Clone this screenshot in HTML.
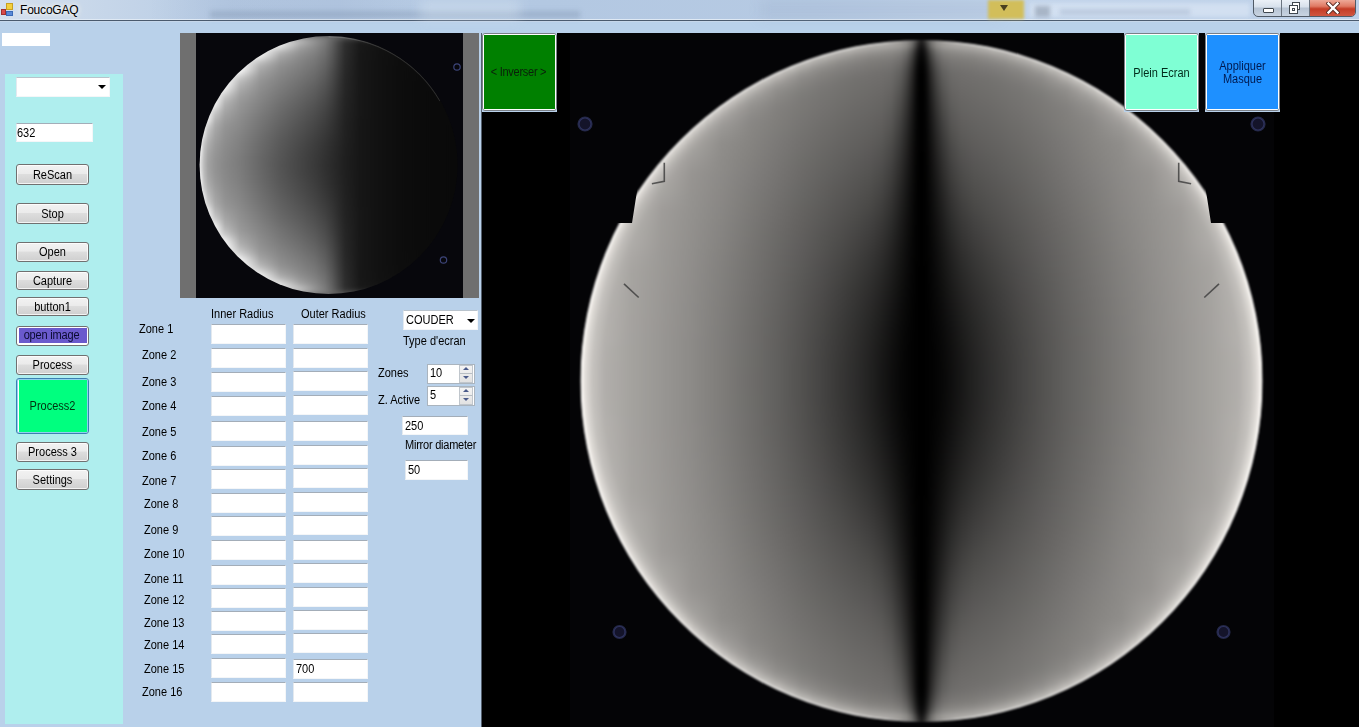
<!DOCTYPE html>
<html><head><meta charset="utf-8"><style>
*{margin:0;padding:0;box-sizing:border-box}
html,body{width:1359px;height:727px;overflow:hidden;background:#B9D1EA;font-family:"Liberation Sans",sans-serif;font-size:11px;color:#000}
.a{position:absolute}
.t{position:absolute;white-space:nowrap;line-height:13px;font-size:12px;transform:scaleX(0.917);transform-origin:0 0}
.c{transform-origin:50% 0}
.tb{position:absolute;background:#fff;border-top:1px solid #a3adb8;border-left:1px solid #e3e9ef;border-right:1px solid #f4f6f8;border-bottom:1px solid #f4f6f8;height:20px}
.btn{position:absolute;border:1px solid #707070;border-radius:3px;
 background:linear-gradient(#f2f2f2 0%,#ebebeb 45%,#dddddd 50%,#cfcfcf 100%);
 box-shadow:inset 0 0 0 1px rgba(255,255,255,.75)}
</style></head><body>
<div class="a" style="left:0px;top:0px;width:1359px;height:20px;background:linear-gradient(90deg,#d5e0ee 0%,#c9d8ea 6%,#b9cde5 16%,#b3c8e2 40%,#b6cae3 60%,#c2d4ea 75%,#bdd0e8 100%)"></div>
<div class="a" style="left:0px;top:19px;width:1359px;height:1px;background:#dfe9f4"></div>
<div class="a" style="left:0px;top:20px;width:1359px;height:1px;background:#4a5a6e"></div>
<div class="a" style="left:0px;top:21px;width:1359px;height:1px;background:#c6d7ea"></div>
<div class="a" style="left:150px;top:0px;width:270px;height:19px;background:linear-gradient(90deg,rgba(160,180,210,0) 0%,rgba(160,180,210,.35) 30%,rgba(160,180,210,.35) 70%,rgba(160,180,210,0) 100%)"></div>
<div class="a" style="left:210px;top:11px;width:370px;height:7px;background:rgba(110,130,160,.30);filter:blur(2.5px)"></div>
<div class="a" style="left:420px;top:0px;width:100px;height:19px;background:rgba(215,228,242,.45);filter:blur(6px)"></div>
<div class="a" style="left:760px;top:0px;width:240px;height:19px;background:rgba(150,170,200,.25);filter:blur(6px)"></div>
<div class="a" style="left:1030px;top:3px;width:220px;height:14px;background:rgba(225,235,248,.55);filter:blur(2px)"></div>
<div class="a" style="left:1060px;top:9px;width:130px;height:6px;background:rgba(120,140,170,.25);filter:blur(2px)"></div>
<div class="a" style="left:1035px;top:6px;width:15px;height:11px;background:rgba(90,100,120,.35);filter:blur(2px)"></div>
<div class="a" style="left:988px;top:0px;width:36px;height:19px;background:#d2be5a;filter:blur(1.5px)"></div>
<div class="a" style="left:1000px;top:5px;width:0;height:0;border-left:4px solid transparent;border-right:4px solid transparent;border-top:6px solid #4a4020;filter:blur(.6px)"></div>
<div class="a" style="left:1px;top:9px;width:5px;height:6px;background:#d84a4a;border:1px solid #a03030"></div>
<div class="a" style="left:6px;top:3px;width:7px;height:7px;background:#f3cf3c;border:1px solid #c8a020"></div>
<div class="a" style="left:6px;top:11px;width:7px;height:5px;background:#5a8ad8;border:1px solid #3a6ab8"></div>
<div class="t" style="left:20px;top:3px;font-size:12px;line-height:14px;color:#000;transform:none;letter-spacing:-0.2px;text-shadow:0 0 4px #fff,0 0 6px #f4f0e0">FoucoGAQ</div>
<div class="a" style="left:1253px;top:-2px;width:103px;height:19px;border:1px solid #505a66;border-radius:0 0 5px 5px;overflow:hidden;background:linear-gradient(#eef3f9,#d8e1ec 45%,#b7c4d4 55%,#c9d4e1)"><div class="a" style="left:56px;top:0;width:46px;height:18px;background:linear-gradient(#f0b0a0,#e07a64 40%,#c43c26 55%,#d25a44)"></div><div class="a" style="left:27px;top:0;width:1px;height:18px;background:#6a7480"></div><div class="a" style="left:55px;top:0;width:1px;height:18px;background:#6a7480"></div><div class="a" style="left:9px;top:9px;width:11px;height:5px;background:#fff;border:1px solid #404850;border-radius:1px"></div><div class="a" style="left:38px;top:3px;width:8px;height:8px;background:#fff;border:1px solid #404850"></div><div class="a" style="left:35px;top:6px;width:9px;height:9px;background:#fff;border:1px solid #404850"></div><div class="a" style="left:38px;top:9px;width:3px;height:3px;border:1px solid #404850"></div><svg class="a" style="left:72px;top:3px" width="14" height="12" viewBox="0 0 14 12"><path d="M2.5 1.5 L11.5 10.5 M11.5 1.5 L2.5 10.5" stroke="#5a2a22" stroke-width="4.2" stroke-linecap="square"/><path d="M2.5 1.5 L11.5 10.5 M11.5 1.5 L2.5 10.5" stroke="#fff" stroke-width="2.4" stroke-linecap="square"/></svg></div>
<div class="a" style="left:2px;top:33px;width:48px;height:13px;background:#fff"></div>
<div class="a" style="left:5px;top:74px;width:118px;height:650px;background:#AFEEEE"></div>
<div class="tb" style="left:16px;top:77px;width:94px;height:20px;border-top-color:#b9c3cc"></div>
<div class="a" style="left:98px;top:85px;width:0;height:0;border-left:4px solid transparent;border-right:4px solid transparent;border-top:4px solid #000"></div>
<div class="tb" style="left:16px;top:123px;width:77px;height:19px"></div>
<div class="t" style="left:17px;top:127px;color:#000;font-size:12px;">632</div>
<div class="btn" style="left:16px;top:164px;width:73px;height:21px"></div>
<div class="t c" style="left:16px;top:169px;width:73px;text-align:center">ReScan</div>
<div class="btn" style="left:16px;top:203px;width:73px;height:21px"></div>
<div class="t c" style="left:16px;top:208px;width:73px;text-align:center">Stop</div>
<div class="btn" style="left:16px;top:242px;width:73px;height:20px"></div>
<div class="t c" style="left:16px;top:246px;width:73px;text-align:center">Open</div>
<div class="btn" style="left:16px;top:271px;width:73px;height:19px"></div>
<div class="t c" style="left:16px;top:275px;width:73px;text-align:center">Capture</div>
<div class="btn" style="left:16px;top:297px;width:73px;height:19px"></div>
<div class="t c" style="left:16px;top:301px;width:73px;text-align:center">button1</div>
<div class="a" style="left:16px;top:326px;width:73px;height:20px;border:1px solid #707070;border-radius:3px;background:#fff"></div>
<div class="a" style="left:19px;top:328px;width:68px;height:15px;background:#6A5ACD"></div>
<div class="t c" style="left:15px;top:329px;width:73px;text-align:center;color:#0a0a30;letter-spacing:-0.2px">open image</div>
<div class="btn" style="left:16px;top:355px;width:73px;height:20px"></div>
<div class="t c" style="left:16px;top:359px;width:73px;text-align:center">Process</div>
<div class="a" style="left:16px;top:378px;width:73px;height:56px;border:1px solid #3c7fb1;border-radius:3px;background:#fff;box-shadow:inset 0 0 0 1px #8fd0f0"></div>
<div class="a" style="left:19px;top:380px;width:68px;height:52px;background:#00FF7F"></div>
<div class="t c" style="left:16px;top:400px;width:73px;text-align:center;color:#003010">Process2</div>
<div class="btn" style="left:16px;top:442px;width:73px;height:20px"></div>
<div class="t c" style="left:16px;top:446px;width:73px;text-align:center">Process 3</div>
<div class="btn" style="left:16px;top:469px;width:73px;height:21px"></div>
<div class="t c" style="left:16px;top:474px;width:73px;text-align:center">Settings</div>
<div class="t" style="left:211px;top:308px;color:#000;font-size:12px;">Inner Radius</div>
<div class="t" style="left:301px;top:308px;color:#000;font-size:12px;">Outer Radius</div>
<div class="t" style="left:139px;top:323px;color:#000;font-size:12px;">Zone 1</div>
<div class="tb" style="left:211px;top:324px;width:75px;height:20px"></div>
<div class="tb" style="left:293px;top:324px;width:75px;height:20px"></div>
<div class="t" style="left:142px;top:349px;color:#000;font-size:12px;">Zone 2</div>
<div class="tb" style="left:211px;top:348px;width:75px;height:20px"></div>
<div class="tb" style="left:293px;top:348px;width:75px;height:20px"></div>
<div class="t" style="left:142px;top:376px;color:#000;font-size:12px;">Zone 3</div>
<div class="tb" style="left:211px;top:372px;width:75px;height:20px"></div>
<div class="tb" style="left:293px;top:371px;width:75px;height:20px"></div>
<div class="t" style="left:142px;top:400px;color:#000;font-size:12px;">Zone 4</div>
<div class="tb" style="left:211px;top:396px;width:75px;height:20px"></div>
<div class="tb" style="left:293px;top:395px;width:75px;height:20px"></div>
<div class="t" style="left:142px;top:426px;color:#000;font-size:12px;">Zone 5</div>
<div class="tb" style="left:211px;top:421px;width:75px;height:20px"></div>
<div class="tb" style="left:293px;top:421px;width:75px;height:20px"></div>
<div class="t" style="left:142px;top:450px;color:#000;font-size:12px;">Zone 6</div>
<div class="tb" style="left:211px;top:446px;width:75px;height:20px"></div>
<div class="tb" style="left:293px;top:445px;width:75px;height:20px"></div>
<div class="t" style="left:142px;top:475px;color:#000;font-size:12px;">Zone 7</div>
<div class="tb" style="left:211px;top:469px;width:75px;height:20px"></div>
<div class="tb" style="left:293px;top:468px;width:75px;height:20px"></div>
<div class="t" style="left:144px;top:498px;color:#000;font-size:12px;">Zone 8</div>
<div class="tb" style="left:211px;top:493px;width:75px;height:20px"></div>
<div class="tb" style="left:293px;top:492px;width:75px;height:20px"></div>
<div class="t" style="left:144px;top:524px;color:#000;font-size:12px;">Zone 9</div>
<div class="tb" style="left:211px;top:516px;width:75px;height:20px"></div>
<div class="tb" style="left:293px;top:515px;width:75px;height:20px"></div>
<div class="t" style="left:144px;top:548px;color:#000;font-size:12px;">Zone 10</div>
<div class="tb" style="left:211px;top:540px;width:75px;height:20px"></div>
<div class="tb" style="left:293px;top:540px;width:75px;height:20px"></div>
<div class="t" style="left:144px;top:573px;color:#000;font-size:12px;">Zone 11</div>
<div class="tb" style="left:211px;top:565px;width:75px;height:20px"></div>
<div class="tb" style="left:293px;top:563px;width:75px;height:20px"></div>
<div class="t" style="left:144px;top:594px;color:#000;font-size:12px;">Zone 12</div>
<div class="tb" style="left:211px;top:588px;width:75px;height:20px"></div>
<div class="tb" style="left:293px;top:587px;width:75px;height:20px"></div>
<div class="t" style="left:144px;top:617px;color:#000;font-size:12px;">Zone 13</div>
<div class="tb" style="left:211px;top:611px;width:75px;height:20px"></div>
<div class="tb" style="left:293px;top:610px;width:75px;height:20px"></div>
<div class="t" style="left:144px;top:639px;color:#000;font-size:12px;">Zone 14</div>
<div class="tb" style="left:211px;top:634px;width:75px;height:20px"></div>
<div class="tb" style="left:293px;top:633px;width:75px;height:20px"></div>
<div class="t" style="left:144px;top:663px;color:#000;font-size:12px;">Zone 15</div>
<div class="tb" style="left:211px;top:658px;width:75px;height:20px"></div>
<div class="tb" style="left:293px;top:659px;width:75px;height:20px"></div>
<div class="t" style="left:296px;top:663px;color:#000;font-size:12px;">700</div>
<div class="t" style="left:142px;top:686px;color:#000;font-size:12px;">Zone 16</div>
<div class="tb" style="left:211px;top:682px;width:75px;height:20px"></div>
<div class="tb" style="left:293px;top:682px;width:75px;height:20px"></div>
<div class="tb" style="left:403px;top:310px;width:75px;height:20px;border-top-color:#b9c3cc"></div>
<div class="t" style="left:406px;top:314px;color:#000;font-size:12px;">COUDER</div>
<div class="a" style="left:467px;top:319px;width:0;height:0;border-left:4px solid transparent;border-right:4px solid transparent;border-top:4px solid #000"></div>
<div class="t" style="left:403px;top:335px;color:#000;font-size:12px;">Type d'ecran</div>
<div class="t" style="left:378px;top:367px;color:#000;font-size:12px;">Zones</div>
<div class="t" style="left:378px;top:394px;color:#000;font-size:12px;">Z. Active</div>
<div class="a" style="left:427px;top:364px;width:48px;height:20px;background:#fff;border:1px solid #aab4be"></div>
<div class="a" style="left:459px;top:365px;width:14px;height:18px;background:linear-gradient(#f4f4f4,#e2e2e2);border:1px solid #c0c6cc"></div>
<div class="a" style="left:460px;top:373px;width:12px;height:1px;background:#b8bec4"></div>
<div class="a" style="left:463px;top:367px;width:0;height:0;border-left:3px solid transparent;border-right:3px solid transparent;border-bottom:3px solid #4a5a8a"></div>
<div class="a" style="left:463px;top:376px;width:0;height:0;border-left:3px solid transparent;border-right:3px solid transparent;border-top:3px solid #4a5a8a"></div>
<div class="t" style="left:430px;top:367px;color:#000;font-size:12px;">10</div>
<div class="a" style="left:427px;top:386px;width:48px;height:20px;background:#fff;border:1px solid #aab4be"></div>
<div class="a" style="left:459px;top:387px;width:14px;height:18px;background:linear-gradient(#f4f4f4,#e2e2e2);border:1px solid #c0c6cc"></div>
<div class="a" style="left:460px;top:395px;width:12px;height:1px;background:#b8bec4"></div>
<div class="a" style="left:463px;top:389px;width:0;height:0;border-left:3px solid transparent;border-right:3px solid transparent;border-bottom:3px solid #4a5a8a"></div>
<div class="a" style="left:463px;top:398px;width:0;height:0;border-left:3px solid transparent;border-right:3px solid transparent;border-top:3px solid #4a5a8a"></div>
<div class="t" style="left:430px;top:389px;color:#000;font-size:12px;">5</div>
<div class="tb" style="left:402px;top:416px;width:66px;height:19px"></div>
<div class="t" style="left:405px;top:420px;color:#000;font-size:12px;">250</div>
<div class="t" style="left:405px;top:439px;color:#000;font-size:12px;letter-spacing:-0.25px">Mirror diameter</div>
<div class="tb" style="left:405px;top:460px;width:63px;height:20px"></div>
<div class="t" style="left:408px;top:464px;color:#000;font-size:12px;">50</div>
<svg class="a" style="left:180px;top:33px" width="299" height="265" viewBox="180 33 299 265"><defs><linearGradient id="s0" gradientUnits="userSpaceOnUse" x1="199" y1="0" x2="463" y2="0"><stop offset="0.000" stop-color="#767676"/><stop offset="0.008" stop-color="#767676"/><stop offset="0.019" stop-color="#767676"/><stop offset="0.034" stop-color="#767676"/><stop offset="0.061" stop-color="#767676"/><stop offset="0.098" stop-color="#767676"/><stop offset="0.155" stop-color="#767676"/><stop offset="0.231" stop-color="#767676"/><stop offset="0.307" stop-color="#767676"/><stop offset="0.383" stop-color="#767676"/><stop offset="0.439" stop-color="#767676"/><stop offset="0.477" stop-color="#767676"/><stop offset="0.504" stop-color="#717171"/><stop offset="0.527" stop-color="#717171"/><stop offset="0.553" stop-color="#717171"/><stop offset="0.610" stop-color="#717171"/><stop offset="0.686" stop-color="#717171"/><stop offset="0.761" stop-color="#717171"/><stop offset="0.837" stop-color="#717171"/><stop offset="0.913" stop-color="#717171"/><stop offset="1.000" stop-color="#717171"/></linearGradient><linearGradient id="s1" gradientUnits="userSpaceOnUse" x1="199" y1="0" x2="463" y2="0"><stop offset="0.000" stop-color="#e2e2e2"/><stop offset="0.008" stop-color="#e2e2e2"/><stop offset="0.019" stop-color="#e2e2e2"/><stop offset="0.034" stop-color="#e2e2e2"/><stop offset="0.061" stop-color="#e2e2e2"/><stop offset="0.098" stop-color="#e2e2e2"/><stop offset="0.155" stop-color="#e2e2e2"/><stop offset="0.231" stop-color="#e2e2e2"/><stop offset="0.307" stop-color="#e2e2e2"/><stop offset="0.383" stop-color="#c4c4c4"/><stop offset="0.439" stop-color="#989898"/><stop offset="0.477" stop-color="#7d7d7d"/><stop offset="0.504" stop-color="#626262"/><stop offset="0.527" stop-color="#494949"/><stop offset="0.553" stop-color="#2e2e2e"/><stop offset="0.610" stop-color="#181818"/><stop offset="0.686" stop-color="#171717"/><stop offset="0.761" stop-color="#171717"/><stop offset="0.837" stop-color="#171717"/><stop offset="0.913" stop-color="#171717"/><stop offset="1.000" stop-color="#171717"/></linearGradient><linearGradient id="s2" gradientUnits="userSpaceOnUse" x1="199" y1="0" x2="463" y2="0"><stop offset="0.000" stop-color="#f5f5f5"/><stop offset="0.008" stop-color="#f5f5f5"/><stop offset="0.019" stop-color="#f5f5f5"/><stop offset="0.034" stop-color="#f5f5f5"/><stop offset="0.061" stop-color="#f5f5f5"/><stop offset="0.098" stop-color="#f5f5f5"/><stop offset="0.155" stop-color="#f5f5f5"/><stop offset="0.231" stop-color="#f5f5f5"/><stop offset="0.307" stop-color="#f5f5f5"/><stop offset="0.383" stop-color="#a6a6a6"/><stop offset="0.439" stop-color="#8b8b8b"/><stop offset="0.477" stop-color="#767676"/><stop offset="0.504" stop-color="#5f5f5f"/><stop offset="0.527" stop-color="#464646"/><stop offset="0.553" stop-color="#2e2e2e"/><stop offset="0.610" stop-color="#181818"/><stop offset="0.686" stop-color="#121212"/><stop offset="0.761" stop-color="#121212"/><stop offset="0.837" stop-color="#121212"/><stop offset="0.913" stop-color="#121212"/><stop offset="1.000" stop-color="#121212"/></linearGradient><linearGradient id="s3" gradientUnits="userSpaceOnUse" x1="199" y1="0" x2="463" y2="0"><stop offset="0.000" stop-color="#f8f8f8"/><stop offset="0.008" stop-color="#f8f8f8"/><stop offset="0.019" stop-color="#f8f8f8"/><stop offset="0.034" stop-color="#f8f8f8"/><stop offset="0.061" stop-color="#f8f8f8"/><stop offset="0.098" stop-color="#f8f8f8"/><stop offset="0.155" stop-color="#f8f8f8"/><stop offset="0.231" stop-color="#f8f8f8"/><stop offset="0.307" stop-color="#bebebe"/><stop offset="0.383" stop-color="#969696"/><stop offset="0.439" stop-color="#848484"/><stop offset="0.477" stop-color="#717171"/><stop offset="0.504" stop-color="#5b5b5b"/><stop offset="0.527" stop-color="#444444"/><stop offset="0.553" stop-color="#2d2d2d"/><stop offset="0.610" stop-color="#181818"/><stop offset="0.686" stop-color="#111111"/><stop offset="0.761" stop-color="#0f0f0f"/><stop offset="0.837" stop-color="#0f0f0f"/><stop offset="0.913" stop-color="#0f0f0f"/><stop offset="1.000" stop-color="#0f0f0f"/></linearGradient><linearGradient id="s4" gradientUnits="userSpaceOnUse" x1="199" y1="0" x2="463" y2="0"><stop offset="0.000" stop-color="#fbfbfb"/><stop offset="0.008" stop-color="#fbfbfb"/><stop offset="0.019" stop-color="#fbfbfb"/><stop offset="0.034" stop-color="#fbfbfb"/><stop offset="0.061" stop-color="#fbfbfb"/><stop offset="0.098" stop-color="#fbfbfb"/><stop offset="0.155" stop-color="#fbfbfb"/><stop offset="0.231" stop-color="#fbfbfb"/><stop offset="0.307" stop-color="#a7a7a7"/><stop offset="0.383" stop-color="#8c8c8c"/><stop offset="0.439" stop-color="#7c7c7c"/><stop offset="0.477" stop-color="#6c6c6c"/><stop offset="0.504" stop-color="#585858"/><stop offset="0.527" stop-color="#424242"/><stop offset="0.553" stop-color="#2c2c2c"/><stop offset="0.610" stop-color="#171717"/><stop offset="0.686" stop-color="#111111"/><stop offset="0.761" stop-color="#0e0e0e"/><stop offset="0.837" stop-color="#0e0e0e"/><stop offset="0.913" stop-color="#0e0e0e"/><stop offset="1.000" stop-color="#0e0e0e"/></linearGradient><linearGradient id="s5" gradientUnits="userSpaceOnUse" x1="199" y1="0" x2="463" y2="0"><stop offset="0.000" stop-color="#fdfdfd"/><stop offset="0.008" stop-color="#fdfdfd"/><stop offset="0.019" stop-color="#fdfdfd"/><stop offset="0.034" stop-color="#fdfdfd"/><stop offset="0.061" stop-color="#fdfdfd"/><stop offset="0.098" stop-color="#fdfdfd"/><stop offset="0.155" stop-color="#fdfdfd"/><stop offset="0.231" stop-color="#cacaca"/><stop offset="0.307" stop-color="#9b9b9b"/><stop offset="0.383" stop-color="#858585"/><stop offset="0.439" stop-color="#777777"/><stop offset="0.477" stop-color="#686868"/><stop offset="0.504" stop-color="#555555"/><stop offset="0.527" stop-color="#404040"/><stop offset="0.553" stop-color="#2b2b2b"/><stop offset="0.610" stop-color="#171717"/><stop offset="0.686" stop-color="#111111"/><stop offset="0.761" stop-color="#0d0d0d"/><stop offset="0.837" stop-color="#0d0d0d"/><stop offset="0.913" stop-color="#0d0d0d"/><stop offset="1.000" stop-color="#0d0d0d"/></linearGradient><linearGradient id="s6" gradientUnits="userSpaceOnUse" x1="199" y1="0" x2="463" y2="0"><stop offset="0.000" stop-color="#fefefe"/><stop offset="0.008" stop-color="#fefefe"/><stop offset="0.019" stop-color="#fefefe"/><stop offset="0.034" stop-color="#fefefe"/><stop offset="0.061" stop-color="#fefefe"/><stop offset="0.098" stop-color="#fefefe"/><stop offset="0.155" stop-color="#fefefe"/><stop offset="0.231" stop-color="#b1b1b1"/><stop offset="0.307" stop-color="#909090"/><stop offset="0.383" stop-color="#808080"/><stop offset="0.439" stop-color="#737373"/><stop offset="0.477" stop-color="#646464"/><stop offset="0.504" stop-color="#525252"/><stop offset="0.527" stop-color="#3e3e3e"/><stop offset="0.553" stop-color="#2a2a2a"/><stop offset="0.610" stop-color="#171717"/><stop offset="0.686" stop-color="#111111"/><stop offset="0.761" stop-color="#0d0d0d"/><stop offset="0.837" stop-color="#0c0c0c"/><stop offset="0.913" stop-color="#0c0c0c"/><stop offset="1.000" stop-color="#0c0c0c"/></linearGradient><linearGradient id="s7" gradientUnits="userSpaceOnUse" x1="199" y1="0" x2="463" y2="0"><stop offset="0.000" stop-color="#ffffff"/><stop offset="0.008" stop-color="#ffffff"/><stop offset="0.019" stop-color="#ffffff"/><stop offset="0.034" stop-color="#ffffff"/><stop offset="0.061" stop-color="#ffffff"/><stop offset="0.098" stop-color="#ffffff"/><stop offset="0.155" stop-color="#ffffff"/><stop offset="0.231" stop-color="#a6a6a6"/><stop offset="0.307" stop-color="#8b8b8b"/><stop offset="0.383" stop-color="#7b7b7b"/><stop offset="0.439" stop-color="#6e6e6e"/><stop offset="0.477" stop-color="#606060"/><stop offset="0.504" stop-color="#4e4e4e"/><stop offset="0.527" stop-color="#3c3c3c"/><stop offset="0.553" stop-color="#292929"/><stop offset="0.610" stop-color="#171717"/><stop offset="0.686" stop-color="#111111"/><stop offset="0.761" stop-color="#0d0d0d"/><stop offset="0.837" stop-color="#0c0c0c"/><stop offset="0.913" stop-color="#0c0c0c"/><stop offset="1.000" stop-color="#0c0c0c"/></linearGradient><linearGradient id="s8" gradientUnits="userSpaceOnUse" x1="199" y1="0" x2="463" y2="0"><stop offset="0.000" stop-color="#ffffff"/><stop offset="0.008" stop-color="#ffffff"/><stop offset="0.019" stop-color="#ffffff"/><stop offset="0.034" stop-color="#ffffff"/><stop offset="0.061" stop-color="#ffffff"/><stop offset="0.098" stop-color="#ffffff"/><stop offset="0.155" stop-color="#d5d5d5"/><stop offset="0.231" stop-color="#9c9c9c"/><stop offset="0.307" stop-color="#868686"/><stop offset="0.383" stop-color="#777777"/><stop offset="0.439" stop-color="#6a6a6a"/><stop offset="0.477" stop-color="#5c5c5c"/><stop offset="0.504" stop-color="#4b4b4b"/><stop offset="0.527" stop-color="#3a3a3a"/><stop offset="0.553" stop-color="#282828"/><stop offset="0.610" stop-color="#171717"/><stop offset="0.686" stop-color="#111111"/><stop offset="0.761" stop-color="#0d0d0d"/><stop offset="0.837" stop-color="#0b0b0b"/><stop offset="0.913" stop-color="#0b0b0b"/><stop offset="1.000" stop-color="#0b0b0b"/></linearGradient><linearGradient id="s9" gradientUnits="userSpaceOnUse" x1="199" y1="0" x2="463" y2="0"><stop offset="0.000" stop-color="#fefefe"/><stop offset="0.008" stop-color="#fefefe"/><stop offset="0.019" stop-color="#fefefe"/><stop offset="0.034" stop-color="#fefefe"/><stop offset="0.061" stop-color="#fefefe"/><stop offset="0.098" stop-color="#fefefe"/><stop offset="0.155" stop-color="#bfbfbf"/><stop offset="0.231" stop-color="#959595"/><stop offset="0.307" stop-color="#828282"/><stop offset="0.383" stop-color="#727272"/><stop offset="0.439" stop-color="#666666"/><stop offset="0.477" stop-color="#585858"/><stop offset="0.504" stop-color="#494949"/><stop offset="0.527" stop-color="#383838"/><stop offset="0.553" stop-color="#272727"/><stop offset="0.610" stop-color="#171717"/><stop offset="0.686" stop-color="#111111"/><stop offset="0.761" stop-color="#0d0d0d"/><stop offset="0.837" stop-color="#0b0b0b"/><stop offset="0.913" stop-color="#0b0b0b"/><stop offset="1.000" stop-color="#0b0b0b"/></linearGradient><linearGradient id="s10" gradientUnits="userSpaceOnUse" x1="199" y1="0" x2="463" y2="0"><stop offset="0.000" stop-color="#fcfcfc"/><stop offset="0.008" stop-color="#fcfcfc"/><stop offset="0.019" stop-color="#fcfcfc"/><stop offset="0.034" stop-color="#fcfcfc"/><stop offset="0.061" stop-color="#fcfcfc"/><stop offset="0.098" stop-color="#fcfcfc"/><stop offset="0.155" stop-color="#b1b1b1"/><stop offset="0.231" stop-color="#909090"/><stop offset="0.307" stop-color="#7e7e7e"/><stop offset="0.383" stop-color="#6e6e6e"/><stop offset="0.439" stop-color="#616161"/><stop offset="0.477" stop-color="#545454"/><stop offset="0.504" stop-color="#464646"/><stop offset="0.527" stop-color="#363636"/><stop offset="0.553" stop-color="#272727"/><stop offset="0.610" stop-color="#171717"/><stop offset="0.686" stop-color="#111111"/><stop offset="0.761" stop-color="#0d0d0d"/><stop offset="0.837" stop-color="#0b0b0b"/><stop offset="0.913" stop-color="#0a0a0a"/><stop offset="1.000" stop-color="#0a0a0a"/></linearGradient><linearGradient id="s11" gradientUnits="userSpaceOnUse" x1="199" y1="0" x2="463" y2="0"><stop offset="0.000" stop-color="#fafafa"/><stop offset="0.008" stop-color="#fafafa"/><stop offset="0.019" stop-color="#fafafa"/><stop offset="0.034" stop-color="#fafafa"/><stop offset="0.061" stop-color="#fafafa"/><stop offset="0.098" stop-color="#e6e6e6"/><stop offset="0.155" stop-color="#a8a8a8"/><stop offset="0.231" stop-color="#8c8c8c"/><stop offset="0.307" stop-color="#7a7a7a"/><stop offset="0.383" stop-color="#6a6a6a"/><stop offset="0.439" stop-color="#5d5d5d"/><stop offset="0.477" stop-color="#515151"/><stop offset="0.504" stop-color="#434343"/><stop offset="0.527" stop-color="#353535"/><stop offset="0.553" stop-color="#262626"/><stop offset="0.610" stop-color="#171717"/><stop offset="0.686" stop-color="#111111"/><stop offset="0.761" stop-color="#0d0d0d"/><stop offset="0.837" stop-color="#0b0b0b"/><stop offset="0.913" stop-color="#0a0a0a"/><stop offset="1.000" stop-color="#0a0a0a"/></linearGradient><linearGradient id="s12" gradientUnits="userSpaceOnUse" x1="199" y1="0" x2="463" y2="0"><stop offset="0.000" stop-color="#f9f9f9"/><stop offset="0.008" stop-color="#f9f9f9"/><stop offset="0.019" stop-color="#f9f9f9"/><stop offset="0.034" stop-color="#f9f9f9"/><stop offset="0.061" stop-color="#f9f9f9"/><stop offset="0.098" stop-color="#cbcbcb"/><stop offset="0.155" stop-color="#9f9f9f"/><stop offset="0.231" stop-color="#888888"/><stop offset="0.307" stop-color="#767676"/><stop offset="0.383" stop-color="#666666"/><stop offset="0.439" stop-color="#5a5a5a"/><stop offset="0.477" stop-color="#4d4d4d"/><stop offset="0.504" stop-color="#404040"/><stop offset="0.527" stop-color="#333333"/><stop offset="0.553" stop-color="#252525"/><stop offset="0.610" stop-color="#171717"/><stop offset="0.686" stop-color="#111111"/><stop offset="0.761" stop-color="#0d0d0d"/><stop offset="0.837" stop-color="#0b0b0b"/><stop offset="0.913" stop-color="#0a0a0a"/><stop offset="1.000" stop-color="#0a0a0a"/></linearGradient><linearGradient id="s13" gradientUnits="userSpaceOnUse" x1="199" y1="0" x2="463" y2="0"><stop offset="0.000" stop-color="#f7f7f7"/><stop offset="0.008" stop-color="#f7f7f7"/><stop offset="0.019" stop-color="#f7f7f7"/><stop offset="0.034" stop-color="#f7f7f7"/><stop offset="0.061" stop-color="#f7f7f7"/><stop offset="0.098" stop-color="#b9b9b9"/><stop offset="0.155" stop-color="#999999"/><stop offset="0.231" stop-color="#858585"/><stop offset="0.307" stop-color="#727272"/><stop offset="0.383" stop-color="#626262"/><stop offset="0.439" stop-color="#565656"/><stop offset="0.477" stop-color="#4a4a4a"/><stop offset="0.504" stop-color="#3e3e3e"/><stop offset="0.527" stop-color="#313131"/><stop offset="0.553" stop-color="#242424"/><stop offset="0.610" stop-color="#171717"/><stop offset="0.686" stop-color="#111111"/><stop offset="0.761" stop-color="#0d0d0d"/><stop offset="0.837" stop-color="#0b0b0b"/><stop offset="0.913" stop-color="#0a0a0a"/><stop offset="1.000" stop-color="#0a0a0a"/></linearGradient><linearGradient id="s14" gradientUnits="userSpaceOnUse" x1="199" y1="0" x2="463" y2="0"><stop offset="0.000" stop-color="#f5f5f5"/><stop offset="0.008" stop-color="#f5f5f5"/><stop offset="0.019" stop-color="#f5f5f5"/><stop offset="0.034" stop-color="#f5f5f5"/><stop offset="0.061" stop-color="#efefef"/><stop offset="0.098" stop-color="#aeaeae"/><stop offset="0.155" stop-color="#959595"/><stop offset="0.231" stop-color="#818181"/><stop offset="0.307" stop-color="#6e6e6e"/><stop offset="0.383" stop-color="#5f5f5f"/><stop offset="0.439" stop-color="#525252"/><stop offset="0.477" stop-color="#474747"/><stop offset="0.504" stop-color="#3c3c3c"/><stop offset="0.527" stop-color="#303030"/><stop offset="0.553" stop-color="#242424"/><stop offset="0.610" stop-color="#171717"/><stop offset="0.686" stop-color="#111111"/><stop offset="0.761" stop-color="#0d0d0d"/><stop offset="0.837" stop-color="#0b0b0b"/><stop offset="0.913" stop-color="#0a0a0a"/><stop offset="1.000" stop-color="#0a0a0a"/></linearGradient><linearGradient id="s15" gradientUnits="userSpaceOnUse" x1="199" y1="0" x2="463" y2="0"><stop offset="0.000" stop-color="#f3f3f3"/><stop offset="0.008" stop-color="#f3f3f3"/><stop offset="0.019" stop-color="#f3f3f3"/><stop offset="0.034" stop-color="#f3f3f3"/><stop offset="0.061" stop-color="#cdcdcd"/><stop offset="0.098" stop-color="#a7a7a7"/><stop offset="0.155" stop-color="#929292"/><stop offset="0.231" stop-color="#7e7e7e"/><stop offset="0.307" stop-color="#6b6b6b"/><stop offset="0.383" stop-color="#5b5b5b"/><stop offset="0.439" stop-color="#4f4f4f"/><stop offset="0.477" stop-color="#444444"/><stop offset="0.504" stop-color="#393939"/><stop offset="0.527" stop-color="#2f2f2f"/><stop offset="0.553" stop-color="#232323"/><stop offset="0.610" stop-color="#171717"/><stop offset="0.686" stop-color="#111111"/><stop offset="0.761" stop-color="#0d0d0d"/><stop offset="0.837" stop-color="#0b0b0b"/><stop offset="0.913" stop-color="#0a0a0a"/><stop offset="1.000" stop-color="#0a0a0a"/></linearGradient><linearGradient id="s16" gradientUnits="userSpaceOnUse" x1="199" y1="0" x2="463" y2="0"><stop offset="0.000" stop-color="#f2f2f2"/><stop offset="0.008" stop-color="#f2f2f2"/><stop offset="0.019" stop-color="#f2f2f2"/><stop offset="0.034" stop-color="#f2f2f2"/><stop offset="0.061" stop-color="#c0c0c0"/><stop offset="0.098" stop-color="#a0a0a0"/><stop offset="0.155" stop-color="#8e8e8e"/><stop offset="0.231" stop-color="#7a7a7a"/><stop offset="0.307" stop-color="#686868"/><stop offset="0.383" stop-color="#585858"/><stop offset="0.439" stop-color="#4c4c4c"/><stop offset="0.477" stop-color="#414141"/><stop offset="0.504" stop-color="#373737"/><stop offset="0.527" stop-color="#2d2d2d"/><stop offset="0.553" stop-color="#232323"/><stop offset="0.610" stop-color="#171717"/><stop offset="0.686" stop-color="#111111"/><stop offset="0.761" stop-color="#0d0d0d"/><stop offset="0.837" stop-color="#0b0b0b"/><stop offset="0.913" stop-color="#0a0a0a"/><stop offset="1.000" stop-color="#0a0a0a"/></linearGradient><linearGradient id="s17" gradientUnits="userSpaceOnUse" x1="199" y1="0" x2="463" y2="0"><stop offset="0.000" stop-color="#f0f0f0"/><stop offset="0.008" stop-color="#f0f0f0"/><stop offset="0.019" stop-color="#f0f0f0"/><stop offset="0.034" stop-color="#f0f0f0"/><stop offset="0.061" stop-color="#b3b3b3"/><stop offset="0.098" stop-color="#9a9a9a"/><stop offset="0.155" stop-color="#8b8b8b"/><stop offset="0.231" stop-color="#777777"/><stop offset="0.307" stop-color="#656565"/><stop offset="0.383" stop-color="#555555"/><stop offset="0.439" stop-color="#494949"/><stop offset="0.477" stop-color="#3f3f3f"/><stop offset="0.504" stop-color="#353535"/><stop offset="0.527" stop-color="#2c2c2c"/><stop offset="0.553" stop-color="#222222"/><stop offset="0.610" stop-color="#161616"/><stop offset="0.686" stop-color="#111111"/><stop offset="0.761" stop-color="#0d0d0d"/><stop offset="0.837" stop-color="#0b0b0b"/><stop offset="0.913" stop-color="#0a0a0a"/><stop offset="1.000" stop-color="#090909"/></linearGradient><linearGradient id="s18" gradientUnits="userSpaceOnUse" x1="199" y1="0" x2="463" y2="0"><stop offset="0.000" stop-color="#eeeeee"/><stop offset="0.008" stop-color="#eeeeee"/><stop offset="0.019" stop-color="#eeeeee"/><stop offset="0.034" stop-color="#cecece"/><stop offset="0.061" stop-color="#aaaaaa"/><stop offset="0.098" stop-color="#959595"/><stop offset="0.155" stop-color="#898989"/><stop offset="0.231" stop-color="#757575"/><stop offset="0.307" stop-color="#626262"/><stop offset="0.383" stop-color="#525252"/><stop offset="0.439" stop-color="#464646"/><stop offset="0.477" stop-color="#3c3c3c"/><stop offset="0.504" stop-color="#333333"/><stop offset="0.527" stop-color="#2b2b2b"/><stop offset="0.553" stop-color="#212121"/><stop offset="0.610" stop-color="#161616"/><stop offset="0.686" stop-color="#111111"/><stop offset="0.761" stop-color="#0d0d0d"/><stop offset="0.837" stop-color="#0b0b0b"/><stop offset="0.913" stop-color="#0a0a0a"/><stop offset="1.000" stop-color="#090909"/></linearGradient><linearGradient id="s19" gradientUnits="userSpaceOnUse" x1="199" y1="0" x2="463" y2="0"><stop offset="0.000" stop-color="#ededed"/><stop offset="0.008" stop-color="#ededed"/><stop offset="0.019" stop-color="#ededed"/><stop offset="0.034" stop-color="#c4c4c4"/><stop offset="0.061" stop-color="#a5a5a5"/><stop offset="0.098" stop-color="#929292"/><stop offset="0.155" stop-color="#868686"/><stop offset="0.231" stop-color="#727272"/><stop offset="0.307" stop-color="#5f5f5f"/><stop offset="0.383" stop-color="#505050"/><stop offset="0.439" stop-color="#444444"/><stop offset="0.477" stop-color="#3a3a3a"/><stop offset="0.504" stop-color="#323232"/><stop offset="0.527" stop-color="#2a2a2a"/><stop offset="0.553" stop-color="#212121"/><stop offset="0.610" stop-color="#161616"/><stop offset="0.686" stop-color="#111111"/><stop offset="0.761" stop-color="#0d0d0d"/><stop offset="0.837" stop-color="#0b0b0b"/><stop offset="0.913" stop-color="#0a0a0a"/><stop offset="1.000" stop-color="#090909"/></linearGradient><linearGradient id="s20" gradientUnits="userSpaceOnUse" x1="199" y1="0" x2="463" y2="0"><stop offset="0.000" stop-color="#ededed"/><stop offset="0.008" stop-color="#ededed"/><stop offset="0.019" stop-color="#e3e3e3"/><stop offset="0.034" stop-color="#bbbbbb"/><stop offset="0.061" stop-color="#a1a1a1"/><stop offset="0.098" stop-color="#909090"/><stop offset="0.155" stop-color="#838383"/><stop offset="0.231" stop-color="#6f6f6f"/><stop offset="0.307" stop-color="#5d5d5d"/><stop offset="0.383" stop-color="#4d4d4d"/><stop offset="0.439" stop-color="#414141"/><stop offset="0.477" stop-color="#383838"/><stop offset="0.504" stop-color="#303030"/><stop offset="0.527" stop-color="#292929"/><stop offset="0.553" stop-color="#212121"/><stop offset="0.610" stop-color="#161616"/><stop offset="0.686" stop-color="#111111"/><stop offset="0.761" stop-color="#0d0d0d"/><stop offset="0.837" stop-color="#0b0b0b"/><stop offset="0.913" stop-color="#0a0a0a"/><stop offset="1.000" stop-color="#090909"/></linearGradient><linearGradient id="s21" gradientUnits="userSpaceOnUse" x1="199" y1="0" x2="463" y2="0"><stop offset="0.000" stop-color="#eeeeee"/><stop offset="0.008" stop-color="#eeeeee"/><stop offset="0.019" stop-color="#cccccc"/><stop offset="0.034" stop-color="#b3b3b3"/><stop offset="0.061" stop-color="#9d9d9d"/><stop offset="0.098" stop-color="#8e8e8e"/><stop offset="0.155" stop-color="#818181"/><stop offset="0.231" stop-color="#6d6d6d"/><stop offset="0.307" stop-color="#5a5a5a"/><stop offset="0.383" stop-color="#4b4b4b"/><stop offset="0.439" stop-color="#3f3f3f"/><stop offset="0.477" stop-color="#363636"/><stop offset="0.504" stop-color="#2e2e2e"/><stop offset="0.527" stop-color="#282828"/><stop offset="0.553" stop-color="#202020"/><stop offset="0.610" stop-color="#161616"/><stop offset="0.686" stop-color="#111111"/><stop offset="0.761" stop-color="#0d0d0d"/><stop offset="0.837" stop-color="#0b0b0b"/><stop offset="0.913" stop-color="#0a0a0a"/><stop offset="1.000" stop-color="#090909"/></linearGradient><linearGradient id="s22" gradientUnits="userSpaceOnUse" x1="199" y1="0" x2="463" y2="0"><stop offset="0.000" stop-color="#eeeeee"/><stop offset="0.008" stop-color="#eeeeee"/><stop offset="0.019" stop-color="#c5c5c5"/><stop offset="0.034" stop-color="#adadad"/><stop offset="0.061" stop-color="#999999"/><stop offset="0.098" stop-color="#8c8c8c"/><stop offset="0.155" stop-color="#7f7f7f"/><stop offset="0.231" stop-color="#6b6b6b"/><stop offset="0.307" stop-color="#595959"/><stop offset="0.383" stop-color="#494949"/><stop offset="0.439" stop-color="#3d3d3d"/><stop offset="0.477" stop-color="#343434"/><stop offset="0.504" stop-color="#2d2d2d"/><stop offset="0.527" stop-color="#272727"/><stop offset="0.553" stop-color="#202020"/><stop offset="0.610" stop-color="#161616"/><stop offset="0.686" stop-color="#111111"/><stop offset="0.761" stop-color="#0d0d0d"/><stop offset="0.837" stop-color="#0b0b0b"/><stop offset="0.913" stop-color="#0a0a0a"/><stop offset="1.000" stop-color="#090909"/></linearGradient><linearGradient id="s23" gradientUnits="userSpaceOnUse" x1="199" y1="0" x2="463" y2="0"><stop offset="0.000" stop-color="#eeeeee"/><stop offset="0.008" stop-color="#ececec"/><stop offset="0.019" stop-color="#c0c0c0"/><stop offset="0.034" stop-color="#a8a8a8"/><stop offset="0.061" stop-color="#979797"/><stop offset="0.098" stop-color="#8a8a8a"/><stop offset="0.155" stop-color="#7e7e7e"/><stop offset="0.231" stop-color="#6a6a6a"/><stop offset="0.307" stop-color="#575757"/><stop offset="0.383" stop-color="#474747"/><stop offset="0.439" stop-color="#3c3c3c"/><stop offset="0.477" stop-color="#333333"/><stop offset="0.504" stop-color="#2c2c2c"/><stop offset="0.527" stop-color="#262626"/><stop offset="0.553" stop-color="#1f1f1f"/><stop offset="0.610" stop-color="#161616"/><stop offset="0.686" stop-color="#111111"/><stop offset="0.761" stop-color="#0d0d0d"/><stop offset="0.837" stop-color="#0b0b0b"/><stop offset="0.913" stop-color="#0a0a0a"/><stop offset="1.000" stop-color="#090909"/></linearGradient><linearGradient id="s24" gradientUnits="userSpaceOnUse" x1="199" y1="0" x2="463" y2="0"><stop offset="0.000" stop-color="#eeeeee"/><stop offset="0.008" stop-color="#e1e1e1"/><stop offset="0.019" stop-color="#bdbdbd"/><stop offset="0.034" stop-color="#a4a4a4"/><stop offset="0.061" stop-color="#959595"/><stop offset="0.098" stop-color="#898989"/><stop offset="0.155" stop-color="#7c7c7c"/><stop offset="0.231" stop-color="#686868"/><stop offset="0.307" stop-color="#565656"/><stop offset="0.383" stop-color="#464646"/><stop offset="0.439" stop-color="#3a3a3a"/><stop offset="0.477" stop-color="#323232"/><stop offset="0.504" stop-color="#2b2b2b"/><stop offset="0.527" stop-color="#262626"/><stop offset="0.553" stop-color="#1f1f1f"/><stop offset="0.610" stop-color="#161616"/><stop offset="0.686" stop-color="#111111"/><stop offset="0.761" stop-color="#0d0d0d"/><stop offset="0.837" stop-color="#0b0b0b"/><stop offset="0.913" stop-color="#0a0a0a"/><stop offset="1.000" stop-color="#090909"/></linearGradient><linearGradient id="s25" gradientUnits="userSpaceOnUse" x1="199" y1="0" x2="463" y2="0"><stop offset="0.000" stop-color="#ededed"/><stop offset="0.008" stop-color="#dbdbdb"/><stop offset="0.019" stop-color="#bababa"/><stop offset="0.034" stop-color="#a3a3a3"/><stop offset="0.061" stop-color="#939393"/><stop offset="0.098" stop-color="#888888"/><stop offset="0.155" stop-color="#7b7b7b"/><stop offset="0.231" stop-color="#676767"/><stop offset="0.307" stop-color="#555555"/><stop offset="0.383" stop-color="#454545"/><stop offset="0.439" stop-color="#3a3a3a"/><stop offset="0.477" stop-color="#313131"/><stop offset="0.504" stop-color="#2b2b2b"/><stop offset="0.527" stop-color="#252525"/><stop offset="0.553" stop-color="#1f1f1f"/><stop offset="0.610" stop-color="#161616"/><stop offset="0.686" stop-color="#111111"/><stop offset="0.761" stop-color="#0d0d0d"/><stop offset="0.837" stop-color="#0b0b0b"/><stop offset="0.913" stop-color="#0a0a0a"/><stop offset="1.000" stop-color="#090909"/></linearGradient><linearGradient id="s26" gradientUnits="userSpaceOnUse" x1="199" y1="0" x2="463" y2="0"><stop offset="0.000" stop-color="#ededed"/><stop offset="0.008" stop-color="#d9d9d9"/><stop offset="0.019" stop-color="#bababa"/><stop offset="0.034" stop-color="#a2a2a2"/><stop offset="0.061" stop-color="#939393"/><stop offset="0.098" stop-color="#878787"/><stop offset="0.155" stop-color="#7b7b7b"/><stop offset="0.231" stop-color="#676767"/><stop offset="0.307" stop-color="#545454"/><stop offset="0.383" stop-color="#454545"/><stop offset="0.439" stop-color="#393939"/><stop offset="0.477" stop-color="#303030"/><stop offset="0.504" stop-color="#2a2a2a"/><stop offset="0.527" stop-color="#252525"/><stop offset="0.553" stop-color="#1f1f1f"/><stop offset="0.610" stop-color="#161616"/><stop offset="0.686" stop-color="#111111"/><stop offset="0.761" stop-color="#0d0d0d"/><stop offset="0.837" stop-color="#0b0b0b"/><stop offset="0.913" stop-color="#0a0a0a"/><stop offset="1.000" stop-color="#090909"/></linearGradient><linearGradient id="s27" gradientUnits="userSpaceOnUse" x1="199" y1="0" x2="463" y2="0"><stop offset="0.000" stop-color="#eeeeee"/><stop offset="0.008" stop-color="#dcdcdc"/><stop offset="0.019" stop-color="#bbbbbb"/><stop offset="0.034" stop-color="#a3a3a3"/><stop offset="0.061" stop-color="#939393"/><stop offset="0.098" stop-color="#888888"/><stop offset="0.155" stop-color="#7c7c7c"/><stop offset="0.231" stop-color="#686868"/><stop offset="0.307" stop-color="#555555"/><stop offset="0.383" stop-color="#454545"/><stop offset="0.439" stop-color="#3a3a3a"/><stop offset="0.477" stop-color="#313131"/><stop offset="0.504" stop-color="#2b2b2b"/><stop offset="0.527" stop-color="#252525"/><stop offset="0.553" stop-color="#1f1f1f"/><stop offset="0.610" stop-color="#161616"/><stop offset="0.686" stop-color="#111111"/><stop offset="0.761" stop-color="#0d0d0d"/><stop offset="0.837" stop-color="#0b0b0b"/><stop offset="0.913" stop-color="#0a0a0a"/><stop offset="1.000" stop-color="#090909"/></linearGradient><linearGradient id="s28" gradientUnits="userSpaceOnUse" x1="199" y1="0" x2="463" y2="0"><stop offset="0.000" stop-color="#eeeeee"/><stop offset="0.008" stop-color="#e3e3e3"/><stop offset="0.019" stop-color="#bdbdbd"/><stop offset="0.034" stop-color="#a5a5a5"/><stop offset="0.061" stop-color="#959595"/><stop offset="0.098" stop-color="#898989"/><stop offset="0.155" stop-color="#7d7d7d"/><stop offset="0.231" stop-color="#696969"/><stop offset="0.307" stop-color="#565656"/><stop offset="0.383" stop-color="#464646"/><stop offset="0.439" stop-color="#3b3b3b"/><stop offset="0.477" stop-color="#323232"/><stop offset="0.504" stop-color="#2b2b2b"/><stop offset="0.527" stop-color="#262626"/><stop offset="0.553" stop-color="#1f1f1f"/><stop offset="0.610" stop-color="#161616"/><stop offset="0.686" stop-color="#111111"/><stop offset="0.761" stop-color="#0d0d0d"/><stop offset="0.837" stop-color="#0b0b0b"/><stop offset="0.913" stop-color="#0a0a0a"/><stop offset="1.000" stop-color="#090909"/></linearGradient><linearGradient id="s29" gradientUnits="userSpaceOnUse" x1="199" y1="0" x2="463" y2="0"><stop offset="0.000" stop-color="#eeeeee"/><stop offset="0.008" stop-color="#eeeeee"/><stop offset="0.019" stop-color="#c1c1c1"/><stop offset="0.034" stop-color="#a9a9a9"/><stop offset="0.061" stop-color="#979797"/><stop offset="0.098" stop-color="#8a8a8a"/><stop offset="0.155" stop-color="#7e7e7e"/><stop offset="0.231" stop-color="#6a6a6a"/><stop offset="0.307" stop-color="#575757"/><stop offset="0.383" stop-color="#484848"/><stop offset="0.439" stop-color="#3c3c3c"/><stop offset="0.477" stop-color="#333333"/><stop offset="0.504" stop-color="#2c2c2c"/><stop offset="0.527" stop-color="#262626"/><stop offset="0.553" stop-color="#202020"/><stop offset="0.610" stop-color="#161616"/><stop offset="0.686" stop-color="#111111"/><stop offset="0.761" stop-color="#0d0d0d"/><stop offset="0.837" stop-color="#0b0b0b"/><stop offset="0.913" stop-color="#0a0a0a"/><stop offset="1.000" stop-color="#090909"/></linearGradient><linearGradient id="s30" gradientUnits="userSpaceOnUse" x1="199" y1="0" x2="463" y2="0"><stop offset="0.000" stop-color="#eeeeee"/><stop offset="0.008" stop-color="#eeeeee"/><stop offset="0.019" stop-color="#c7c7c7"/><stop offset="0.034" stop-color="#aeaeae"/><stop offset="0.061" stop-color="#9a9a9a"/><stop offset="0.098" stop-color="#8c8c8c"/><stop offset="0.155" stop-color="#808080"/><stop offset="0.231" stop-color="#6c6c6c"/><stop offset="0.307" stop-color="#595959"/><stop offset="0.383" stop-color="#4a4a4a"/><stop offset="0.439" stop-color="#3e3e3e"/><stop offset="0.477" stop-color="#343434"/><stop offset="0.504" stop-color="#2d2d2d"/><stop offset="0.527" stop-color="#272727"/><stop offset="0.553" stop-color="#202020"/><stop offset="0.610" stop-color="#161616"/><stop offset="0.686" stop-color="#111111"/><stop offset="0.761" stop-color="#0d0d0d"/><stop offset="0.837" stop-color="#0b0b0b"/><stop offset="0.913" stop-color="#0a0a0a"/><stop offset="1.000" stop-color="#090909"/></linearGradient><linearGradient id="s31" gradientUnits="userSpaceOnUse" x1="199" y1="0" x2="463" y2="0"><stop offset="0.000" stop-color="#eeeeee"/><stop offset="0.008" stop-color="#eeeeee"/><stop offset="0.019" stop-color="#d0d0d0"/><stop offset="0.034" stop-color="#b5b5b5"/><stop offset="0.061" stop-color="#9e9e9e"/><stop offset="0.098" stop-color="#8e8e8e"/><stop offset="0.155" stop-color="#828282"/><stop offset="0.231" stop-color="#6e6e6e"/><stop offset="0.307" stop-color="#5b5b5b"/><stop offset="0.383" stop-color="#4b4b4b"/><stop offset="0.439" stop-color="#404040"/><stop offset="0.477" stop-color="#363636"/><stop offset="0.504" stop-color="#2f2f2f"/><stop offset="0.527" stop-color="#282828"/><stop offset="0.553" stop-color="#202020"/><stop offset="0.610" stop-color="#161616"/><stop offset="0.686" stop-color="#111111"/><stop offset="0.761" stop-color="#0d0d0d"/><stop offset="0.837" stop-color="#0b0b0b"/><stop offset="0.913" stop-color="#0a0a0a"/><stop offset="1.000" stop-color="#090909"/></linearGradient><linearGradient id="s32" gradientUnits="userSpaceOnUse" x1="199" y1="0" x2="463" y2="0"><stop offset="0.000" stop-color="#ededed"/><stop offset="0.008" stop-color="#ededed"/><stop offset="0.019" stop-color="#e8e8e8"/><stop offset="0.034" stop-color="#bdbdbd"/><stop offset="0.061" stop-color="#a2a2a2"/><stop offset="0.098" stop-color="#909090"/><stop offset="0.155" stop-color="#848484"/><stop offset="0.231" stop-color="#707070"/><stop offset="0.307" stop-color="#5d5d5d"/><stop offset="0.383" stop-color="#4e4e4e"/><stop offset="0.439" stop-color="#424242"/><stop offset="0.477" stop-color="#383838"/><stop offset="0.504" stop-color="#303030"/><stop offset="0.527" stop-color="#292929"/><stop offset="0.553" stop-color="#212121"/><stop offset="0.610" stop-color="#161616"/><stop offset="0.686" stop-color="#111111"/><stop offset="0.761" stop-color="#0d0d0d"/><stop offset="0.837" stop-color="#0b0b0b"/><stop offset="0.913" stop-color="#0a0a0a"/><stop offset="1.000" stop-color="#090909"/></linearGradient><linearGradient id="s33" gradientUnits="userSpaceOnUse" x1="199" y1="0" x2="463" y2="0"><stop offset="0.000" stop-color="#ededed"/><stop offset="0.008" stop-color="#ededed"/><stop offset="0.019" stop-color="#ededed"/><stop offset="0.034" stop-color="#c6c6c6"/><stop offset="0.061" stop-color="#a6a6a6"/><stop offset="0.098" stop-color="#939393"/><stop offset="0.155" stop-color="#868686"/><stop offset="0.231" stop-color="#727272"/><stop offset="0.307" stop-color="#606060"/><stop offset="0.383" stop-color="#505050"/><stop offset="0.439" stop-color="#444444"/><stop offset="0.477" stop-color="#3a3a3a"/><stop offset="0.504" stop-color="#323232"/><stop offset="0.527" stop-color="#2a2a2a"/><stop offset="0.553" stop-color="#212121"/><stop offset="0.610" stop-color="#161616"/><stop offset="0.686" stop-color="#111111"/><stop offset="0.761" stop-color="#0d0d0d"/><stop offset="0.837" stop-color="#0b0b0b"/><stop offset="0.913" stop-color="#0a0a0a"/><stop offset="1.000" stop-color="#090909"/></linearGradient><linearGradient id="s34" gradientUnits="userSpaceOnUse" x1="199" y1="0" x2="463" y2="0"><stop offset="0.000" stop-color="#eeeeee"/><stop offset="0.008" stop-color="#eeeeee"/><stop offset="0.019" stop-color="#eeeeee"/><stop offset="0.034" stop-color="#d3d3d3"/><stop offset="0.061" stop-color="#ababab"/><stop offset="0.098" stop-color="#969696"/><stop offset="0.155" stop-color="#898989"/><stop offset="0.231" stop-color="#757575"/><stop offset="0.307" stop-color="#626262"/><stop offset="0.383" stop-color="#535353"/><stop offset="0.439" stop-color="#474747"/><stop offset="0.477" stop-color="#3d3d3d"/><stop offset="0.504" stop-color="#343434"/><stop offset="0.527" stop-color="#2b2b2b"/><stop offset="0.553" stop-color="#222222"/><stop offset="0.610" stop-color="#161616"/><stop offset="0.686" stop-color="#111111"/><stop offset="0.761" stop-color="#0d0d0d"/><stop offset="0.837" stop-color="#0b0b0b"/><stop offset="0.913" stop-color="#0a0a0a"/><stop offset="1.000" stop-color="#090909"/></linearGradient><linearGradient id="s35" gradientUnits="userSpaceOnUse" x1="199" y1="0" x2="463" y2="0"><stop offset="0.000" stop-color="#f0f0f0"/><stop offset="0.008" stop-color="#f0f0f0"/><stop offset="0.019" stop-color="#f0f0f0"/><stop offset="0.034" stop-color="#f0f0f0"/><stop offset="0.061" stop-color="#b6b6b6"/><stop offset="0.098" stop-color="#9c9c9c"/><stop offset="0.155" stop-color="#8c8c8c"/><stop offset="0.231" stop-color="#787878"/><stop offset="0.307" stop-color="#656565"/><stop offset="0.383" stop-color="#565656"/><stop offset="0.439" stop-color="#4a4a4a"/><stop offset="0.477" stop-color="#3f3f3f"/><stop offset="0.504" stop-color="#363636"/><stop offset="0.527" stop-color="#2c2c2c"/><stop offset="0.553" stop-color="#222222"/><stop offset="0.610" stop-color="#171717"/><stop offset="0.686" stop-color="#111111"/><stop offset="0.761" stop-color="#0d0d0d"/><stop offset="0.837" stop-color="#0b0b0b"/><stop offset="0.913" stop-color="#0a0a0a"/><stop offset="1.000" stop-color="#090909"/></linearGradient><linearGradient id="s36" gradientUnits="userSpaceOnUse" x1="199" y1="0" x2="463" y2="0"><stop offset="0.000" stop-color="#f2f2f2"/><stop offset="0.008" stop-color="#f2f2f2"/><stop offset="0.019" stop-color="#f2f2f2"/><stop offset="0.034" stop-color="#f2f2f2"/><stop offset="0.061" stop-color="#c2c2c2"/><stop offset="0.098" stop-color="#a2a2a2"/><stop offset="0.155" stop-color="#8f8f8f"/><stop offset="0.231" stop-color="#7b7b7b"/><stop offset="0.307" stop-color="#686868"/><stop offset="0.383" stop-color="#595959"/><stop offset="0.439" stop-color="#4d4d4d"/><stop offset="0.477" stop-color="#424242"/><stop offset="0.504" stop-color="#383838"/><stop offset="0.527" stop-color="#2d2d2d"/><stop offset="0.553" stop-color="#232323"/><stop offset="0.610" stop-color="#171717"/><stop offset="0.686" stop-color="#111111"/><stop offset="0.761" stop-color="#0d0d0d"/><stop offset="0.837" stop-color="#0b0b0b"/><stop offset="0.913" stop-color="#0a0a0a"/><stop offset="1.000" stop-color="#0a0a0a"/></linearGradient><linearGradient id="s37" gradientUnits="userSpaceOnUse" x1="199" y1="0" x2="463" y2="0"><stop offset="0.000" stop-color="#f4f4f4"/><stop offset="0.008" stop-color="#f4f4f4"/><stop offset="0.019" stop-color="#f4f4f4"/><stop offset="0.034" stop-color="#f4f4f4"/><stop offset="0.061" stop-color="#d0d0d0"/><stop offset="0.098" stop-color="#a8a8a8"/><stop offset="0.155" stop-color="#929292"/><stop offset="0.231" stop-color="#7e7e7e"/><stop offset="0.307" stop-color="#6b6b6b"/><stop offset="0.383" stop-color="#5c5c5c"/><stop offset="0.439" stop-color="#505050"/><stop offset="0.477" stop-color="#454545"/><stop offset="0.504" stop-color="#3a3a3a"/><stop offset="0.527" stop-color="#2f2f2f"/><stop offset="0.553" stop-color="#232323"/><stop offset="0.610" stop-color="#171717"/><stop offset="0.686" stop-color="#111111"/><stop offset="0.761" stop-color="#0d0d0d"/><stop offset="0.837" stop-color="#0b0b0b"/><stop offset="0.913" stop-color="#0a0a0a"/><stop offset="1.000" stop-color="#0a0a0a"/></linearGradient><linearGradient id="s38" gradientUnits="userSpaceOnUse" x1="199" y1="0" x2="463" y2="0"><stop offset="0.000" stop-color="#f6f6f6"/><stop offset="0.008" stop-color="#f6f6f6"/><stop offset="0.019" stop-color="#f6f6f6"/><stop offset="0.034" stop-color="#f6f6f6"/><stop offset="0.061" stop-color="#f6f6f6"/><stop offset="0.098" stop-color="#b0b0b0"/><stop offset="0.155" stop-color="#969696"/><stop offset="0.231" stop-color="#828282"/><stop offset="0.307" stop-color="#6f6f6f"/><stop offset="0.383" stop-color="#606060"/><stop offset="0.439" stop-color="#535353"/><stop offset="0.477" stop-color="#484848"/><stop offset="0.504" stop-color="#3c3c3c"/><stop offset="0.527" stop-color="#303030"/><stop offset="0.553" stop-color="#242424"/><stop offset="0.610" stop-color="#171717"/><stop offset="0.686" stop-color="#111111"/><stop offset="0.761" stop-color="#0d0d0d"/><stop offset="0.837" stop-color="#0b0b0b"/><stop offset="0.913" stop-color="#0a0a0a"/><stop offset="1.000" stop-color="#0a0a0a"/></linearGradient><linearGradient id="s39" gradientUnits="userSpaceOnUse" x1="199" y1="0" x2="463" y2="0"><stop offset="0.000" stop-color="#f7f7f7"/><stop offset="0.008" stop-color="#f7f7f7"/><stop offset="0.019" stop-color="#f7f7f7"/><stop offset="0.034" stop-color="#f7f7f7"/><stop offset="0.061" stop-color="#f7f7f7"/><stop offset="0.098" stop-color="#bdbdbd"/><stop offset="0.155" stop-color="#999999"/><stop offset="0.231" stop-color="#858585"/><stop offset="0.307" stop-color="#737373"/><stop offset="0.383" stop-color="#636363"/><stop offset="0.439" stop-color="#575757"/><stop offset="0.477" stop-color="#4b4b4b"/><stop offset="0.504" stop-color="#3e3e3e"/><stop offset="0.527" stop-color="#323232"/><stop offset="0.553" stop-color="#252525"/><stop offset="0.610" stop-color="#171717"/><stop offset="0.686" stop-color="#111111"/><stop offset="0.761" stop-color="#0d0d0d"/><stop offset="0.837" stop-color="#0b0b0b"/><stop offset="0.913" stop-color="#0a0a0a"/><stop offset="1.000" stop-color="#0a0a0a"/></linearGradient><linearGradient id="s40" gradientUnits="userSpaceOnUse" x1="199" y1="0" x2="463" y2="0"><stop offset="0.000" stop-color="#f9f9f9"/><stop offset="0.008" stop-color="#f9f9f9"/><stop offset="0.019" stop-color="#f9f9f9"/><stop offset="0.034" stop-color="#f9f9f9"/><stop offset="0.061" stop-color="#f9f9f9"/><stop offset="0.098" stop-color="#cecece"/><stop offset="0.155" stop-color="#a1a1a1"/><stop offset="0.231" stop-color="#898989"/><stop offset="0.307" stop-color="#767676"/><stop offset="0.383" stop-color="#676767"/><stop offset="0.439" stop-color="#5a5a5a"/><stop offset="0.477" stop-color="#4e4e4e"/><stop offset="0.504" stop-color="#414141"/><stop offset="0.527" stop-color="#333333"/><stop offset="0.553" stop-color="#252525"/><stop offset="0.610" stop-color="#171717"/><stop offset="0.686" stop-color="#111111"/><stop offset="0.761" stop-color="#0d0d0d"/><stop offset="0.837" stop-color="#0b0b0b"/><stop offset="0.913" stop-color="#0a0a0a"/><stop offset="1.000" stop-color="#0a0a0a"/></linearGradient><linearGradient id="s41" gradientUnits="userSpaceOnUse" x1="199" y1="0" x2="463" y2="0"><stop offset="0.000" stop-color="#fbfbfb"/><stop offset="0.008" stop-color="#fbfbfb"/><stop offset="0.019" stop-color="#fbfbfb"/><stop offset="0.034" stop-color="#fbfbfb"/><stop offset="0.061" stop-color="#fbfbfb"/><stop offset="0.098" stop-color="#f2f2f2"/><stop offset="0.155" stop-color="#a9a9a9"/><stop offset="0.231" stop-color="#8d8d8d"/><stop offset="0.307" stop-color="#7a7a7a"/><stop offset="0.383" stop-color="#6b6b6b"/><stop offset="0.439" stop-color="#5e5e5e"/><stop offset="0.477" stop-color="#515151"/><stop offset="0.504" stop-color="#444444"/><stop offset="0.527" stop-color="#353535"/><stop offset="0.553" stop-color="#262626"/><stop offset="0.610" stop-color="#171717"/><stop offset="0.686" stop-color="#111111"/><stop offset="0.761" stop-color="#0d0d0d"/><stop offset="0.837" stop-color="#0b0b0b"/><stop offset="0.913" stop-color="#0a0a0a"/><stop offset="1.000" stop-color="#0a0a0a"/></linearGradient><linearGradient id="s42" gradientUnits="userSpaceOnUse" x1="199" y1="0" x2="463" y2="0"><stop offset="0.000" stop-color="#fcfcfc"/><stop offset="0.008" stop-color="#fcfcfc"/><stop offset="0.019" stop-color="#fcfcfc"/><stop offset="0.034" stop-color="#fcfcfc"/><stop offset="0.061" stop-color="#fcfcfc"/><stop offset="0.098" stop-color="#fcfcfc"/><stop offset="0.155" stop-color="#b2b2b2"/><stop offset="0.231" stop-color="#919191"/><stop offset="0.307" stop-color="#7e7e7e"/><stop offset="0.383" stop-color="#6f6f6f"/><stop offset="0.439" stop-color="#626262"/><stop offset="0.477" stop-color="#555555"/><stop offset="0.504" stop-color="#464646"/><stop offset="0.527" stop-color="#373737"/><stop offset="0.553" stop-color="#272727"/><stop offset="0.610" stop-color="#171717"/><stop offset="0.686" stop-color="#111111"/><stop offset="0.761" stop-color="#0d0d0d"/><stop offset="0.837" stop-color="#0b0b0b"/><stop offset="0.913" stop-color="#0a0a0a"/><stop offset="1.000" stop-color="#0a0a0a"/></linearGradient><linearGradient id="s43" gradientUnits="userSpaceOnUse" x1="199" y1="0" x2="463" y2="0"><stop offset="0.000" stop-color="#fefefe"/><stop offset="0.008" stop-color="#fefefe"/><stop offset="0.019" stop-color="#fefefe"/><stop offset="0.034" stop-color="#fefefe"/><stop offset="0.061" stop-color="#fefefe"/><stop offset="0.098" stop-color="#fefefe"/><stop offset="0.155" stop-color="#c3c3c3"/><stop offset="0.231" stop-color="#969696"/><stop offset="0.307" stop-color="#838383"/><stop offset="0.383" stop-color="#737373"/><stop offset="0.439" stop-color="#666666"/><stop offset="0.477" stop-color="#595959"/><stop offset="0.504" stop-color="#494949"/><stop offset="0.527" stop-color="#393939"/><stop offset="0.553" stop-color="#272727"/><stop offset="0.610" stop-color="#171717"/><stop offset="0.686" stop-color="#111111"/><stop offset="0.761" stop-color="#0d0d0d"/><stop offset="0.837" stop-color="#0b0b0b"/><stop offset="0.913" stop-color="#0b0b0b"/><stop offset="1.000" stop-color="#0b0b0b"/></linearGradient><linearGradient id="s44" gradientUnits="userSpaceOnUse" x1="199" y1="0" x2="463" y2="0"><stop offset="0.000" stop-color="#ffffff"/><stop offset="0.008" stop-color="#ffffff"/><stop offset="0.019" stop-color="#ffffff"/><stop offset="0.034" stop-color="#ffffff"/><stop offset="0.061" stop-color="#ffffff"/><stop offset="0.098" stop-color="#ffffff"/><stop offset="0.155" stop-color="#d9d9d9"/><stop offset="0.231" stop-color="#9e9e9e"/><stop offset="0.307" stop-color="#878787"/><stop offset="0.383" stop-color="#787878"/><stop offset="0.439" stop-color="#6b6b6b"/><stop offset="0.477" stop-color="#5c5c5c"/><stop offset="0.504" stop-color="#4c4c4c"/><stop offset="0.527" stop-color="#3a3a3a"/><stop offset="0.553" stop-color="#282828"/><stop offset="0.610" stop-color="#171717"/><stop offset="0.686" stop-color="#111111"/><stop offset="0.761" stop-color="#0d0d0d"/><stop offset="0.837" stop-color="#0b0b0b"/><stop offset="0.913" stop-color="#0b0b0b"/><stop offset="1.000" stop-color="#0b0b0b"/></linearGradient><linearGradient id="s45" gradientUnits="userSpaceOnUse" x1="199" y1="0" x2="463" y2="0"><stop offset="0.000" stop-color="#ffffff"/><stop offset="0.008" stop-color="#ffffff"/><stop offset="0.019" stop-color="#ffffff"/><stop offset="0.034" stop-color="#ffffff"/><stop offset="0.061" stop-color="#ffffff"/><stop offset="0.098" stop-color="#ffffff"/><stop offset="0.155" stop-color="#ffffff"/><stop offset="0.231" stop-color="#a9a9a9"/><stop offset="0.307" stop-color="#8c8c8c"/><stop offset="0.383" stop-color="#7c7c7c"/><stop offset="0.439" stop-color="#6f6f6f"/><stop offset="0.477" stop-color="#606060"/><stop offset="0.504" stop-color="#4f4f4f"/><stop offset="0.527" stop-color="#3c3c3c"/><stop offset="0.553" stop-color="#292929"/><stop offset="0.610" stop-color="#171717"/><stop offset="0.686" stop-color="#111111"/><stop offset="0.761" stop-color="#0d0d0d"/><stop offset="0.837" stop-color="#0c0c0c"/><stop offset="0.913" stop-color="#0c0c0c"/><stop offset="1.000" stop-color="#0c0c0c"/></linearGradient><linearGradient id="s46" gradientUnits="userSpaceOnUse" x1="199" y1="0" x2="463" y2="0"><stop offset="0.000" stop-color="#fefefe"/><stop offset="0.008" stop-color="#fefefe"/><stop offset="0.019" stop-color="#fefefe"/><stop offset="0.034" stop-color="#fefefe"/><stop offset="0.061" stop-color="#fefefe"/><stop offset="0.098" stop-color="#fefefe"/><stop offset="0.155" stop-color="#fefefe"/><stop offset="0.231" stop-color="#b6b6b6"/><stop offset="0.307" stop-color="#919191"/><stop offset="0.383" stop-color="#818181"/><stop offset="0.439" stop-color="#747474"/><stop offset="0.477" stop-color="#646464"/><stop offset="0.504" stop-color="#525252"/><stop offset="0.527" stop-color="#3e3e3e"/><stop offset="0.553" stop-color="#2a2a2a"/><stop offset="0.610" stop-color="#171717"/><stop offset="0.686" stop-color="#111111"/><stop offset="0.761" stop-color="#0d0d0d"/><stop offset="0.837" stop-color="#0c0c0c"/><stop offset="0.913" stop-color="#0c0c0c"/><stop offset="1.000" stop-color="#0c0c0c"/></linearGradient><linearGradient id="s47" gradientUnits="userSpaceOnUse" x1="199" y1="0" x2="463" y2="0"><stop offset="0.000" stop-color="#fdfdfd"/><stop offset="0.008" stop-color="#fdfdfd"/><stop offset="0.019" stop-color="#fdfdfd"/><stop offset="0.034" stop-color="#fdfdfd"/><stop offset="0.061" stop-color="#fdfdfd"/><stop offset="0.098" stop-color="#fdfdfd"/><stop offset="0.155" stop-color="#fdfdfd"/><stop offset="0.231" stop-color="#cfcfcf"/><stop offset="0.307" stop-color="#9d9d9d"/><stop offset="0.383" stop-color="#868686"/><stop offset="0.439" stop-color="#787878"/><stop offset="0.477" stop-color="#696969"/><stop offset="0.504" stop-color="#555555"/><stop offset="0.527" stop-color="#404040"/><stop offset="0.553" stop-color="#2b2b2b"/><stop offset="0.610" stop-color="#171717"/><stop offset="0.686" stop-color="#111111"/><stop offset="0.761" stop-color="#0d0d0d"/><stop offset="0.837" stop-color="#0d0d0d"/><stop offset="0.913" stop-color="#0d0d0d"/><stop offset="1.000" stop-color="#0d0d0d"/></linearGradient><linearGradient id="s48" gradientUnits="userSpaceOnUse" x1="199" y1="0" x2="463" y2="0"><stop offset="0.000" stop-color="#fbfbfb"/><stop offset="0.008" stop-color="#fbfbfb"/><stop offset="0.019" stop-color="#fbfbfb"/><stop offset="0.034" stop-color="#fbfbfb"/><stop offset="0.061" stop-color="#fbfbfb"/><stop offset="0.098" stop-color="#fbfbfb"/><stop offset="0.155" stop-color="#fbfbfb"/><stop offset="0.231" stop-color="#fbfbfb"/><stop offset="0.307" stop-color="#a9a9a9"/><stop offset="0.383" stop-color="#8e8e8e"/><stop offset="0.439" stop-color="#7d7d7d"/><stop offset="0.477" stop-color="#6d6d6d"/><stop offset="0.504" stop-color="#595959"/><stop offset="0.527" stop-color="#424242"/><stop offset="0.553" stop-color="#2c2c2c"/><stop offset="0.610" stop-color="#171717"/><stop offset="0.686" stop-color="#111111"/><stop offset="0.761" stop-color="#0e0e0e"/><stop offset="0.837" stop-color="#0e0e0e"/><stop offset="0.913" stop-color="#0e0e0e"/><stop offset="1.000" stop-color="#0e0e0e"/></linearGradient><linearGradient id="s49" gradientUnits="userSpaceOnUse" x1="199" y1="0" x2="463" y2="0"><stop offset="0.000" stop-color="#f7f7f7"/><stop offset="0.008" stop-color="#f7f7f7"/><stop offset="0.019" stop-color="#f7f7f7"/><stop offset="0.034" stop-color="#f7f7f7"/><stop offset="0.061" stop-color="#f7f7f7"/><stop offset="0.098" stop-color="#f7f7f7"/><stop offset="0.155" stop-color="#f7f7f7"/><stop offset="0.231" stop-color="#f7f7f7"/><stop offset="0.307" stop-color="#c4c4c4"/><stop offset="0.383" stop-color="#999999"/><stop offset="0.439" stop-color="#858585"/><stop offset="0.477" stop-color="#727272"/><stop offset="0.504" stop-color="#5c5c5c"/><stop offset="0.527" stop-color="#454545"/><stop offset="0.553" stop-color="#2d2d2d"/><stop offset="0.610" stop-color="#181818"/><stop offset="0.686" stop-color="#111111"/><stop offset="0.761" stop-color="#101010"/><stop offset="0.837" stop-color="#101010"/><stop offset="0.913" stop-color="#101010"/><stop offset="1.000" stop-color="#101010"/></linearGradient><linearGradient id="s50" gradientUnits="userSpaceOnUse" x1="199" y1="0" x2="463" y2="0"><stop offset="0.000" stop-color="#f4f4f4"/><stop offset="0.008" stop-color="#f4f4f4"/><stop offset="0.019" stop-color="#f4f4f4"/><stop offset="0.034" stop-color="#f4f4f4"/><stop offset="0.061" stop-color="#f4f4f4"/><stop offset="0.098" stop-color="#f4f4f4"/><stop offset="0.155" stop-color="#f4f4f4"/><stop offset="0.231" stop-color="#f4f4f4"/><stop offset="0.307" stop-color="#f4f4f4"/><stop offset="0.383" stop-color="#aaaaaa"/><stop offset="0.439" stop-color="#8d8d8d"/><stop offset="0.477" stop-color="#777777"/><stop offset="0.504" stop-color="#606060"/><stop offset="0.527" stop-color="#474747"/><stop offset="0.553" stop-color="#2e2e2e"/><stop offset="0.610" stop-color="#181818"/><stop offset="0.686" stop-color="#131313"/><stop offset="0.761" stop-color="#131313"/><stop offset="0.837" stop-color="#131313"/><stop offset="0.913" stop-color="#131313"/><stop offset="1.000" stop-color="#131313"/></linearGradient><linearGradient id="s51" gradientUnits="userSpaceOnUse" x1="199" y1="0" x2="463" y2="0"><stop offset="0.000" stop-color="#d8d8d8"/><stop offset="0.008" stop-color="#d8d8d8"/><stop offset="0.019" stop-color="#d8d8d8"/><stop offset="0.034" stop-color="#d8d8d8"/><stop offset="0.061" stop-color="#d8d8d8"/><stop offset="0.098" stop-color="#d8d8d8"/><stop offset="0.155" stop-color="#d8d8d8"/><stop offset="0.231" stop-color="#d8d8d8"/><stop offset="0.307" stop-color="#d8d8d8"/><stop offset="0.383" stop-color="#d3d3d3"/><stop offset="0.439" stop-color="#9b9b9b"/><stop offset="0.477" stop-color="#7e7e7e"/><stop offset="0.504" stop-color="#636363"/><stop offset="0.527" stop-color="#494949"/><stop offset="0.553" stop-color="#2f2f2f"/><stop offset="0.610" stop-color="#191919"/><stop offset="0.686" stop-color="#191919"/><stop offset="0.761" stop-color="#191919"/><stop offset="0.837" stop-color="#191919"/><stop offset="0.913" stop-color="#191919"/><stop offset="1.000" stop-color="#191919"/></linearGradient><linearGradient id="s52" gradientUnits="userSpaceOnUse" x1="199" y1="0" x2="463" y2="0"><stop offset="0.000" stop-color="#767676"/><stop offset="0.008" stop-color="#767676"/><stop offset="0.019" stop-color="#767676"/><stop offset="0.034" stop-color="#767676"/><stop offset="0.061" stop-color="#767676"/><stop offset="0.098" stop-color="#767676"/><stop offset="0.155" stop-color="#767676"/><stop offset="0.231" stop-color="#767676"/><stop offset="0.307" stop-color="#767676"/><stop offset="0.383" stop-color="#767676"/><stop offset="0.439" stop-color="#767676"/><stop offset="0.477" stop-color="#767676"/><stop offset="0.504" stop-color="#717171"/><stop offset="0.527" stop-color="#717171"/><stop offset="0.553" stop-color="#717171"/><stop offset="0.610" stop-color="#717171"/><stop offset="0.686" stop-color="#717171"/><stop offset="0.761" stop-color="#717171"/><stop offset="0.837" stop-color="#717171"/><stop offset="0.913" stop-color="#717171"/><stop offset="1.000" stop-color="#717171"/></linearGradient><clipPath id="sclip"><path d="M180 33 H479 V298 H180 V105 H212.5 L219.7 93 V33 Z"/></clipPath><clipPath id="scirc"><circle cx="328.6" cy="165.0" r="129.0"/></clipPath><filter id="svb" color-interpolation-filters="sRGB" x="-2%" y="-5%" width="104%" height="110%"><feGaussianBlur stdDeviation="0.3 3.0"/></filter><filter id="sblur" color-interpolation-filters="sRGB"><feGaussianBlur stdDeviation="0.5"/></filter></defs><rect x="180" y="33" width="299" height="265" fill="#07070c"/><g clip-path="url(#sclip)"><g filter="url(#sblur)"><g clip-path="url(#scirc)"><g filter="url(#svb)"><rect x="199" y="33" width="264" height="5" fill="url(#s0)"/><rect x="199" y="38" width="264" height="5" fill="url(#s1)"/><rect x="199" y="43" width="264" height="5" fill="url(#s2)"/><rect x="199" y="48" width="264" height="5" fill="url(#s3)"/><rect x="199" y="53" width="264" height="5" fill="url(#s4)"/><rect x="199" y="58" width="264" height="5" fill="url(#s5)"/><rect x="199" y="63" width="264" height="5" fill="url(#s6)"/><rect x="199" y="68" width="264" height="5" fill="url(#s7)"/><rect x="199" y="73" width="264" height="5" fill="url(#s8)"/><rect x="199" y="78" width="264" height="5" fill="url(#s9)"/><rect x="199" y="83" width="264" height="5" fill="url(#s10)"/><rect x="199" y="88" width="264" height="5" fill="url(#s11)"/><rect x="199" y="93" width="264" height="5" fill="url(#s12)"/><rect x="199" y="98" width="264" height="5" fill="url(#s13)"/><rect x="199" y="103" width="264" height="5" fill="url(#s14)"/><rect x="199" y="108" width="264" height="5" fill="url(#s15)"/><rect x="199" y="113" width="264" height="5" fill="url(#s16)"/><rect x="199" y="118" width="264" height="5" fill="url(#s17)"/><rect x="199" y="123" width="264" height="5" fill="url(#s18)"/><rect x="199" y="128" width="264" height="5" fill="url(#s19)"/><rect x="199" y="133" width="264" height="5" fill="url(#s20)"/><rect x="199" y="138" width="264" height="5" fill="url(#s21)"/><rect x="199" y="143" width="264" height="5" fill="url(#s22)"/><rect x="199" y="148" width="264" height="5" fill="url(#s23)"/><rect x="199" y="153" width="264" height="5" fill="url(#s24)"/><rect x="199" y="158" width="264" height="5" fill="url(#s25)"/><rect x="199" y="163" width="264" height="5" fill="url(#s26)"/><rect x="199" y="168" width="264" height="5" fill="url(#s27)"/><rect x="199" y="173" width="264" height="5" fill="url(#s28)"/><rect x="199" y="178" width="264" height="5" fill="url(#s29)"/><rect x="199" y="183" width="264" height="5" fill="url(#s30)"/><rect x="199" y="188" width="264" height="5" fill="url(#s31)"/><rect x="199" y="193" width="264" height="5" fill="url(#s32)"/><rect x="199" y="198" width="264" height="5" fill="url(#s33)"/><rect x="199" y="203" width="264" height="5" fill="url(#s34)"/><rect x="199" y="208" width="264" height="5" fill="url(#s35)"/><rect x="199" y="213" width="264" height="5" fill="url(#s36)"/><rect x="199" y="218" width="264" height="5" fill="url(#s37)"/><rect x="199" y="223" width="264" height="5" fill="url(#s38)"/><rect x="199" y="228" width="264" height="5" fill="url(#s39)"/><rect x="199" y="233" width="264" height="5" fill="url(#s40)"/><rect x="199" y="238" width="264" height="5" fill="url(#s41)"/><rect x="199" y="243" width="264" height="5" fill="url(#s42)"/><rect x="199" y="248" width="264" height="5" fill="url(#s43)"/><rect x="199" y="253" width="264" height="5" fill="url(#s44)"/><rect x="199" y="258" width="264" height="5" fill="url(#s45)"/><rect x="199" y="263" width="264" height="5" fill="url(#s46)"/><rect x="199" y="268" width="264" height="5" fill="url(#s47)"/><rect x="199" y="273" width="264" height="5" fill="url(#s48)"/><rect x="199" y="278" width="264" height="5" fill="url(#s49)"/><rect x="199" y="283" width="264" height="5" fill="url(#s50)"/><rect x="199" y="288" width="264" height="5" fill="url(#s51)"/><rect x="199" y="293" width="264" height="5" fill="url(#s52)"/></g><path d="M328.6 36.8 A128.2 128.2 0 0 1 440 101" fill="none" stroke="#fff" stroke-opacity="0.14" stroke-width="1.2"/></g></g></g><g fill="none" stroke="#3c4478" stroke-width="1.2"><circle cx="457" cy="67" r="3.2"/><circle cx="443.5" cy="260" r="3.2"/></g><rect x="180" y="33" width="16" height="265" fill="#6f6f6f"/><rect x="463" y="33" width="16" height="265" fill="#6f6f6f"/></svg>
<svg class="a" style="left:481px;top:33px" width="878" height="694" viewBox="481 33 878 694"><defs><linearGradient id="r0" gradientUnits="userSpaceOnUse" x1="580.5" y1="0" x2="921.5" y2="0" spreadMethod="reflect"><stop offset="0.000" stop-color="#292827"/><stop offset="1.000" stop-color="#282727"/></linearGradient><linearGradient id="r1" gradientUnits="userSpaceOnUse" x1="580.5" y1="0" x2="921.5" y2="0" spreadMethod="reflect"><stop offset="0.000" stop-color="#c8c5c1"/><stop offset="0.895" stop-color="#c8c5c1"/><stop offset="0.901" stop-color="#c6c3bf"/><stop offset="0.909" stop-color="#c3c0bc"/><stop offset="0.927" stop-color="#bebbb7"/><stop offset="0.956" stop-color="#a8a6a2"/><stop offset="0.971" stop-color="#8a8885"/><stop offset="0.982" stop-color="#605f5d"/><stop offset="0.991" stop-color="#363534"/><stop offset="1.000" stop-color="#201f1f"/></linearGradient><linearGradient id="r2" gradientUnits="userSpaceOnUse" x1="580.5" y1="0" x2="921.5" y2="0" spreadMethod="reflect"><stop offset="0.000" stop-color="#cbc8c4"/><stop offset="0.788" stop-color="#cac7c3"/><stop offset="0.793" stop-color="#c6c4c0"/><stop offset="0.802" stop-color="#c1beba"/><stop offset="0.820" stop-color="#b6b4b0"/><stop offset="0.849" stop-color="#aaa7a4"/><stop offset="0.883" stop-color="#a09e9b"/><stop offset="0.912" stop-color="#999794"/><stop offset="0.938" stop-color="#908e8b"/><stop offset="0.956" stop-color="#7f7d7a"/><stop offset="0.971" stop-color="#5f5e5c"/><stop offset="0.982" stop-color="#3a3938"/><stop offset="0.991" stop-color="#1c1b1b"/><stop offset="1.000" stop-color="#0e0e0e"/></linearGradient><linearGradient id="r3" gradientUnits="userSpaceOnUse" x1="580.5" y1="0" x2="921.5" y2="0" spreadMethod="reflect"><stop offset="0.000" stop-color="#cfcbc7"/><stop offset="0.719" stop-color="#cdcac6"/><stop offset="0.725" stop-color="#c8c5c1"/><stop offset="0.734" stop-color="#c1beba"/><stop offset="0.752" stop-color="#b3b0ad"/><stop offset="0.781" stop-color="#a4a29e"/><stop offset="0.806" stop-color="#999693"/><stop offset="0.848" stop-color="#8f8d8a"/><stop offset="0.883" stop-color="#8a8885"/><stop offset="0.912" stop-color="#868481"/><stop offset="0.938" stop-color="#7d7b79"/><stop offset="0.956" stop-color="#6a6967"/><stop offset="0.971" stop-color="#4b4a49"/><stop offset="0.982" stop-color="#2a2928"/><stop offset="0.991" stop-color="#111111"/><stop offset="1.000" stop-color="#070707"/></linearGradient><linearGradient id="r4" gradientUnits="userSpaceOnUse" x1="580.5" y1="0" x2="921.5" y2="0" spreadMethod="reflect"><stop offset="0.000" stop-color="#d2cfca"/><stop offset="0.665" stop-color="#d0cdc9"/><stop offset="0.671" stop-color="#cac7c3"/><stop offset="0.680" stop-color="#c1beba"/><stop offset="0.698" stop-color="#b2b0ac"/><stop offset="0.727" stop-color="#a09e9a"/><stop offset="0.760" stop-color="#93918e"/><stop offset="0.806" stop-color="#888683"/><stop offset="0.848" stop-color="#807e7b"/><stop offset="0.883" stop-color="#7d7b78"/><stop offset="0.912" stop-color="#7a7876"/><stop offset="0.938" stop-color="#716f6d"/><stop offset="0.956" stop-color="#5d5b5a"/><stop offset="0.971" stop-color="#3f3e3c"/><stop offset="0.982" stop-color="#20201f"/><stop offset="0.991" stop-color="#0b0b0b"/><stop offset="1.000" stop-color="#040403"/></linearGradient><linearGradient id="r5" gradientUnits="userSpaceOnUse" x1="580.5" y1="0" x2="921.5" y2="0" spreadMethod="reflect"><stop offset="0.000" stop-color="#d5d1cd"/><stop offset="0.620" stop-color="#d3d0cc"/><stop offset="0.626" stop-color="#ccc9c5"/><stop offset="0.635" stop-color="#c2bfbb"/><stop offset="0.652" stop-color="#b2b0ac"/><stop offset="0.682" stop-color="#9d9b98"/><stop offset="0.707" stop-color="#94928f"/><stop offset="0.760" stop-color="#858380"/><stop offset="0.806" stop-color="#7e7c7a"/><stop offset="0.848" stop-color="#7a7875"/><stop offset="0.883" stop-color="#777573"/><stop offset="0.912" stop-color="#747270"/><stop offset="0.938" stop-color="#696765"/><stop offset="0.956" stop-color="#535250"/><stop offset="0.971" stop-color="#363534"/><stop offset="0.982" stop-color="#191919"/><stop offset="0.991" stop-color="#070707"/><stop offset="1.000" stop-color="#010101"/></linearGradient><linearGradient id="r6" gradientUnits="userSpaceOnUse" x1="580.5" y1="0" x2="921.5" y2="0" spreadMethod="reflect"><stop offset="0.000" stop-color="#d7d4d0"/><stop offset="0.580" stop-color="#d5d2ce"/><stop offset="0.586" stop-color="#cecbc7"/><stop offset="0.595" stop-color="#c3c0bc"/><stop offset="0.612" stop-color="#b2b0ac"/><stop offset="0.642" stop-color="#9d9b97"/><stop offset="0.648" stop-color="#9a9895"/><stop offset="0.707" stop-color="#868481"/><stop offset="0.760" stop-color="#7e7c7a"/><stop offset="0.806" stop-color="#787674"/><stop offset="0.848" stop-color="#747270"/><stop offset="0.883" stop-color="#716f6d"/><stop offset="0.912" stop-color="#6d6c6a"/><stop offset="0.938" stop-color="#61605e"/><stop offset="0.956" stop-color="#4b4a49"/><stop offset="0.971" stop-color="#2f2e2d"/><stop offset="0.982" stop-color="#151414"/><stop offset="0.991" stop-color="#050505"/><stop offset="1.000" stop-color="#000000"/></linearGradient><linearGradient id="r7" gradientUnits="userSpaceOnUse" x1="580.5" y1="0" x2="921.5" y2="0" spreadMethod="reflect"><stop offset="0.000" stop-color="#d9d6d2"/><stop offset="0.544" stop-color="#d7d4d0"/><stop offset="0.550" stop-color="#cfccc8"/><stop offset="0.559" stop-color="#c3c0bc"/><stop offset="0.576" stop-color="#b3b0ac"/><stop offset="0.606" stop-color="#9e9b98"/><stop offset="0.648" stop-color="#8c8a88"/><stop offset="0.707" stop-color="#817f7c"/><stop offset="0.760" stop-color="#787774"/><stop offset="0.806" stop-color="#73716f"/><stop offset="0.848" stop-color="#716f6d"/><stop offset="0.883" stop-color="#6f6d6b"/><stop offset="0.912" stop-color="#6b6967"/><stop offset="0.938" stop-color="#5d5c5a"/><stop offset="0.956" stop-color="#474544"/><stop offset="0.971" stop-color="#2b2a29"/><stop offset="0.982" stop-color="#131212"/><stop offset="0.991" stop-color="#040404"/><stop offset="1.000" stop-color="#000000"/></linearGradient><linearGradient id="r8" gradientUnits="userSpaceOnUse" x1="580.5" y1="0" x2="921.5" y2="0" spreadMethod="reflect"><stop offset="0.000" stop-color="#dbd8d4"/><stop offset="0.512" stop-color="#d9d6d2"/><stop offset="0.517" stop-color="#d1cdc9"/><stop offset="0.526" stop-color="#c4c1bd"/><stop offset="0.544" stop-color="#b2b0ac"/><stop offset="0.573" stop-color="#9e9c99"/><stop offset="0.648" stop-color="#868481"/><stop offset="0.707" stop-color="#7b7977"/><stop offset="0.760" stop-color="#757371"/><stop offset="0.806" stop-color="#71706d"/><stop offset="0.848" stop-color="#6f6d6b"/><stop offset="0.883" stop-color="#6d6b69"/><stop offset="0.912" stop-color="#686765"/><stop offset="0.938" stop-color="#595856"/><stop offset="0.956" stop-color="#424140"/><stop offset="0.971" stop-color="#282726"/><stop offset="0.982" stop-color="#111110"/><stop offset="0.991" stop-color="#040404"/><stop offset="1.000" stop-color="#000000"/></linearGradient><linearGradient id="r9" gradientUnits="userSpaceOnUse" x1="580.5" y1="0" x2="921.5" y2="0" spreadMethod="reflect"><stop offset="0.000" stop-color="#dddad6"/><stop offset="0.482" stop-color="#dbd8d3"/><stop offset="0.487" stop-color="#d2cfca"/><stop offset="0.496" stop-color="#c4c1be"/><stop offset="0.514" stop-color="#b2b0ac"/><stop offset="0.543" stop-color="#9f9c99"/><stop offset="0.575" stop-color="#908e8b"/><stop offset="0.648" stop-color="#807f7c"/><stop offset="0.707" stop-color="#787674"/><stop offset="0.760" stop-color="#73726f"/><stop offset="0.806" stop-color="#706e6c"/><stop offset="0.848" stop-color="#6d6c69"/><stop offset="0.883" stop-color="#6b6967"/><stop offset="0.912" stop-color="#666462"/><stop offset="0.938" stop-color="#555452"/><stop offset="0.956" stop-color="#3e3d3c"/><stop offset="0.971" stop-color="#252423"/><stop offset="0.982" stop-color="#100f0f"/><stop offset="0.991" stop-color="#040403"/><stop offset="1.000" stop-color="#000000"/></linearGradient><linearGradient id="r10" gradientUnits="userSpaceOnUse" x1="580.5" y1="0" x2="921.5" y2="0" spreadMethod="reflect"><stop offset="0.000" stop-color="#dfdcd7"/><stop offset="0.454" stop-color="#ddd9d5"/><stop offset="0.460" stop-color="#d3d0cc"/><stop offset="0.469" stop-color="#c5c2bf"/><stop offset="0.486" stop-color="#b2b0ac"/><stop offset="0.515" stop-color="#9f9d9a"/><stop offset="0.575" stop-color="#8b8986"/><stop offset="0.648" stop-color="#7c7b78"/><stop offset="0.707" stop-color="#767572"/><stop offset="0.760" stop-color="#72706e"/><stop offset="0.806" stop-color="#6e6d6a"/><stop offset="0.848" stop-color="#6c6a68"/><stop offset="0.883" stop-color="#696765"/><stop offset="0.912" stop-color="#63615f"/><stop offset="0.938" stop-color="#51504e"/><stop offset="0.956" stop-color="#3a3a38"/><stop offset="0.971" stop-color="#222221"/><stop offset="0.982" stop-color="#0e0e0e"/><stop offset="0.991" stop-color="#030303"/><stop offset="1.000" stop-color="#000000"/></linearGradient><linearGradient id="r11" gradientUnits="userSpaceOnUse" x1="580.5" y1="0" x2="921.5" y2="0" spreadMethod="reflect"><stop offset="0.000" stop-color="#e1ded9"/><stop offset="0.428" stop-color="#dedbd7"/><stop offset="0.434" stop-color="#d4d1cd"/><stop offset="0.443" stop-color="#c6c3c0"/><stop offset="0.460" stop-color="#b3b0ac"/><stop offset="0.490" stop-color="#9f9d9a"/><stop offset="0.501" stop-color="#999794"/><stop offset="0.575" stop-color="#868481"/><stop offset="0.648" stop-color="#7b7977"/><stop offset="0.707" stop-color="#757371"/><stop offset="0.760" stop-color="#706f6c"/><stop offset="0.806" stop-color="#6d6b69"/><stop offset="0.848" stop-color="#6a6866"/><stop offset="0.883" stop-color="#676563"/><stop offset="0.912" stop-color="#605f5d"/><stop offset="0.938" stop-color="#4e4c4b"/><stop offset="0.956" stop-color="#373635"/><stop offset="0.971" stop-color="#201f1f"/><stop offset="0.982" stop-color="#0d0d0d"/><stop offset="0.991" stop-color="#030303"/><stop offset="1.000" stop-color="#000000"/></linearGradient><linearGradient id="r12" gradientUnits="userSpaceOnUse" x1="580.5" y1="0" x2="921.5" y2="0" spreadMethod="reflect"><stop offset="0.000" stop-color="#e3dfdb"/><stop offset="0.404" stop-color="#e0ddd8"/><stop offset="0.410" stop-color="#d6d2ce"/><stop offset="0.418" stop-color="#c7c4c0"/><stop offset="0.436" stop-color="#b3b0ac"/><stop offset="0.465" stop-color="#a09d9a"/><stop offset="0.501" stop-color="#92908d"/><stop offset="0.575" stop-color="#82807e"/><stop offset="0.648" stop-color="#7a7875"/><stop offset="0.707" stop-color="#747270"/><stop offset="0.760" stop-color="#6f6d6b"/><stop offset="0.806" stop-color="#6b6967"/><stop offset="0.848" stop-color="#686765"/><stop offset="0.883" stop-color="#656461"/><stop offset="0.912" stop-color="#5d5c5a"/><stop offset="0.938" stop-color="#4a4947"/><stop offset="0.956" stop-color="#343332"/><stop offset="0.971" stop-color="#1e1d1c"/><stop offset="0.982" stop-color="#0c0c0c"/><stop offset="0.991" stop-color="#030303"/><stop offset="1.000" stop-color="#000000"/></linearGradient><linearGradient id="r13" gradientUnits="userSpaceOnUse" x1="580.5" y1="0" x2="921.5" y2="0" spreadMethod="reflect"><stop offset="0.000" stop-color="#e4e1dc"/><stop offset="0.381" stop-color="#e2deda"/><stop offset="0.387" stop-color="#d7d4cf"/><stop offset="0.396" stop-color="#c8c5c1"/><stop offset="0.413" stop-color="#b3b0ad"/><stop offset="0.442" stop-color="#a09e9b"/><stop offset="0.501" stop-color="#8e8c89"/><stop offset="0.575" stop-color="#817f7c"/><stop offset="0.648" stop-color="#787774"/><stop offset="0.707" stop-color="#72706e"/><stop offset="0.760" stop-color="#6d6c69"/><stop offset="0.806" stop-color="#696866"/><stop offset="0.848" stop-color="#676563"/><stop offset="0.883" stop-color="#636160"/><stop offset="0.912" stop-color="#5a5957"/><stop offset="0.938" stop-color="#474644"/><stop offset="0.956" stop-color="#31302f"/><stop offset="0.971" stop-color="#1c1b1b"/><stop offset="0.982" stop-color="#0b0b0b"/><stop offset="0.991" stop-color="#030303"/><stop offset="1.000" stop-color="#000000"/></linearGradient><linearGradient id="r14" gradientUnits="userSpaceOnUse" x1="580.5" y1="0" x2="921.5" y2="0" spreadMethod="reflect"><stop offset="0.000" stop-color="#e6e3de"/><stop offset="0.359" stop-color="#e3e0db"/><stop offset="0.365" stop-color="#d8d5d0"/><stop offset="0.374" stop-color="#c9c6c2"/><stop offset="0.392" stop-color="#b3b0ad"/><stop offset="0.421" stop-color="#a19e9b"/><stop offset="0.501" stop-color="#898785"/><stop offset="0.575" stop-color="#807e7b"/><stop offset="0.648" stop-color="#777573"/><stop offset="0.707" stop-color="#716f6d"/><stop offset="0.760" stop-color="#6c6a68"/><stop offset="0.806" stop-color="#686664"/><stop offset="0.848" stop-color="#656361"/><stop offset="0.883" stop-color="#615f5d"/><stop offset="0.912" stop-color="#585655"/><stop offset="0.938" stop-color="#434241"/><stop offset="0.956" stop-color="#2e2d2c"/><stop offset="0.971" stop-color="#1a1919"/><stop offset="0.982" stop-color="#0b0b0a"/><stop offset="0.991" stop-color="#020202"/><stop offset="1.000" stop-color="#000000"/></linearGradient><linearGradient id="r15" gradientUnits="userSpaceOnUse" x1="580.5" y1="0" x2="921.5" y2="0" spreadMethod="reflect"><stop offset="0.000" stop-color="#e8e4df"/><stop offset="0.339" stop-color="#e5e1dd"/><stop offset="0.345" stop-color="#d9d6d1"/><stop offset="0.354" stop-color="#cac7c3"/><stop offset="0.371" stop-color="#b3b1ad"/><stop offset="0.401" stop-color="#a19f9c"/><stop offset="0.413" stop-color="#9b9996"/><stop offset="0.501" stop-color="#888683"/><stop offset="0.575" stop-color="#7f7d7a"/><stop offset="0.648" stop-color="#767472"/><stop offset="0.707" stop-color="#6f6e6b"/><stop offset="0.760" stop-color="#6a6966"/><stop offset="0.806" stop-color="#666563"/><stop offset="0.848" stop-color="#636260"/><stop offset="0.883" stop-color="#5f5d5b"/><stop offset="0.912" stop-color="#555452"/><stop offset="0.938" stop-color="#403f3e"/><stop offset="0.956" stop-color="#2b2b2a"/><stop offset="0.971" stop-color="#181817"/><stop offset="0.982" stop-color="#0a0a0a"/><stop offset="0.991" stop-color="#020202"/><stop offset="1.000" stop-color="#000000"/></linearGradient><linearGradient id="r16" gradientUnits="userSpaceOnUse" x1="580.5" y1="0" x2="921.5" y2="0" spreadMethod="reflect"><stop offset="0.000" stop-color="#e9e6e1"/><stop offset="0.320" stop-color="#e6e3de"/><stop offset="0.326" stop-color="#dad7d2"/><stop offset="0.334" stop-color="#cbc8c4"/><stop offset="0.352" stop-color="#b4b1ae"/><stop offset="0.381" stop-color="#a29f9c"/><stop offset="0.413" stop-color="#979592"/><stop offset="0.501" stop-color="#878582"/><stop offset="0.575" stop-color="#7d7c79"/><stop offset="0.648" stop-color="#747370"/><stop offset="0.707" stop-color="#6e6c6a"/><stop offset="0.760" stop-color="#696765"/><stop offset="0.806" stop-color="#656361"/><stop offset="0.848" stop-color="#61605e"/><stop offset="0.883" stop-color="#5d5b59"/><stop offset="0.912" stop-color="#52514f"/><stop offset="0.938" stop-color="#3d3c3b"/><stop offset="0.956" stop-color="#292828"/><stop offset="0.971" stop-color="#171616"/><stop offset="0.982" stop-color="#090909"/><stop offset="0.991" stop-color="#020202"/><stop offset="1.000" stop-color="#000000"/></linearGradient><linearGradient id="r17" gradientUnits="userSpaceOnUse" x1="580.5" y1="0" x2="921.5" y2="0" spreadMethod="reflect"><stop offset="0.000" stop-color="#ebe7e2"/><stop offset="0.301" stop-color="#e7e4df"/><stop offset="0.307" stop-color="#dbd8d3"/><stop offset="0.316" stop-color="#ccc9c5"/><stop offset="0.334" stop-color="#b5b2ae"/><stop offset="0.363" stop-color="#a2a09c"/><stop offset="0.413" stop-color="#93918e"/><stop offset="0.501" stop-color="#868481"/><stop offset="0.575" stop-color="#7c7a78"/><stop offset="0.648" stop-color="#73716f"/><stop offset="0.707" stop-color="#6d6b69"/><stop offset="0.760" stop-color="#676664"/><stop offset="0.806" stop-color="#636260"/><stop offset="0.848" stop-color="#605e5c"/><stop offset="0.883" stop-color="#5a5957"/><stop offset="0.912" stop-color="#4f4e4c"/><stop offset="0.938" stop-color="#3a3938"/><stop offset="0.956" stop-color="#272625"/><stop offset="0.971" stop-color="#151514"/><stop offset="0.982" stop-color="#090908"/><stop offset="0.991" stop-color="#020202"/><stop offset="1.000" stop-color="#000000"/></linearGradient><linearGradient id="r18" gradientUnits="userSpaceOnUse" x1="580.5" y1="0" x2="921.5" y2="0" spreadMethod="reflect"><stop offset="0.000" stop-color="#ece8e4"/><stop offset="0.284" stop-color="#e9e5e1"/><stop offset="0.290" stop-color="#dcd9d4"/><stop offset="0.299" stop-color="#cdcac6"/><stop offset="0.316" stop-color="#b6b3af"/><stop offset="0.346" stop-color="#a3a09d"/><stop offset="0.413" stop-color="#8f8d8a"/><stop offset="0.501" stop-color="#858380"/><stop offset="0.575" stop-color="#7b7977"/><stop offset="0.648" stop-color="#72706e"/><stop offset="0.707" stop-color="#6b6a67"/><stop offset="0.760" stop-color="#666462"/><stop offset="0.806" stop-color="#62605e"/><stop offset="0.848" stop-color="#5e5c5a"/><stop offset="0.883" stop-color="#585755"/><stop offset="0.912" stop-color="#4c4b49"/><stop offset="0.938" stop-color="#373736"/><stop offset="0.956" stop-color="#252423"/><stop offset="0.971" stop-color="#141413"/><stop offset="0.982" stop-color="#080808"/><stop offset="0.991" stop-color="#020202"/><stop offset="1.000" stop-color="#000000"/></linearGradient><linearGradient id="r19" gradientUnits="userSpaceOnUse" x1="580.5" y1="0" x2="921.5" y2="0" spreadMethod="reflect"><stop offset="0.000" stop-color="#edeae5"/><stop offset="0.267" stop-color="#eae6e2"/><stop offset="0.273" stop-color="#dddad5"/><stop offset="0.282" stop-color="#cecbc7"/><stop offset="0.300" stop-color="#b7b4b0"/><stop offset="0.329" stop-color="#a3a19d"/><stop offset="0.413" stop-color="#8f8d8a"/><stop offset="0.501" stop-color="#84827f"/><stop offset="0.575" stop-color="#7a7876"/><stop offset="0.648" stop-color="#716f6d"/><stop offset="0.707" stop-color="#6a6866"/><stop offset="0.760" stop-color="#646361"/><stop offset="0.806" stop-color="#605f5d"/><stop offset="0.848" stop-color="#5c5a59"/><stop offset="0.883" stop-color="#555452"/><stop offset="0.912" stop-color="#494847"/><stop offset="0.938" stop-color="#353433"/><stop offset="0.956" stop-color="#232221"/><stop offset="0.971" stop-color="#131212"/><stop offset="0.982" stop-color="#080707"/><stop offset="0.991" stop-color="#020202"/><stop offset="1.000" stop-color="#000000"/></linearGradient><linearGradient id="r20" gradientUnits="userSpaceOnUse" x1="580.5" y1="0" x2="921.5" y2="0" spreadMethod="reflect"><stop offset="0.000" stop-color="#efebe6"/><stop offset="0.252" stop-color="#ebe8e3"/><stop offset="0.257" stop-color="#dedbd6"/><stop offset="0.266" stop-color="#cfccc7"/><stop offset="0.284" stop-color="#b7b5b1"/><stop offset="0.313" stop-color="#a4a19e"/><stop offset="0.326" stop-color="#a09e9b"/><stop offset="0.413" stop-color="#8e8c89"/><stop offset="0.501" stop-color="#83817e"/><stop offset="0.575" stop-color="#797775"/><stop offset="0.648" stop-color="#6f6e6b"/><stop offset="0.707" stop-color="#686765"/><stop offset="0.760" stop-color="#63615f"/><stop offset="0.806" stop-color="#5e5d5b"/><stop offset="0.848" stop-color="#5a5857"/><stop offset="0.883" stop-color="#535250"/><stop offset="0.912" stop-color="#474644"/><stop offset="0.938" stop-color="#323231"/><stop offset="0.956" stop-color="#212020"/><stop offset="0.971" stop-color="#121111"/><stop offset="0.982" stop-color="#070707"/><stop offset="0.991" stop-color="#020202"/><stop offset="1.000" stop-color="#000000"/></linearGradient><linearGradient id="r21" gradientUnits="userSpaceOnUse" x1="580.5" y1="0" x2="921.5" y2="0" spreadMethod="reflect"><stop offset="0.000" stop-color="#f0ece7"/><stop offset="0.236" stop-color="#ece9e4"/><stop offset="0.242" stop-color="#dfdcd7"/><stop offset="0.251" stop-color="#cfccc8"/><stop offset="0.269" stop-color="#b8b6b2"/><stop offset="0.298" stop-color="#a5a29f"/><stop offset="0.326" stop-color="#9d9a97"/><stop offset="0.413" stop-color="#8d8b88"/><stop offset="0.501" stop-color="#82807d"/><stop offset="0.575" stop-color="#787674"/><stop offset="0.648" stop-color="#6e6d6a"/><stop offset="0.707" stop-color="#676663"/><stop offset="0.760" stop-color="#61605e"/><stop offset="0.806" stop-color="#5c5b59"/><stop offset="0.848" stop-color="#585655"/><stop offset="0.883" stop-color="#514f4e"/><stop offset="0.912" stop-color="#444342"/><stop offset="0.938" stop-color="#302f2e"/><stop offset="0.956" stop-color="#1f1e1e"/><stop offset="0.971" stop-color="#111010"/><stop offset="0.982" stop-color="#070706"/><stop offset="0.991" stop-color="#010101"/><stop offset="1.000" stop-color="#000000"/></linearGradient><linearGradient id="r22" gradientUnits="userSpaceOnUse" x1="580.5" y1="0" x2="921.5" y2="0" spreadMethod="reflect"><stop offset="0.000" stop-color="#f1ede9"/><stop offset="0.222" stop-color="#eeeae5"/><stop offset="0.228" stop-color="#e0dcd8"/><stop offset="0.237" stop-color="#d0cdc9"/><stop offset="0.254" stop-color="#b9b6b3"/><stop offset="0.284" stop-color="#a6a3a0"/><stop offset="0.326" stop-color="#999794"/><stop offset="0.413" stop-color="#8d8b88"/><stop offset="0.501" stop-color="#817f7d"/><stop offset="0.575" stop-color="#777573"/><stop offset="0.648" stop-color="#6d6b69"/><stop offset="0.707" stop-color="#666462"/><stop offset="0.760" stop-color="#605f5d"/><stop offset="0.806" stop-color="#5b5958"/><stop offset="0.848" stop-color="#565553"/><stop offset="0.883" stop-color="#4e4d4c"/><stop offset="0.912" stop-color="#41403f"/><stop offset="0.938" stop-color="#2e2d2c"/><stop offset="0.956" stop-color="#1d1d1c"/><stop offset="0.971" stop-color="#100f0f"/><stop offset="0.982" stop-color="#060606"/><stop offset="0.991" stop-color="#010101"/><stop offset="1.000" stop-color="#000000"/></linearGradient><linearGradient id="r23" gradientUnits="userSpaceOnUse" x1="580.5" y1="0" x2="921.5" y2="0" spreadMethod="reflect"><stop offset="0.000" stop-color="#f2eeea"/><stop offset="0.208" stop-color="#efebe6"/><stop offset="0.214" stop-color="#e1ddd9"/><stop offset="0.223" stop-color="#d1ceca"/><stop offset="0.241" stop-color="#bab7b3"/><stop offset="0.270" stop-color="#a7a4a1"/><stop offset="0.326" stop-color="#979491"/><stop offset="0.413" stop-color="#8c8a87"/><stop offset="0.501" stop-color="#807e7c"/><stop offset="0.575" stop-color="#767472"/><stop offset="0.648" stop-color="#6c6a68"/><stop offset="0.707" stop-color="#646361"/><stop offset="0.760" stop-color="#5e5d5b"/><stop offset="0.806" stop-color="#595856"/><stop offset="0.848" stop-color="#545351"/><stop offset="0.883" stop-color="#4c4b49"/><stop offset="0.912" stop-color="#3f3e3d"/><stop offset="0.938" stop-color="#2c2b2a"/><stop offset="0.956" stop-color="#1c1b1b"/><stop offset="0.971" stop-color="#0f0f0e"/><stop offset="0.982" stop-color="#060606"/><stop offset="0.991" stop-color="#010101"/><stop offset="1.000" stop-color="#000000"/></linearGradient><linearGradient id="r24" gradientUnits="userSpaceOnUse" x1="580.5" y1="0" x2="921.5" y2="0" spreadMethod="reflect"><stop offset="0.000" stop-color="#f3f0eb"/><stop offset="0.195" stop-color="#f0ece7"/><stop offset="0.201" stop-color="#e1deda"/><stop offset="0.210" stop-color="#d2ceca"/><stop offset="0.227" stop-color="#bbb8b4"/><stop offset="0.257" stop-color="#a8a5a2"/><stop offset="0.326" stop-color="#969491"/><stop offset="0.413" stop-color="#8b8987"/><stop offset="0.501" stop-color="#7f7d7b"/><stop offset="0.575" stop-color="#757371"/><stop offset="0.648" stop-color="#6b6967"/><stop offset="0.707" stop-color="#636260"/><stop offset="0.760" stop-color="#5d5b5a"/><stop offset="0.806" stop-color="#575654"/><stop offset="0.848" stop-color="#52514f"/><stop offset="0.883" stop-color="#4a4947"/><stop offset="0.912" stop-color="#3d3c3a"/><stop offset="0.938" stop-color="#2a2928"/><stop offset="0.956" stop-color="#1a1a19"/><stop offset="0.971" stop-color="#0e0e0d"/><stop offset="0.982" stop-color="#060605"/><stop offset="0.991" stop-color="#010101"/><stop offset="1.000" stop-color="#000000"/></linearGradient><linearGradient id="r25" gradientUnits="userSpaceOnUse" x1="580.5" y1="0" x2="921.5" y2="0" spreadMethod="reflect"><stop offset="0.000" stop-color="#f4f1ec"/><stop offset="0.183" stop-color="#f1ede8"/><stop offset="0.188" stop-color="#e2dfda"/><stop offset="0.197" stop-color="#d2cfcb"/><stop offset="0.215" stop-color="#bbb9b5"/><stop offset="0.244" stop-color="#a8a6a2"/><stop offset="0.326" stop-color="#969390"/><stop offset="0.413" stop-color="#8b8986"/><stop offset="0.501" stop-color="#7e7c7a"/><stop offset="0.575" stop-color="#747270"/><stop offset="0.648" stop-color="#696866"/><stop offset="0.707" stop-color="#62605e"/><stop offset="0.760" stop-color="#5b5a58"/><stop offset="0.806" stop-color="#565453"/><stop offset="0.848" stop-color="#504f4d"/><stop offset="0.883" stop-color="#474645"/><stop offset="0.912" stop-color="#3a3938"/><stop offset="0.938" stop-color="#272726"/><stop offset="0.956" stop-color="#191818"/><stop offset="0.971" stop-color="#0d0d0d"/><stop offset="0.982" stop-color="#050505"/><stop offset="0.991" stop-color="#010101"/><stop offset="1.000" stop-color="#000000"/></linearGradient><linearGradient id="r26" gradientUnits="userSpaceOnUse" x1="580.5" y1="0" x2="921.5" y2="0" spreadMethod="reflect"><stop offset="0.000" stop-color="#f5f1ed"/><stop offset="0.171" stop-color="#f2eee9"/><stop offset="0.176" stop-color="#e3e0db"/><stop offset="0.185" stop-color="#d3d0cc"/><stop offset="0.203" stop-color="#bcb9b6"/><stop offset="0.232" stop-color="#a9a7a3"/><stop offset="0.326" stop-color="#959390"/><stop offset="0.413" stop-color="#8a8885"/><stop offset="0.501" stop-color="#7d7b79"/><stop offset="0.575" stop-color="#73716f"/><stop offset="0.648" stop-color="#686765"/><stop offset="0.707" stop-color="#615f5d"/><stop offset="0.760" stop-color="#5a5856"/><stop offset="0.806" stop-color="#545351"/><stop offset="0.848" stop-color="#4e4d4b"/><stop offset="0.883" stop-color="#454443"/><stop offset="0.912" stop-color="#383736"/><stop offset="0.938" stop-color="#252524"/><stop offset="0.956" stop-color="#171717"/><stop offset="0.971" stop-color="#0c0c0c"/><stop offset="0.982" stop-color="#050505"/><stop offset="0.991" stop-color="#010101"/><stop offset="1.000" stop-color="#000000"/></linearGradient><linearGradient id="r27" gradientUnits="userSpaceOnUse" x1="580.5" y1="0" x2="921.5" y2="0" spreadMethod="reflect"><stop offset="0.000" stop-color="#f6f2ed"/><stop offset="0.159" stop-color="#f2efea"/><stop offset="0.165" stop-color="#e4e0dc"/><stop offset="0.174" stop-color="#d4d0cc"/><stop offset="0.191" stop-color="#bdbab6"/><stop offset="0.221" stop-color="#aaa7a4"/><stop offset="0.238" stop-color="#a4a29f"/><stop offset="0.326" stop-color="#94928f"/><stop offset="0.413" stop-color="#8a8785"/><stop offset="0.501" stop-color="#7c7b78"/><stop offset="0.575" stop-color="#72706e"/><stop offset="0.648" stop-color="#676664"/><stop offset="0.707" stop-color="#5f5e5c"/><stop offset="0.760" stop-color="#585755"/><stop offset="0.806" stop-color="#52514f"/><stop offset="0.848" stop-color="#4c4b49"/><stop offset="0.883" stop-color="#434240"/><stop offset="0.912" stop-color="#353433"/><stop offset="0.938" stop-color="#242322"/><stop offset="0.956" stop-color="#161615"/><stop offset="0.971" stop-color="#0c0b0b"/><stop offset="0.982" stop-color="#050504"/><stop offset="0.991" stop-color="#010101"/><stop offset="1.000" stop-color="#000000"/></linearGradient><linearGradient id="r28" gradientUnits="userSpaceOnUse" x1="580.5" y1="0" x2="921.5" y2="0" spreadMethod="reflect"><stop offset="0.000" stop-color="#f7f3ee"/><stop offset="0.148" stop-color="#f3efeb"/><stop offset="0.154" stop-color="#e4e1dc"/><stop offset="0.163" stop-color="#d4d1cd"/><stop offset="0.180" stop-color="#bdbbb7"/><stop offset="0.210" stop-color="#aba8a5"/><stop offset="0.238" stop-color="#a29f9c"/><stop offset="0.326" stop-color="#94928f"/><stop offset="0.413" stop-color="#898784"/><stop offset="0.501" stop-color="#7c7a77"/><stop offset="0.575" stop-color="#716f6d"/><stop offset="0.648" stop-color="#666562"/><stop offset="0.707" stop-color="#5e5d5b"/><stop offset="0.760" stop-color="#575554"/><stop offset="0.806" stop-color="#504f4e"/><stop offset="0.848" stop-color="#4a4947"/><stop offset="0.883" stop-color="#403f3e"/><stop offset="0.912" stop-color="#333231"/><stop offset="0.938" stop-color="#222121"/><stop offset="0.956" stop-color="#151514"/><stop offset="0.971" stop-color="#0b0b0b"/><stop offset="0.982" stop-color="#040404"/><stop offset="0.991" stop-color="#010101"/><stop offset="1.000" stop-color="#000000"/></linearGradient><linearGradient id="r29" gradientUnits="userSpaceOnUse" x1="580.5" y1="0" x2="921.5" y2="0" spreadMethod="reflect"><stop offset="0.000" stop-color="#f8f4ef"/><stop offset="0.138" stop-color="#f4f0eb"/><stop offset="0.144" stop-color="#e5e1dd"/><stop offset="0.152" stop-color="#d5d1cd"/><stop offset="0.170" stop-color="#bebbb7"/><stop offset="0.199" stop-color="#aba9a5"/><stop offset="0.238" stop-color="#9f9c99"/><stop offset="0.326" stop-color="#93918e"/><stop offset="0.413" stop-color="#888684"/><stop offset="0.501" stop-color="#7b7976"/><stop offset="0.575" stop-color="#706e6c"/><stop offset="0.648" stop-color="#656361"/><stop offset="0.707" stop-color="#5d5b59"/><stop offset="0.760" stop-color="#555452"/><stop offset="0.806" stop-color="#4f4e4c"/><stop offset="0.848" stop-color="#484745"/><stop offset="0.883" stop-color="#3e3d3c"/><stop offset="0.912" stop-color="#31302f"/><stop offset="0.938" stop-color="#20201f"/><stop offset="0.956" stop-color="#141413"/><stop offset="0.971" stop-color="#0a0a0a"/><stop offset="0.982" stop-color="#040404"/><stop offset="0.991" stop-color="#010101"/><stop offset="1.000" stop-color="#000000"/></linearGradient><linearGradient id="r30" gradientUnits="userSpaceOnUse" x1="580.5" y1="0" x2="921.5" y2="0" spreadMethod="reflect"><stop offset="0.000" stop-color="#f8f5f0"/><stop offset="0.128" stop-color="#f4f1ec"/><stop offset="0.134" stop-color="#e5e2dd"/><stop offset="0.142" stop-color="#d5d2ce"/><stop offset="0.160" stop-color="#bfbcb8"/><stop offset="0.189" stop-color="#acaaa6"/><stop offset="0.238" stop-color="#9e9c99"/><stop offset="0.326" stop-color="#93918e"/><stop offset="0.413" stop-color="#888683"/><stop offset="0.501" stop-color="#7a7876"/><stop offset="0.575" stop-color="#6f6d6b"/><stop offset="0.648" stop-color="#646260"/><stop offset="0.707" stop-color="#5b5a58"/><stop offset="0.760" stop-color="#545251"/><stop offset="0.806" stop-color="#4d4c4a"/><stop offset="0.848" stop-color="#454443"/><stop offset="0.883" stop-color="#3c3b39"/><stop offset="0.912" stop-color="#2e2e2d"/><stop offset="0.938" stop-color="#1e1e1d"/><stop offset="0.956" stop-color="#131212"/><stop offset="0.971" stop-color="#0a0a09"/><stop offset="0.982" stop-color="#040404"/><stop offset="0.991" stop-color="#010101"/><stop offset="1.000" stop-color="#000000"/></linearGradient><linearGradient id="r31" gradientUnits="userSpaceOnUse" x1="580.5" y1="0" x2="921.5" y2="0" spreadMethod="reflect"><stop offset="0.000" stop-color="#f9f5f0"/><stop offset="0.118" stop-color="#f5f1ed"/><stop offset="0.124" stop-color="#e6e2de"/><stop offset="0.133" stop-color="#d5d2ce"/><stop offset="0.151" stop-color="#bfbcb8"/><stop offset="0.180" stop-color="#adaaa7"/><stop offset="0.238" stop-color="#9e9b98"/><stop offset="0.326" stop-color="#92908d"/><stop offset="0.413" stop-color="#878582"/><stop offset="0.501" stop-color="#797775"/><stop offset="0.575" stop-color="#6e6c6a"/><stop offset="0.648" stop-color="#63615f"/><stop offset="0.707" stop-color="#5a5957"/><stop offset="0.760" stop-color="#52514f"/><stop offset="0.806" stop-color="#4b4a48"/><stop offset="0.848" stop-color="#434241"/><stop offset="0.883" stop-color="#393837"/><stop offset="0.912" stop-color="#2c2c2b"/><stop offset="0.938" stop-color="#1d1c1c"/><stop offset="0.956" stop-color="#121111"/><stop offset="0.971" stop-color="#090909"/><stop offset="0.982" stop-color="#040404"/><stop offset="0.991" stop-color="#010101"/><stop offset="1.000" stop-color="#000000"/></linearGradient><linearGradient id="r32" gradientUnits="userSpaceOnUse" x1="580.5" y1="0" x2="921.5" y2="0" spreadMethod="reflect"><stop offset="0.000" stop-color="#faf6f1"/><stop offset="0.109" stop-color="#f6f2ed"/><stop offset="0.115" stop-color="#e6e3de"/><stop offset="0.124" stop-color="#d6d3ce"/><stop offset="0.141" stop-color="#c0bdb9"/><stop offset="0.171" stop-color="#adaba7"/><stop offset="0.238" stop-color="#9d9b98"/><stop offset="0.326" stop-color="#92908d"/><stop offset="0.413" stop-color="#868482"/><stop offset="0.501" stop-color="#787774"/><stop offset="0.575" stop-color="#6d6b69"/><stop offset="0.648" stop-color="#62605e"/><stop offset="0.707" stop-color="#595756"/><stop offset="0.760" stop-color="#514f4e"/><stop offset="0.806" stop-color="#494847"/><stop offset="0.848" stop-color="#41403f"/><stop offset="0.883" stop-color="#373635"/><stop offset="0.912" stop-color="#2a2a29"/><stop offset="0.938" stop-color="#1b1b1a"/><stop offset="0.956" stop-color="#111010"/><stop offset="0.971" stop-color="#090908"/><stop offset="0.982" stop-color="#030303"/><stop offset="0.991" stop-color="#010101"/><stop offset="1.000" stop-color="#000000"/></linearGradient><linearGradient id="r33" gradientUnits="userSpaceOnUse" x1="580.5" y1="0" x2="921.5" y2="0" spreadMethod="reflect"><stop offset="0.000" stop-color="#faf7f2"/><stop offset="0.101" stop-color="#f6f3ee"/><stop offset="0.106" stop-color="#e7e3df"/><stop offset="0.115" stop-color="#d6d3cf"/><stop offset="0.133" stop-color="#c0bdb9"/><stop offset="0.162" stop-color="#aeaca8"/><stop offset="0.238" stop-color="#9d9b97"/><stop offset="0.326" stop-color="#928f8c"/><stop offset="0.413" stop-color="#868481"/><stop offset="0.501" stop-color="#787673"/><stop offset="0.575" stop-color="#6c6a68"/><stop offset="0.648" stop-color="#615f5d"/><stop offset="0.707" stop-color="#575654"/><stop offset="0.760" stop-color="#4f4e4c"/><stop offset="0.806" stop-color="#474645"/><stop offset="0.848" stop-color="#3f3e3d"/><stop offset="0.883" stop-color="#353433"/><stop offset="0.912" stop-color="#282827"/><stop offset="0.938" stop-color="#1a1a19"/><stop offset="0.956" stop-color="#10100f"/><stop offset="0.971" stop-color="#080808"/><stop offset="0.982" stop-color="#030303"/><stop offset="0.991" stop-color="#010101"/><stop offset="1.000" stop-color="#000000"/></linearGradient><linearGradient id="r34" gradientUnits="userSpaceOnUse" x1="580.5" y1="0" x2="921.5" y2="0" spreadMethod="reflect"><stop offset="0.000" stop-color="#fbf7f2"/><stop offset="0.092" stop-color="#f7f3ee"/><stop offset="0.098" stop-color="#e7e4df"/><stop offset="0.107" stop-color="#d7d3cf"/><stop offset="0.125" stop-color="#c0bdba"/><stop offset="0.154" stop-color="#afaca9"/><stop offset="0.238" stop-color="#9d9a97"/><stop offset="0.326" stop-color="#918f8c"/><stop offset="0.413" stop-color="#858381"/><stop offset="0.501" stop-color="#777573"/><stop offset="0.575" stop-color="#6b6a67"/><stop offset="0.648" stop-color="#605e5d"/><stop offset="0.707" stop-color="#565553"/><stop offset="0.760" stop-color="#4e4d4b"/><stop offset="0.806" stop-color="#464443"/><stop offset="0.848" stop-color="#3d3c3b"/><stop offset="0.883" stop-color="#333231"/><stop offset="0.912" stop-color="#262625"/><stop offset="0.938" stop-color="#191818"/><stop offset="0.956" stop-color="#0f0f0e"/><stop offset="0.971" stop-color="#080807"/><stop offset="0.982" stop-color="#030303"/><stop offset="0.991" stop-color="#010101"/><stop offset="1.000" stop-color="#000000"/></linearGradient><linearGradient id="r35" gradientUnits="userSpaceOnUse" x1="580.5" y1="0" x2="921.5" y2="0" spreadMethod="reflect"><stop offset="0.000" stop-color="#fbf8f3"/><stop offset="0.085" stop-color="#f7f4ef"/><stop offset="0.091" stop-color="#e8e4df"/><stop offset="0.099" stop-color="#d7d4cf"/><stop offset="0.117" stop-color="#c1beba"/><stop offset="0.146" stop-color="#afada9"/><stop offset="0.238" stop-color="#9c9a97"/><stop offset="0.326" stop-color="#918f8c"/><stop offset="0.413" stop-color="#858380"/><stop offset="0.501" stop-color="#767472"/><stop offset="0.575" stop-color="#6a6967"/><stop offset="0.648" stop-color="#5f5d5c"/><stop offset="0.707" stop-color="#555452"/><stop offset="0.760" stop-color="#4c4b4a"/><stop offset="0.806" stop-color="#444341"/><stop offset="0.848" stop-color="#3b3a39"/><stop offset="0.883" stop-color="#31302f"/><stop offset="0.912" stop-color="#252423"/><stop offset="0.938" stop-color="#171716"/><stop offset="0.956" stop-color="#0e0e0e"/><stop offset="0.971" stop-color="#070707"/><stop offset="0.982" stop-color="#030303"/><stop offset="0.991" stop-color="#010101"/><stop offset="1.000" stop-color="#000000"/></linearGradient><linearGradient id="r36" gradientUnits="userSpaceOnUse" x1="580.5" y1="0" x2="921.5" y2="0" spreadMethod="reflect"><stop offset="0.000" stop-color="#fcf8f3"/><stop offset="0.077" stop-color="#f8f4ef"/><stop offset="0.083" stop-color="#e8e4e0"/><stop offset="0.092" stop-color="#d7d4d0"/><stop offset="0.110" stop-color="#c1beba"/><stop offset="0.139" stop-color="#b0adaa"/><stop offset="0.150" stop-color="#aca9a6"/><stop offset="0.238" stop-color="#9c9996"/><stop offset="0.326" stop-color="#908e8b"/><stop offset="0.413" stop-color="#84827f"/><stop offset="0.501" stop-color="#767471"/><stop offset="0.575" stop-color="#6a6866"/><stop offset="0.648" stop-color="#5e5c5b"/><stop offset="0.707" stop-color="#545351"/><stop offset="0.760" stop-color="#4b4a48"/><stop offset="0.806" stop-color="#424140"/><stop offset="0.848" stop-color="#393837"/><stop offset="0.883" stop-color="#2f2e2d"/><stop offset="0.912" stop-color="#232222"/><stop offset="0.938" stop-color="#161615"/><stop offset="0.956" stop-color="#0d0d0d"/><stop offset="0.971" stop-color="#070707"/><stop offset="0.982" stop-color="#030303"/><stop offset="0.991" stop-color="#010101"/><stop offset="1.000" stop-color="#000000"/></linearGradient><linearGradient id="r37" gradientUnits="userSpaceOnUse" x1="580.5" y1="0" x2="921.5" y2="0" spreadMethod="reflect"><stop offset="0.000" stop-color="#fdf9f4"/><stop offset="0.070" stop-color="#f8f5f0"/><stop offset="0.076" stop-color="#e8e5e0"/><stop offset="0.085" stop-color="#d8d4d0"/><stop offset="0.103" stop-color="#c1bfbb"/><stop offset="0.132" stop-color="#b0adaa"/><stop offset="0.150" stop-color="#aaa7a4"/><stop offset="0.238" stop-color="#9b9996"/><stop offset="0.326" stop-color="#908e8b"/><stop offset="0.413" stop-color="#83817f"/><stop offset="0.501" stop-color="#757371"/><stop offset="0.575" stop-color="#696765"/><stop offset="0.648" stop-color="#5d5b5a"/><stop offset="0.707" stop-color="#535150"/><stop offset="0.760" stop-color="#494847"/><stop offset="0.806" stop-color="#403f3e"/><stop offset="0.848" stop-color="#373635"/><stop offset="0.883" stop-color="#2d2c2b"/><stop offset="0.912" stop-color="#212120"/><stop offset="0.938" stop-color="#151514"/><stop offset="0.956" stop-color="#0d0c0c"/><stop offset="0.971" stop-color="#060606"/><stop offset="0.982" stop-color="#030302"/><stop offset="0.991" stop-color="#010101"/><stop offset="1.000" stop-color="#000000"/></linearGradient><linearGradient id="r38" gradientUnits="userSpaceOnUse" x1="580.5" y1="0" x2="921.5" y2="0" spreadMethod="reflect"><stop offset="0.000" stop-color="#fdf9f4"/><stop offset="0.064" stop-color="#f9f5f0"/><stop offset="0.070" stop-color="#e9e5e1"/><stop offset="0.078" stop-color="#d8d5d0"/><stop offset="0.096" stop-color="#c2bfbb"/><stop offset="0.125" stop-color="#b0aeaa"/><stop offset="0.150" stop-color="#a8a6a2"/><stop offset="0.238" stop-color="#9b9996"/><stop offset="0.326" stop-color="#908d8b"/><stop offset="0.413" stop-color="#83817e"/><stop offset="0.501" stop-color="#747370"/><stop offset="0.575" stop-color="#686765"/><stop offset="0.648" stop-color="#5c5b59"/><stop offset="0.707" stop-color="#52504f"/><stop offset="0.760" stop-color="#484745"/><stop offset="0.806" stop-color="#3f3e3c"/><stop offset="0.848" stop-color="#353534"/><stop offset="0.883" stop-color="#2b2b2a"/><stop offset="0.912" stop-color="#201f1f"/><stop offset="0.938" stop-color="#141413"/><stop offset="0.956" stop-color="#0c0c0c"/><stop offset="0.971" stop-color="#060606"/><stop offset="0.982" stop-color="#020202"/><stop offset="0.991" stop-color="#010101"/><stop offset="1.000" stop-color="#000000"/></linearGradient><linearGradient id="r39" gradientUnits="userSpaceOnUse" x1="580.5" y1="0" x2="921.5" y2="0" spreadMethod="reflect"><stop offset="0.000" stop-color="#fefaf5"/><stop offset="0.057" stop-color="#f9f6f1"/><stop offset="0.063" stop-color="#e9e5e1"/><stop offset="0.072" stop-color="#d8d5d1"/><stop offset="0.090" stop-color="#c2bfbb"/><stop offset="0.119" stop-color="#b1aeab"/><stop offset="0.150" stop-color="#a7a4a1"/><stop offset="0.238" stop-color="#9b9995"/><stop offset="0.326" stop-color="#8f8d8a"/><stop offset="0.413" stop-color="#82807e"/><stop offset="0.501" stop-color="#747270"/><stop offset="0.575" stop-color="#686664"/><stop offset="0.648" stop-color="#5b5a58"/><stop offset="0.707" stop-color="#504f4e"/><stop offset="0.760" stop-color="#464544"/><stop offset="0.806" stop-color="#3d3c3b"/><stop offset="0.848" stop-color="#343332"/><stop offset="0.883" stop-color="#292928"/><stop offset="0.912" stop-color="#1e1e1d"/><stop offset="0.938" stop-color="#131312"/><stop offset="0.956" stop-color="#0b0b0b"/><stop offset="0.971" stop-color="#060606"/><stop offset="0.982" stop-color="#020202"/><stop offset="0.991" stop-color="#000000"/><stop offset="1.000" stop-color="#000000"/></linearGradient><linearGradient id="r40" gradientUnits="userSpaceOnUse" x1="580.5" y1="0" x2="921.5" y2="0" spreadMethod="reflect"><stop offset="0.000" stop-color="#fefaf5"/><stop offset="0.052" stop-color="#faf6f1"/><stop offset="0.057" stop-color="#e9e6e1"/><stop offset="0.066" stop-color="#d8d5d1"/><stop offset="0.084" stop-color="#c2bfbc"/><stop offset="0.113" stop-color="#b1afab"/><stop offset="0.150" stop-color="#a6a4a0"/><stop offset="0.238" stop-color="#9b9895"/><stop offset="0.326" stop-color="#8f8d8a"/><stop offset="0.413" stop-color="#82807d"/><stop offset="0.501" stop-color="#73716f"/><stop offset="0.575" stop-color="#676563"/><stop offset="0.648" stop-color="#5a5957"/><stop offset="0.707" stop-color="#4f4e4d"/><stop offset="0.760" stop-color="#454443"/><stop offset="0.806" stop-color="#3b3b39"/><stop offset="0.848" stop-color="#323130"/><stop offset="0.883" stop-color="#282726"/><stop offset="0.912" stop-color="#1d1d1c"/><stop offset="0.938" stop-color="#121211"/><stop offset="0.956" stop-color="#0b0a0a"/><stop offset="0.971" stop-color="#050505"/><stop offset="0.982" stop-color="#020202"/><stop offset="0.991" stop-color="#000000"/><stop offset="1.000" stop-color="#000000"/></linearGradient><linearGradient id="r41" gradientUnits="userSpaceOnUse" x1="580.5" y1="0" x2="921.5" y2="0" spreadMethod="reflect"><stop offset="0.000" stop-color="#fefbf5"/><stop offset="0.046" stop-color="#faf6f1"/><stop offset="0.052" stop-color="#eae6e1"/><stop offset="0.061" stop-color="#d9d5d1"/><stop offset="0.078" stop-color="#c3c0bc"/><stop offset="0.108" stop-color="#b2afab"/><stop offset="0.150" stop-color="#a6a4a0"/><stop offset="0.238" stop-color="#9a9895"/><stop offset="0.326" stop-color="#8f8c8a"/><stop offset="0.413" stop-color="#81807d"/><stop offset="0.501" stop-color="#73716f"/><stop offset="0.575" stop-color="#666563"/><stop offset="0.648" stop-color="#595856"/><stop offset="0.707" stop-color="#4f4d4c"/><stop offset="0.760" stop-color="#444341"/><stop offset="0.806" stop-color="#3a3938"/><stop offset="0.848" stop-color="#30302f"/><stop offset="0.883" stop-color="#262625"/><stop offset="0.912" stop-color="#1c1b1b"/><stop offset="0.938" stop-color="#111110"/><stop offset="0.956" stop-color="#0a0a0a"/><stop offset="0.971" stop-color="#050505"/><stop offset="0.982" stop-color="#020202"/><stop offset="0.991" stop-color="#000000"/><stop offset="1.000" stop-color="#000000"/></linearGradient><linearGradient id="r42" gradientUnits="userSpaceOnUse" x1="580.5" y1="0" x2="921.5" y2="0" spreadMethod="reflect"><stop offset="0.000" stop-color="#fffbf6"/><stop offset="0.041" stop-color="#fbf7f2"/><stop offset="0.047" stop-color="#eae6e2"/><stop offset="0.056" stop-color="#d9d6d1"/><stop offset="0.073" stop-color="#c3c0bc"/><stop offset="0.102" stop-color="#b2afac"/><stop offset="0.150" stop-color="#a6a3a0"/><stop offset="0.238" stop-color="#9a9895"/><stop offset="0.326" stop-color="#8e8c89"/><stop offset="0.413" stop-color="#817f7d"/><stop offset="0.501" stop-color="#72706e"/><stop offset="0.575" stop-color="#666462"/><stop offset="0.648" stop-color="#585755"/><stop offset="0.707" stop-color="#4e4c4b"/><stop offset="0.760" stop-color="#424140"/><stop offset="0.806" stop-color="#383836"/><stop offset="0.848" stop-color="#2f2e2d"/><stop offset="0.883" stop-color="#252423"/><stop offset="0.912" stop-color="#1a1a19"/><stop offset="0.938" stop-color="#10100f"/><stop offset="0.956" stop-color="#090909"/><stop offset="0.971" stop-color="#050505"/><stop offset="0.982" stop-color="#020202"/><stop offset="0.991" stop-color="#000000"/><stop offset="1.000" stop-color="#000000"/></linearGradient><linearGradient id="r43" gradientUnits="userSpaceOnUse" x1="580.5" y1="0" x2="921.5" y2="0" spreadMethod="reflect"><stop offset="0.000" stop-color="#fffbf6"/><stop offset="0.036" stop-color="#fbf7f2"/><stop offset="0.042" stop-color="#eae7e2"/><stop offset="0.051" stop-color="#d9d6d2"/><stop offset="0.068" stop-color="#c3c0bc"/><stop offset="0.098" stop-color="#b2afac"/><stop offset="0.150" stop-color="#a6a3a0"/><stop offset="0.238" stop-color="#9a9794"/><stop offset="0.326" stop-color="#8e8c89"/><stop offset="0.413" stop-color="#817f7c"/><stop offset="0.501" stop-color="#72706e"/><stop offset="0.575" stop-color="#656462"/><stop offset="0.648" stop-color="#585655"/><stop offset="0.707" stop-color="#4c4b4a"/><stop offset="0.760" stop-color="#41403f"/><stop offset="0.806" stop-color="#373635"/><stop offset="0.848" stop-color="#2e2d2c"/><stop offset="0.883" stop-color="#232322"/><stop offset="0.912" stop-color="#191918"/><stop offset="0.938" stop-color="#0f0f0e"/><stop offset="0.956" stop-color="#090909"/><stop offset="0.971" stop-color="#040404"/><stop offset="0.982" stop-color="#020202"/><stop offset="0.991" stop-color="#000000"/><stop offset="1.000" stop-color="#000000"/></linearGradient><linearGradient id="r44" gradientUnits="userSpaceOnUse" x1="580.5" y1="0" x2="921.5" y2="0" spreadMethod="reflect"><stop offset="0.000" stop-color="#fffbf6"/><stop offset="0.032" stop-color="#fbf7f2"/><stop offset="0.037" stop-color="#eae7e2"/><stop offset="0.046" stop-color="#d9d6d2"/><stop offset="0.064" stop-color="#c3c0bd"/><stop offset="0.093" stop-color="#b2b0ac"/><stop offset="0.150" stop-color="#a5a3a0"/><stop offset="0.238" stop-color="#9a9794"/><stop offset="0.326" stop-color="#8e8c89"/><stop offset="0.413" stop-color="#807e7c"/><stop offset="0.501" stop-color="#716f6d"/><stop offset="0.575" stop-color="#656361"/><stop offset="0.648" stop-color="#575654"/><stop offset="0.707" stop-color="#4c4a49"/><stop offset="0.760" stop-color="#403f3e"/><stop offset="0.806" stop-color="#363534"/><stop offset="0.848" stop-color="#2c2b2b"/><stop offset="0.883" stop-color="#222121"/><stop offset="0.912" stop-color="#181717"/><stop offset="0.938" stop-color="#0e0e0e"/><stop offset="0.956" stop-color="#080808"/><stop offset="0.971" stop-color="#040404"/><stop offset="0.982" stop-color="#020202"/><stop offset="0.991" stop-color="#000000"/><stop offset="1.000" stop-color="#000000"/></linearGradient><linearGradient id="r45" gradientUnits="userSpaceOnUse" x1="580.5" y1="0" x2="921.5" y2="0" spreadMethod="reflect"><stop offset="0.000" stop-color="#fffbf6"/><stop offset="0.027" stop-color="#fcf8f3"/><stop offset="0.033" stop-color="#ebe7e2"/><stop offset="0.042" stop-color="#dad6d2"/><stop offset="0.060" stop-color="#c4c1bd"/><stop offset="0.089" stop-color="#b3b0ac"/><stop offset="0.150" stop-color="#a5a39f"/><stop offset="0.238" stop-color="#999794"/><stop offset="0.326" stop-color="#8d8b89"/><stop offset="0.413" stop-color="#807e7b"/><stop offset="0.501" stop-color="#716f6d"/><stop offset="0.575" stop-color="#646361"/><stop offset="0.648" stop-color="#565553"/><stop offset="0.707" stop-color="#4b4948"/><stop offset="0.760" stop-color="#3f3e3d"/><stop offset="0.806" stop-color="#353433"/><stop offset="0.848" stop-color="#2b2a29"/><stop offset="0.883" stop-color="#21201f"/><stop offset="0.912" stop-color="#171616"/><stop offset="0.938" stop-color="#0d0d0d"/><stop offset="0.956" stop-color="#080807"/><stop offset="0.971" stop-color="#040404"/><stop offset="0.982" stop-color="#010101"/><stop offset="0.991" stop-color="#000000"/><stop offset="1.000" stop-color="#000000"/></linearGradient><linearGradient id="r46" gradientUnits="userSpaceOnUse" x1="580.5" y1="0" x2="921.5" y2="0" spreadMethod="reflect"><stop offset="0.000" stop-color="#fffbf6"/><stop offset="0.024" stop-color="#fcf8f3"/><stop offset="0.029" stop-color="#ebe7e3"/><stop offset="0.038" stop-color="#dad7d2"/><stop offset="0.056" stop-color="#c4c1bd"/><stop offset="0.085" stop-color="#b3b0ad"/><stop offset="0.150" stop-color="#a5a39f"/><stop offset="0.238" stop-color="#999794"/><stop offset="0.326" stop-color="#8d8b88"/><stop offset="0.413" stop-color="#807e7b"/><stop offset="0.501" stop-color="#706f6c"/><stop offset="0.575" stop-color="#646260"/><stop offset="0.648" stop-color="#565453"/><stop offset="0.707" stop-color="#4a4947"/><stop offset="0.760" stop-color="#3e3d3c"/><stop offset="0.806" stop-color="#333332"/><stop offset="0.848" stop-color="#2a2928"/><stop offset="0.883" stop-color="#1f1f1e"/><stop offset="0.912" stop-color="#151515"/><stop offset="0.938" stop-color="#0d0c0c"/><stop offset="0.956" stop-color="#070707"/><stop offset="0.971" stop-color="#040403"/><stop offset="0.982" stop-color="#010101"/><stop offset="0.991" stop-color="#000000"/><stop offset="1.000" stop-color="#000000"/></linearGradient><linearGradient id="r47" gradientUnits="userSpaceOnUse" x1="580.5" y1="0" x2="921.5" y2="0" spreadMethod="reflect"><stop offset="0.000" stop-color="#fffbf6"/><stop offset="0.020" stop-color="#fcf8f3"/><stop offset="0.026" stop-color="#ebe7e3"/><stop offset="0.035" stop-color="#dad7d2"/><stop offset="0.052" stop-color="#c4c1bd"/><stop offset="0.082" stop-color="#b3b0ad"/><stop offset="0.150" stop-color="#a5a29f"/><stop offset="0.238" stop-color="#999794"/><stop offset="0.326" stop-color="#8d8b88"/><stop offset="0.413" stop-color="#7f7d7b"/><stop offset="0.501" stop-color="#706e6c"/><stop offset="0.575" stop-color="#636260"/><stop offset="0.648" stop-color="#555452"/><stop offset="0.707" stop-color="#494846"/><stop offset="0.760" stop-color="#3d3c3b"/><stop offset="0.806" stop-color="#323231"/><stop offset="0.848" stop-color="#282827"/><stop offset="0.883" stop-color="#1e1e1d"/><stop offset="0.912" stop-color="#141414"/><stop offset="0.938" stop-color="#0c0c0b"/><stop offset="0.956" stop-color="#070707"/><stop offset="0.971" stop-color="#030303"/><stop offset="0.982" stop-color="#010101"/><stop offset="0.991" stop-color="#000000"/><stop offset="1.000" stop-color="#000000"/></linearGradient><linearGradient id="r48" gradientUnits="userSpaceOnUse" x1="580.5" y1="0" x2="921.5" y2="0" spreadMethod="reflect"><stop offset="0.000" stop-color="#fffbf6"/><stop offset="0.017" stop-color="#fcf9f3"/><stop offset="0.023" stop-color="#ebe8e3"/><stop offset="0.032" stop-color="#dad7d2"/><stop offset="0.049" stop-color="#c4c1bd"/><stop offset="0.079" stop-color="#b3b1ad"/><stop offset="0.150" stop-color="#a5a29f"/><stop offset="0.238" stop-color="#999693"/><stop offset="0.326" stop-color="#8d8b88"/><stop offset="0.413" stop-color="#7f7d7b"/><stop offset="0.501" stop-color="#706e6c"/><stop offset="0.575" stop-color="#63615f"/><stop offset="0.648" stop-color="#555352"/><stop offset="0.707" stop-color="#484746"/><stop offset="0.760" stop-color="#3c3b3a"/><stop offset="0.806" stop-color="#323130"/><stop offset="0.848" stop-color="#272726"/><stop offset="0.883" stop-color="#1d1d1c"/><stop offset="0.912" stop-color="#131313"/><stop offset="0.938" stop-color="#0b0b0b"/><stop offset="0.956" stop-color="#060606"/><stop offset="0.971" stop-color="#030303"/><stop offset="0.982" stop-color="#010101"/><stop offset="0.991" stop-color="#000000"/><stop offset="1.000" stop-color="#000000"/></linearGradient><linearGradient id="r49" gradientUnits="userSpaceOnUse" x1="580.5" y1="0" x2="921.5" y2="0" spreadMethod="reflect"><stop offset="0.000" stop-color="#fffbf6"/><stop offset="0.014" stop-color="#fdf9f4"/><stop offset="0.020" stop-color="#ebe8e3"/><stop offset="0.029" stop-color="#dad7d3"/><stop offset="0.046" stop-color="#c4c1bd"/><stop offset="0.076" stop-color="#b4b1ad"/><stop offset="0.150" stop-color="#a5a29f"/><stop offset="0.238" stop-color="#999693"/><stop offset="0.326" stop-color="#8d8b88"/><stop offset="0.413" stop-color="#7f7d7a"/><stop offset="0.501" stop-color="#6f6e6b"/><stop offset="0.575" stop-color="#62615f"/><stop offset="0.648" stop-color="#545351"/><stop offset="0.707" stop-color="#484745"/><stop offset="0.760" stop-color="#3b3b39"/><stop offset="0.806" stop-color="#31302f"/><stop offset="0.848" stop-color="#262625"/><stop offset="0.883" stop-color="#1c1b1b"/><stop offset="0.912" stop-color="#121212"/><stop offset="0.938" stop-color="#0a0a0a"/><stop offset="0.956" stop-color="#060606"/><stop offset="0.971" stop-color="#030303"/><stop offset="0.982" stop-color="#010101"/><stop offset="0.991" stop-color="#000000"/><stop offset="1.000" stop-color="#000000"/></linearGradient><linearGradient id="r50" gradientUnits="userSpaceOnUse" x1="580.5" y1="0" x2="921.5" y2="0" spreadMethod="reflect"><stop offset="0.000" stop-color="#fffbf6"/><stop offset="0.012" stop-color="#fdf9f4"/><stop offset="0.018" stop-color="#ebe8e3"/><stop offset="0.026" stop-color="#dad7d3"/><stop offset="0.044" stop-color="#c4c2be"/><stop offset="0.073" stop-color="#b4b1ad"/><stop offset="0.150" stop-color="#a4a29f"/><stop offset="0.238" stop-color="#989693"/><stop offset="0.326" stop-color="#8d8a88"/><stop offset="0.413" stop-color="#7e7d7a"/><stop offset="0.501" stop-color="#6f6d6b"/><stop offset="0.575" stop-color="#62615f"/><stop offset="0.648" stop-color="#545251"/><stop offset="0.707" stop-color="#474645"/><stop offset="0.760" stop-color="#3b3a39"/><stop offset="0.806" stop-color="#302f2e"/><stop offset="0.848" stop-color="#252524"/><stop offset="0.883" stop-color="#1b1b1a"/><stop offset="0.912" stop-color="#121111"/><stop offset="0.938" stop-color="#0a0a09"/><stop offset="0.956" stop-color="#050505"/><stop offset="0.971" stop-color="#030303"/><stop offset="0.982" stop-color="#010101"/><stop offset="0.991" stop-color="#000000"/><stop offset="1.000" stop-color="#000000"/></linearGradient><linearGradient id="r51" gradientUnits="userSpaceOnUse" x1="580.5" y1="0" x2="921.5" y2="0" spreadMethod="reflect"><stop offset="0.000" stop-color="#fffbf6"/><stop offset="0.009" stop-color="#fdf9f4"/><stop offset="0.015" stop-color="#ece8e3"/><stop offset="0.024" stop-color="#dad7d3"/><stop offset="0.042" stop-color="#c5c2be"/><stop offset="0.071" stop-color="#b4b1ae"/><stop offset="0.150" stop-color="#a4a29f"/><stop offset="0.238" stop-color="#989693"/><stop offset="0.326" stop-color="#8c8a87"/><stop offset="0.413" stop-color="#7e7c7a"/><stop offset="0.501" stop-color="#6f6d6b"/><stop offset="0.575" stop-color="#62605e"/><stop offset="0.648" stop-color="#535250"/><stop offset="0.707" stop-color="#464544"/><stop offset="0.760" stop-color="#3a3938"/><stop offset="0.806" stop-color="#2f2f2e"/><stop offset="0.848" stop-color="#252423"/><stop offset="0.883" stop-color="#1a1a19"/><stop offset="0.912" stop-color="#111110"/><stop offset="0.938" stop-color="#090909"/><stop offset="0.956" stop-color="#050505"/><stop offset="0.971" stop-color="#020202"/><stop offset="0.982" stop-color="#010101"/><stop offset="0.991" stop-color="#000000"/><stop offset="1.000" stop-color="#000000"/></linearGradient><linearGradient id="r52" gradientUnits="userSpaceOnUse" x1="580.5" y1="0" x2="921.5" y2="0" spreadMethod="reflect"><stop offset="0.000" stop-color="#fffbf6"/><stop offset="0.008" stop-color="#fdf9f4"/><stop offset="0.013" stop-color="#ece8e3"/><stop offset="0.022" stop-color="#dbd7d3"/><stop offset="0.040" stop-color="#c5c2be"/><stop offset="0.069" stop-color="#b4b1ae"/><stop offset="0.076" stop-color="#b1afab"/><stop offset="0.150" stop-color="#a4a29e"/><stop offset="0.238" stop-color="#989693"/><stop offset="0.326" stop-color="#8c8a87"/><stop offset="0.413" stop-color="#7e7c7a"/><stop offset="0.501" stop-color="#6f6d6b"/><stop offset="0.575" stop-color="#62605e"/><stop offset="0.648" stop-color="#535250"/><stop offset="0.707" stop-color="#464544"/><stop offset="0.760" stop-color="#3a3938"/><stop offset="0.806" stop-color="#2f2e2d"/><stop offset="0.848" stop-color="#242323"/><stop offset="0.883" stop-color="#191918"/><stop offset="0.912" stop-color="#101010"/><stop offset="0.938" stop-color="#090908"/><stop offset="0.956" stop-color="#050505"/><stop offset="0.971" stop-color="#020202"/><stop offset="0.982" stop-color="#010101"/><stop offset="0.991" stop-color="#000000"/><stop offset="1.000" stop-color="#000000"/></linearGradient><linearGradient id="r53" gradientUnits="userSpaceOnUse" x1="580.5" y1="0" x2="921.5" y2="0" spreadMethod="reflect"><stop offset="0.000" stop-color="#fffbf6"/><stop offset="0.006" stop-color="#fdf9f4"/><stop offset="0.012" stop-color="#ece8e4"/><stop offset="0.021" stop-color="#dbd7d3"/><stop offset="0.038" stop-color="#c5c2be"/><stop offset="0.068" stop-color="#b4b1ae"/><stop offset="0.076" stop-color="#b1aeab"/><stop offset="0.150" stop-color="#a4a29e"/><stop offset="0.238" stop-color="#989693"/><stop offset="0.326" stop-color="#8c8a87"/><stop offset="0.413" stop-color="#7e7c7a"/><stop offset="0.501" stop-color="#6e6d6b"/><stop offset="0.575" stop-color="#61605e"/><stop offset="0.648" stop-color="#535250"/><stop offset="0.707" stop-color="#464543"/><stop offset="0.760" stop-color="#393837"/><stop offset="0.806" stop-color="#2e2d2d"/><stop offset="0.848" stop-color="#232322"/><stop offset="0.883" stop-color="#191818"/><stop offset="0.912" stop-color="#100f0f"/><stop offset="0.938" stop-color="#080808"/><stop offset="0.956" stop-color="#040404"/><stop offset="0.971" stop-color="#020202"/><stop offset="0.982" stop-color="#010101"/><stop offset="0.991" stop-color="#000000"/><stop offset="1.000" stop-color="#000000"/></linearGradient><linearGradient id="r54" gradientUnits="userSpaceOnUse" x1="580.5" y1="0" x2="921.5" y2="0" spreadMethod="reflect"><stop offset="0.000" stop-color="#fffbf6"/><stop offset="0.005" stop-color="#fdf9f4"/><stop offset="0.011" stop-color="#ece8e4"/><stop offset="0.019" stop-color="#dbd7d3"/><stop offset="0.037" stop-color="#c5c2be"/><stop offset="0.066" stop-color="#b4b1ae"/><stop offset="0.076" stop-color="#b1aeaa"/><stop offset="0.150" stop-color="#a4a29e"/><stop offset="0.238" stop-color="#989693"/><stop offset="0.326" stop-color="#8c8a87"/><stop offset="0.413" stop-color="#7e7c79"/><stop offset="0.501" stop-color="#6e6d6a"/><stop offset="0.575" stop-color="#61605e"/><stop offset="0.648" stop-color="#535150"/><stop offset="0.707" stop-color="#454443"/><stop offset="0.760" stop-color="#393837"/><stop offset="0.806" stop-color="#2e2d2c"/><stop offset="0.848" stop-color="#232222"/><stop offset="0.883" stop-color="#181817"/><stop offset="0.912" stop-color="#0f0f0f"/><stop offset="0.938" stop-color="#080808"/><stop offset="0.956" stop-color="#040404"/><stop offset="0.971" stop-color="#020202"/><stop offset="0.982" stop-color="#010101"/><stop offset="0.991" stop-color="#000000"/><stop offset="1.000" stop-color="#000000"/></linearGradient><linearGradient id="r55" gradientUnits="userSpaceOnUse" x1="580.5" y1="0" x2="921.5" y2="0" spreadMethod="reflect"><stop offset="0.000" stop-color="#fffbf6"/><stop offset="0.004" stop-color="#fdf9f4"/><stop offset="0.010" stop-color="#ece8e4"/><stop offset="0.019" stop-color="#dbd7d3"/><stop offset="0.036" stop-color="#c5c2be"/><stop offset="0.065" stop-color="#b4b1ae"/><stop offset="0.076" stop-color="#b0aeaa"/><stop offset="0.150" stop-color="#a4a29e"/><stop offset="0.238" stop-color="#989693"/><stop offset="0.326" stop-color="#8c8a87"/><stop offset="0.413" stop-color="#7e7c79"/><stop offset="0.501" stop-color="#6e6d6a"/><stop offset="0.575" stop-color="#61605e"/><stop offset="0.648" stop-color="#52514f"/><stop offset="0.707" stop-color="#454443"/><stop offset="0.760" stop-color="#383836"/><stop offset="0.806" stop-color="#2d2d2c"/><stop offset="0.848" stop-color="#222221"/><stop offset="0.883" stop-color="#181717"/><stop offset="0.912" stop-color="#0f0f0e"/><stop offset="0.938" stop-color="#080807"/><stop offset="0.956" stop-color="#040404"/><stop offset="0.971" stop-color="#020202"/><stop offset="0.982" stop-color="#010101"/><stop offset="0.991" stop-color="#000000"/><stop offset="1.000" stop-color="#000000"/></linearGradient><linearGradient id="r56" gradientUnits="userSpaceOnUse" x1="580.5" y1="0" x2="921.5" y2="0" spreadMethod="reflect"><stop offset="0.000" stop-color="#fffbf6"/><stop offset="0.003" stop-color="#fdfaf4"/><stop offset="0.009" stop-color="#ece8e4"/><stop offset="0.018" stop-color="#dbd7d3"/><stop offset="0.036" stop-color="#c5c2be"/><stop offset="0.065" stop-color="#b4b1ae"/><stop offset="0.076" stop-color="#b0adaa"/><stop offset="0.150" stop-color="#a4a29e"/><stop offset="0.238" stop-color="#989693"/><stop offset="0.326" stop-color="#8c8a87"/><stop offset="0.413" stop-color="#7e7c79"/><stop offset="0.501" stop-color="#6e6d6a"/><stop offset="0.575" stop-color="#61605e"/><stop offset="0.648" stop-color="#52514f"/><stop offset="0.707" stop-color="#454443"/><stop offset="0.760" stop-color="#383736"/><stop offset="0.806" stop-color="#2d2d2c"/><stop offset="0.848" stop-color="#222221"/><stop offset="0.883" stop-color="#171717"/><stop offset="0.912" stop-color="#0f0e0e"/><stop offset="0.938" stop-color="#070707"/><stop offset="0.956" stop-color="#040404"/><stop offset="0.971" stop-color="#020202"/><stop offset="0.982" stop-color="#010101"/><stop offset="0.991" stop-color="#000000"/><stop offset="1.000" stop-color="#000000"/></linearGradient><linearGradient id="r57" gradientUnits="userSpaceOnUse" x1="580.5" y1="0" x2="921.5" y2="0" spreadMethod="reflect"><stop offset="0.000" stop-color="#fffbf6"/><stop offset="0.003" stop-color="#fdfaf4"/><stop offset="0.009" stop-color="#ece8e4"/><stop offset="0.018" stop-color="#dbd7d3"/><stop offset="0.035" stop-color="#c5c2be"/><stop offset="0.065" stop-color="#b4b1ae"/><stop offset="0.076" stop-color="#b0adaa"/><stop offset="0.150" stop-color="#a4a29e"/><stop offset="0.238" stop-color="#989693"/><stop offset="0.326" stop-color="#8c8a87"/><stop offset="0.413" stop-color="#7e7c79"/><stop offset="0.501" stop-color="#6e6c6a"/><stop offset="0.575" stop-color="#61605e"/><stop offset="0.648" stop-color="#52514f"/><stop offset="0.707" stop-color="#454443"/><stop offset="0.760" stop-color="#383736"/><stop offset="0.806" stop-color="#2d2c2c"/><stop offset="0.848" stop-color="#222221"/><stop offset="0.883" stop-color="#171716"/><stop offset="0.912" stop-color="#0e0e0e"/><stop offset="0.938" stop-color="#070707"/><stop offset="0.956" stop-color="#040404"/><stop offset="0.971" stop-color="#020202"/><stop offset="0.982" stop-color="#010101"/><stop offset="0.991" stop-color="#000000"/><stop offset="1.000" stop-color="#000000"/></linearGradient><linearGradient id="r58" gradientUnits="userSpaceOnUse" x1="580.5" y1="0" x2="921.5" y2="0" spreadMethod="reflect"><stop offset="0.000" stop-color="#fffbf6"/><stop offset="0.003" stop-color="#fdfaf4"/><stop offset="0.009" stop-color="#ece8e4"/><stop offset="0.018" stop-color="#dbd7d3"/><stop offset="0.035" stop-color="#c5c2be"/><stop offset="0.065" stop-color="#b4b1ae"/><stop offset="0.076" stop-color="#b0adaa"/><stop offset="0.150" stop-color="#a4a29e"/><stop offset="0.238" stop-color="#989693"/><stop offset="0.326" stop-color="#8c8a87"/><stop offset="0.413" stop-color="#7e7c79"/><stop offset="0.501" stop-color="#6e6c6a"/><stop offset="0.575" stop-color="#61605e"/><stop offset="0.648" stop-color="#52514f"/><stop offset="0.707" stop-color="#454443"/><stop offset="0.760" stop-color="#383736"/><stop offset="0.806" stop-color="#2d2c2c"/><stop offset="0.848" stop-color="#222221"/><stop offset="0.883" stop-color="#171716"/><stop offset="0.912" stop-color="#0e0e0e"/><stop offset="0.938" stop-color="#070707"/><stop offset="0.956" stop-color="#040404"/><stop offset="0.971" stop-color="#020202"/><stop offset="0.982" stop-color="#010101"/><stop offset="0.991" stop-color="#000000"/><stop offset="1.000" stop-color="#000000"/></linearGradient><linearGradient id="r59" gradientUnits="userSpaceOnUse" x1="580.5" y1="0" x2="921.5" y2="0" spreadMethod="reflect"><stop offset="0.000" stop-color="#fffbf6"/><stop offset="0.003" stop-color="#fdfaf4"/><stop offset="0.009" stop-color="#ece8e4"/><stop offset="0.018" stop-color="#dbd7d3"/><stop offset="0.036" stop-color="#c5c2be"/><stop offset="0.065" stop-color="#b4b1ae"/><stop offset="0.076" stop-color="#b0adaa"/><stop offset="0.150" stop-color="#a4a29e"/><stop offset="0.238" stop-color="#989693"/><stop offset="0.326" stop-color="#8c8a87"/><stop offset="0.413" stop-color="#7e7c79"/><stop offset="0.501" stop-color="#6e6d6a"/><stop offset="0.575" stop-color="#61605e"/><stop offset="0.648" stop-color="#52514f"/><stop offset="0.707" stop-color="#454443"/><stop offset="0.760" stop-color="#383736"/><stop offset="0.806" stop-color="#2d2d2c"/><stop offset="0.848" stop-color="#222221"/><stop offset="0.883" stop-color="#171717"/><stop offset="0.912" stop-color="#0f0e0e"/><stop offset="0.938" stop-color="#070707"/><stop offset="0.956" stop-color="#040404"/><stop offset="0.971" stop-color="#020202"/><stop offset="0.982" stop-color="#010101"/><stop offset="0.991" stop-color="#000000"/><stop offset="1.000" stop-color="#000000"/></linearGradient><linearGradient id="r60" gradientUnits="userSpaceOnUse" x1="580.5" y1="0" x2="921.5" y2="0" spreadMethod="reflect"><stop offset="0.000" stop-color="#fffbf6"/><stop offset="0.004" stop-color="#fdf9f4"/><stop offset="0.010" stop-color="#ece8e4"/><stop offset="0.019" stop-color="#dbd7d3"/><stop offset="0.036" stop-color="#c5c2be"/><stop offset="0.065" stop-color="#b4b1ae"/><stop offset="0.076" stop-color="#b0aeaa"/><stop offset="0.150" stop-color="#a4a29e"/><stop offset="0.238" stop-color="#989693"/><stop offset="0.326" stop-color="#8c8a87"/><stop offset="0.413" stop-color="#7e7c79"/><stop offset="0.501" stop-color="#6e6d6a"/><stop offset="0.575" stop-color="#61605e"/><stop offset="0.648" stop-color="#52514f"/><stop offset="0.707" stop-color="#454443"/><stop offset="0.760" stop-color="#383836"/><stop offset="0.806" stop-color="#2d2d2c"/><stop offset="0.848" stop-color="#222221"/><stop offset="0.883" stop-color="#181717"/><stop offset="0.912" stop-color="#0f0f0e"/><stop offset="0.938" stop-color="#080807"/><stop offset="0.956" stop-color="#040404"/><stop offset="0.971" stop-color="#020202"/><stop offset="0.982" stop-color="#010101"/><stop offset="0.991" stop-color="#000000"/><stop offset="1.000" stop-color="#000000"/></linearGradient><linearGradient id="r61" gradientUnits="userSpaceOnUse" x1="580.5" y1="0" x2="921.5" y2="0" spreadMethod="reflect"><stop offset="0.000" stop-color="#fffbf6"/><stop offset="0.005" stop-color="#fdf9f4"/><stop offset="0.011" stop-color="#ece8e4"/><stop offset="0.019" stop-color="#dbd7d3"/><stop offset="0.037" stop-color="#c5c2be"/><stop offset="0.066" stop-color="#b4b1ae"/><stop offset="0.076" stop-color="#b1aeaa"/><stop offset="0.150" stop-color="#a4a29e"/><stop offset="0.238" stop-color="#989693"/><stop offset="0.326" stop-color="#8c8a87"/><stop offset="0.413" stop-color="#7e7c79"/><stop offset="0.501" stop-color="#6e6d6a"/><stop offset="0.575" stop-color="#61605e"/><stop offset="0.648" stop-color="#535150"/><stop offset="0.707" stop-color="#454443"/><stop offset="0.760" stop-color="#393837"/><stop offset="0.806" stop-color="#2e2d2c"/><stop offset="0.848" stop-color="#232222"/><stop offset="0.883" stop-color="#181817"/><stop offset="0.912" stop-color="#0f0f0f"/><stop offset="0.938" stop-color="#080808"/><stop offset="0.956" stop-color="#040404"/><stop offset="0.971" stop-color="#020202"/><stop offset="0.982" stop-color="#010101"/><stop offset="0.991" stop-color="#000000"/><stop offset="1.000" stop-color="#000000"/></linearGradient><linearGradient id="r62" gradientUnits="userSpaceOnUse" x1="580.5" y1="0" x2="921.5" y2="0" spreadMethod="reflect"><stop offset="0.000" stop-color="#fffbf6"/><stop offset="0.006" stop-color="#fdf9f4"/><stop offset="0.012" stop-color="#ece8e4"/><stop offset="0.021" stop-color="#dbd7d3"/><stop offset="0.038" stop-color="#c5c2be"/><stop offset="0.068" stop-color="#b4b1ae"/><stop offset="0.076" stop-color="#b1aeab"/><stop offset="0.150" stop-color="#a4a29e"/><stop offset="0.238" stop-color="#989693"/><stop offset="0.326" stop-color="#8c8a87"/><stop offset="0.413" stop-color="#7e7c7a"/><stop offset="0.501" stop-color="#6e6d6b"/><stop offset="0.575" stop-color="#61605e"/><stop offset="0.648" stop-color="#535250"/><stop offset="0.707" stop-color="#464543"/><stop offset="0.760" stop-color="#393837"/><stop offset="0.806" stop-color="#2e2d2d"/><stop offset="0.848" stop-color="#232322"/><stop offset="0.883" stop-color="#191818"/><stop offset="0.912" stop-color="#100f0f"/><stop offset="0.938" stop-color="#080808"/><stop offset="0.956" stop-color="#040404"/><stop offset="0.971" stop-color="#020202"/><stop offset="0.982" stop-color="#010101"/><stop offset="0.991" stop-color="#000000"/><stop offset="1.000" stop-color="#000000"/></linearGradient><linearGradient id="r63" gradientUnits="userSpaceOnUse" x1="580.5" y1="0" x2="921.5" y2="0" spreadMethod="reflect"><stop offset="0.000" stop-color="#fffbf6"/><stop offset="0.008" stop-color="#fdf9f4"/><stop offset="0.013" stop-color="#ece8e3"/><stop offset="0.022" stop-color="#dbd7d3"/><stop offset="0.040" stop-color="#c5c2be"/><stop offset="0.069" stop-color="#b4b1ae"/><stop offset="0.076" stop-color="#b1afab"/><stop offset="0.150" stop-color="#a4a29e"/><stop offset="0.238" stop-color="#989693"/><stop offset="0.326" stop-color="#8c8a87"/><stop offset="0.413" stop-color="#7e7c7a"/><stop offset="0.501" stop-color="#6f6d6b"/><stop offset="0.575" stop-color="#62605e"/><stop offset="0.648" stop-color="#535250"/><stop offset="0.707" stop-color="#464544"/><stop offset="0.760" stop-color="#3a3938"/><stop offset="0.806" stop-color="#2f2e2d"/><stop offset="0.848" stop-color="#242323"/><stop offset="0.883" stop-color="#191918"/><stop offset="0.912" stop-color="#101010"/><stop offset="0.938" stop-color="#090908"/><stop offset="0.956" stop-color="#050505"/><stop offset="0.971" stop-color="#020202"/><stop offset="0.982" stop-color="#010101"/><stop offset="0.991" stop-color="#000000"/><stop offset="1.000" stop-color="#000000"/></linearGradient><linearGradient id="r64" gradientUnits="userSpaceOnUse" x1="580.5" y1="0" x2="921.5" y2="0" spreadMethod="reflect"><stop offset="0.000" stop-color="#fffbf6"/><stop offset="0.009" stop-color="#fdf9f4"/><stop offset="0.015" stop-color="#ece8e3"/><stop offset="0.024" stop-color="#dad7d3"/><stop offset="0.042" stop-color="#c5c2be"/><stop offset="0.071" stop-color="#b4b1ae"/><stop offset="0.150" stop-color="#a4a29f"/><stop offset="0.238" stop-color="#989693"/><stop offset="0.326" stop-color="#8c8a87"/><stop offset="0.413" stop-color="#7e7c7a"/><stop offset="0.501" stop-color="#6f6d6b"/><stop offset="0.575" stop-color="#62605e"/><stop offset="0.648" stop-color="#535250"/><stop offset="0.707" stop-color="#464544"/><stop offset="0.760" stop-color="#3a3938"/><stop offset="0.806" stop-color="#2f2f2e"/><stop offset="0.848" stop-color="#252423"/><stop offset="0.883" stop-color="#1a1a19"/><stop offset="0.912" stop-color="#111110"/><stop offset="0.938" stop-color="#090909"/><stop offset="0.956" stop-color="#050505"/><stop offset="0.971" stop-color="#020202"/><stop offset="0.982" stop-color="#010101"/><stop offset="0.991" stop-color="#000000"/><stop offset="1.000" stop-color="#000000"/></linearGradient><linearGradient id="r65" gradientUnits="userSpaceOnUse" x1="580.5" y1="0" x2="921.5" y2="0" spreadMethod="reflect"><stop offset="0.000" stop-color="#fffbf6"/><stop offset="0.012" stop-color="#fdf9f4"/><stop offset="0.018" stop-color="#ebe8e3"/><stop offset="0.026" stop-color="#dad7d3"/><stop offset="0.044" stop-color="#c4c2be"/><stop offset="0.073" stop-color="#b4b1ad"/><stop offset="0.150" stop-color="#a4a29f"/><stop offset="0.238" stop-color="#989693"/><stop offset="0.326" stop-color="#8d8a88"/><stop offset="0.413" stop-color="#7e7d7a"/><stop offset="0.501" stop-color="#6f6d6b"/><stop offset="0.575" stop-color="#62615f"/><stop offset="0.648" stop-color="#545251"/><stop offset="0.707" stop-color="#474645"/><stop offset="0.760" stop-color="#3b3a39"/><stop offset="0.806" stop-color="#302f2e"/><stop offset="0.848" stop-color="#252524"/><stop offset="0.883" stop-color="#1b1b1a"/><stop offset="0.912" stop-color="#121111"/><stop offset="0.938" stop-color="#0a0a09"/><stop offset="0.956" stop-color="#050505"/><stop offset="0.971" stop-color="#030303"/><stop offset="0.982" stop-color="#010101"/><stop offset="0.991" stop-color="#000000"/><stop offset="1.000" stop-color="#000000"/></linearGradient><linearGradient id="r66" gradientUnits="userSpaceOnUse" x1="580.5" y1="0" x2="921.5" y2="0" spreadMethod="reflect"><stop offset="0.000" stop-color="#fffbf6"/><stop offset="0.014" stop-color="#fdf9f4"/><stop offset="0.020" stop-color="#ebe8e3"/><stop offset="0.029" stop-color="#dad7d3"/><stop offset="0.046" stop-color="#c4c1bd"/><stop offset="0.076" stop-color="#b4b1ad"/><stop offset="0.150" stop-color="#a5a29f"/><stop offset="0.238" stop-color="#999693"/><stop offset="0.326" stop-color="#8d8b88"/><stop offset="0.413" stop-color="#7f7d7a"/><stop offset="0.501" stop-color="#6f6e6b"/><stop offset="0.575" stop-color="#62615f"/><stop offset="0.648" stop-color="#545351"/><stop offset="0.707" stop-color="#484745"/><stop offset="0.760" stop-color="#3b3b39"/><stop offset="0.806" stop-color="#31302f"/><stop offset="0.848" stop-color="#262625"/><stop offset="0.883" stop-color="#1c1b1b"/><stop offset="0.912" stop-color="#121212"/><stop offset="0.938" stop-color="#0a0a0a"/><stop offset="0.956" stop-color="#060606"/><stop offset="0.971" stop-color="#030303"/><stop offset="0.982" stop-color="#010101"/><stop offset="0.991" stop-color="#000000"/><stop offset="1.000" stop-color="#000000"/></linearGradient><linearGradient id="r67" gradientUnits="userSpaceOnUse" x1="580.5" y1="0" x2="921.5" y2="0" spreadMethod="reflect"><stop offset="0.000" stop-color="#fffbf6"/><stop offset="0.017" stop-color="#fcf9f3"/><stop offset="0.023" stop-color="#ebe8e3"/><stop offset="0.032" stop-color="#dad7d2"/><stop offset="0.049" stop-color="#c4c1bd"/><stop offset="0.079" stop-color="#b3b1ad"/><stop offset="0.150" stop-color="#a5a29f"/><stop offset="0.238" stop-color="#999693"/><stop offset="0.326" stop-color="#8d8b88"/><stop offset="0.413" stop-color="#7f7d7b"/><stop offset="0.501" stop-color="#706e6c"/><stop offset="0.575" stop-color="#63615f"/><stop offset="0.648" stop-color="#555352"/><stop offset="0.707" stop-color="#484746"/><stop offset="0.760" stop-color="#3c3b3a"/><stop offset="0.806" stop-color="#323130"/><stop offset="0.848" stop-color="#272726"/><stop offset="0.883" stop-color="#1d1d1c"/><stop offset="0.912" stop-color="#131313"/><stop offset="0.938" stop-color="#0b0b0b"/><stop offset="0.956" stop-color="#060606"/><stop offset="0.971" stop-color="#030303"/><stop offset="0.982" stop-color="#010101"/><stop offset="0.991" stop-color="#000000"/><stop offset="1.000" stop-color="#000000"/></linearGradient><linearGradient id="r68" gradientUnits="userSpaceOnUse" x1="580.5" y1="0" x2="921.5" y2="0" spreadMethod="reflect"><stop offset="0.000" stop-color="#fffbf6"/><stop offset="0.020" stop-color="#fcf8f3"/><stop offset="0.026" stop-color="#ebe7e3"/><stop offset="0.035" stop-color="#dad7d2"/><stop offset="0.052" stop-color="#c4c1bd"/><stop offset="0.082" stop-color="#b3b0ad"/><stop offset="0.150" stop-color="#a5a29f"/><stop offset="0.238" stop-color="#999794"/><stop offset="0.326" stop-color="#8d8b88"/><stop offset="0.413" stop-color="#7f7d7b"/><stop offset="0.501" stop-color="#706e6c"/><stop offset="0.575" stop-color="#636260"/><stop offset="0.648" stop-color="#555452"/><stop offset="0.707" stop-color="#494846"/><stop offset="0.760" stop-color="#3d3c3b"/><stop offset="0.806" stop-color="#323231"/><stop offset="0.848" stop-color="#282827"/><stop offset="0.883" stop-color="#1e1e1d"/><stop offset="0.912" stop-color="#141414"/><stop offset="0.938" stop-color="#0c0c0b"/><stop offset="0.956" stop-color="#070707"/><stop offset="0.971" stop-color="#030303"/><stop offset="0.982" stop-color="#010101"/><stop offset="0.991" stop-color="#000000"/><stop offset="1.000" stop-color="#000000"/></linearGradient><linearGradient id="r69" gradientUnits="userSpaceOnUse" x1="580.5" y1="0" x2="921.5" y2="0" spreadMethod="reflect"><stop offset="0.000" stop-color="#fffbf6"/><stop offset="0.024" stop-color="#fcf8f3"/><stop offset="0.029" stop-color="#ebe7e3"/><stop offset="0.038" stop-color="#dad7d2"/><stop offset="0.056" stop-color="#c4c1bd"/><stop offset="0.085" stop-color="#b3b0ad"/><stop offset="0.150" stop-color="#a5a39f"/><stop offset="0.238" stop-color="#999794"/><stop offset="0.326" stop-color="#8d8b88"/><stop offset="0.413" stop-color="#807e7b"/><stop offset="0.501" stop-color="#706f6c"/><stop offset="0.575" stop-color="#646260"/><stop offset="0.648" stop-color="#565453"/><stop offset="0.707" stop-color="#4a4947"/><stop offset="0.760" stop-color="#3e3d3c"/><stop offset="0.806" stop-color="#333332"/><stop offset="0.848" stop-color="#2a2928"/><stop offset="0.883" stop-color="#1f1f1e"/><stop offset="0.912" stop-color="#151515"/><stop offset="0.938" stop-color="#0d0c0c"/><stop offset="0.956" stop-color="#070707"/><stop offset="0.971" stop-color="#040403"/><stop offset="0.982" stop-color="#010101"/><stop offset="0.991" stop-color="#000000"/><stop offset="1.000" stop-color="#000000"/></linearGradient><linearGradient id="r70" gradientUnits="userSpaceOnUse" x1="580.5" y1="0" x2="921.5" y2="0" spreadMethod="reflect"><stop offset="0.000" stop-color="#fffbf6"/><stop offset="0.027" stop-color="#fcf8f3"/><stop offset="0.033" stop-color="#ebe7e2"/><stop offset="0.042" stop-color="#dad6d2"/><stop offset="0.060" stop-color="#c4c1bd"/><stop offset="0.089" stop-color="#b3b0ac"/><stop offset="0.150" stop-color="#a5a39f"/><stop offset="0.238" stop-color="#999794"/><stop offset="0.326" stop-color="#8d8b89"/><stop offset="0.413" stop-color="#807e7b"/><stop offset="0.501" stop-color="#716f6d"/><stop offset="0.575" stop-color="#646361"/><stop offset="0.648" stop-color="#565553"/><stop offset="0.707" stop-color="#4b4948"/><stop offset="0.760" stop-color="#3f3e3d"/><stop offset="0.806" stop-color="#353433"/><stop offset="0.848" stop-color="#2b2a29"/><stop offset="0.883" stop-color="#21201f"/><stop offset="0.912" stop-color="#171616"/><stop offset="0.938" stop-color="#0d0d0d"/><stop offset="0.956" stop-color="#080807"/><stop offset="0.971" stop-color="#040404"/><stop offset="0.982" stop-color="#010101"/><stop offset="0.991" stop-color="#000000"/><stop offset="1.000" stop-color="#000000"/></linearGradient><linearGradient id="r71" gradientUnits="userSpaceOnUse" x1="580.5" y1="0" x2="921.5" y2="0" spreadMethod="reflect"><stop offset="0.000" stop-color="#fffbf6"/><stop offset="0.032" stop-color="#fbf7f2"/><stop offset="0.037" stop-color="#eae7e2"/><stop offset="0.046" stop-color="#d9d6d2"/><stop offset="0.064" stop-color="#c3c0bd"/><stop offset="0.093" stop-color="#b2b0ac"/><stop offset="0.150" stop-color="#a5a3a0"/><stop offset="0.238" stop-color="#9a9794"/><stop offset="0.326" stop-color="#8e8c89"/><stop offset="0.413" stop-color="#807e7c"/><stop offset="0.501" stop-color="#716f6d"/><stop offset="0.575" stop-color="#656361"/><stop offset="0.648" stop-color="#575654"/><stop offset="0.707" stop-color="#4c4a49"/><stop offset="0.760" stop-color="#403f3e"/><stop offset="0.806" stop-color="#363534"/><stop offset="0.848" stop-color="#2c2b2b"/><stop offset="0.883" stop-color="#222121"/><stop offset="0.912" stop-color="#181717"/><stop offset="0.938" stop-color="#0e0e0e"/><stop offset="0.956" stop-color="#080808"/><stop offset="0.971" stop-color="#040404"/><stop offset="0.982" stop-color="#020202"/><stop offset="0.991" stop-color="#000000"/><stop offset="1.000" stop-color="#000000"/></linearGradient><linearGradient id="r72" gradientUnits="userSpaceOnUse" x1="580.5" y1="0" x2="921.5" y2="0" spreadMethod="reflect"><stop offset="0.000" stop-color="#fffbf6"/><stop offset="0.036" stop-color="#fbf7f2"/><stop offset="0.042" stop-color="#eae7e2"/><stop offset="0.051" stop-color="#d9d6d2"/><stop offset="0.068" stop-color="#c3c0bc"/><stop offset="0.098" stop-color="#b2afac"/><stop offset="0.150" stop-color="#a6a3a0"/><stop offset="0.238" stop-color="#9a9794"/><stop offset="0.326" stop-color="#8e8c89"/><stop offset="0.413" stop-color="#817f7c"/><stop offset="0.501" stop-color="#72706e"/><stop offset="0.575" stop-color="#656462"/><stop offset="0.648" stop-color="#585655"/><stop offset="0.707" stop-color="#4c4b4a"/><stop offset="0.760" stop-color="#41403f"/><stop offset="0.806" stop-color="#373635"/><stop offset="0.848" stop-color="#2e2d2c"/><stop offset="0.883" stop-color="#232322"/><stop offset="0.912" stop-color="#191918"/><stop offset="0.938" stop-color="#0f0f0e"/><stop offset="0.956" stop-color="#090909"/><stop offset="0.971" stop-color="#040404"/><stop offset="0.982" stop-color="#020202"/><stop offset="0.991" stop-color="#000000"/><stop offset="1.000" stop-color="#000000"/></linearGradient><linearGradient id="r73" gradientUnits="userSpaceOnUse" x1="580.5" y1="0" x2="921.5" y2="0" spreadMethod="reflect"><stop offset="0.000" stop-color="#fffbf6"/><stop offset="0.041" stop-color="#fbf7f2"/><stop offset="0.047" stop-color="#eae6e2"/><stop offset="0.056" stop-color="#d9d6d1"/><stop offset="0.073" stop-color="#c3c0bc"/><stop offset="0.102" stop-color="#b2afac"/><stop offset="0.150" stop-color="#a6a3a0"/><stop offset="0.238" stop-color="#9a9895"/><stop offset="0.326" stop-color="#8e8c89"/><stop offset="0.413" stop-color="#817f7d"/><stop offset="0.501" stop-color="#72706e"/><stop offset="0.575" stop-color="#666462"/><stop offset="0.648" stop-color="#585755"/><stop offset="0.707" stop-color="#4e4c4b"/><stop offset="0.760" stop-color="#424140"/><stop offset="0.806" stop-color="#383836"/><stop offset="0.848" stop-color="#2f2e2d"/><stop offset="0.883" stop-color="#252423"/><stop offset="0.912" stop-color="#1a1a19"/><stop offset="0.938" stop-color="#10100f"/><stop offset="0.956" stop-color="#090909"/><stop offset="0.971" stop-color="#050505"/><stop offset="0.982" stop-color="#020202"/><stop offset="0.991" stop-color="#000000"/><stop offset="1.000" stop-color="#000000"/></linearGradient><linearGradient id="r74" gradientUnits="userSpaceOnUse" x1="580.5" y1="0" x2="921.5" y2="0" spreadMethod="reflect"><stop offset="0.000" stop-color="#fefbf5"/><stop offset="0.046" stop-color="#faf6f1"/><stop offset="0.052" stop-color="#eae6e1"/><stop offset="0.061" stop-color="#d9d5d1"/><stop offset="0.078" stop-color="#c3c0bc"/><stop offset="0.108" stop-color="#b2afab"/><stop offset="0.150" stop-color="#a6a4a0"/><stop offset="0.238" stop-color="#9a9895"/><stop offset="0.326" stop-color="#8f8c8a"/><stop offset="0.413" stop-color="#81807d"/><stop offset="0.501" stop-color="#73716f"/><stop offset="0.575" stop-color="#666563"/><stop offset="0.648" stop-color="#595856"/><stop offset="0.707" stop-color="#4f4d4c"/><stop offset="0.760" stop-color="#444341"/><stop offset="0.806" stop-color="#3a3938"/><stop offset="0.848" stop-color="#30302f"/><stop offset="0.883" stop-color="#262625"/><stop offset="0.912" stop-color="#1c1b1b"/><stop offset="0.938" stop-color="#111110"/><stop offset="0.956" stop-color="#0a0a0a"/><stop offset="0.971" stop-color="#050505"/><stop offset="0.982" stop-color="#020202"/><stop offset="0.991" stop-color="#000000"/><stop offset="1.000" stop-color="#000000"/></linearGradient><linearGradient id="r75" gradientUnits="userSpaceOnUse" x1="580.5" y1="0" x2="921.5" y2="0" spreadMethod="reflect"><stop offset="0.000" stop-color="#fefaf5"/><stop offset="0.052" stop-color="#faf6f1"/><stop offset="0.057" stop-color="#e9e6e1"/><stop offset="0.066" stop-color="#d8d5d1"/><stop offset="0.084" stop-color="#c2bfbc"/><stop offset="0.113" stop-color="#b1afab"/><stop offset="0.150" stop-color="#a6a4a0"/><stop offset="0.238" stop-color="#9b9895"/><stop offset="0.326" stop-color="#8f8d8a"/><stop offset="0.413" stop-color="#82807d"/><stop offset="0.501" stop-color="#73716f"/><stop offset="0.575" stop-color="#676563"/><stop offset="0.648" stop-color="#5a5957"/><stop offset="0.707" stop-color="#4f4e4d"/><stop offset="0.760" stop-color="#454443"/><stop offset="0.806" stop-color="#3b3b39"/><stop offset="0.848" stop-color="#323130"/><stop offset="0.883" stop-color="#282726"/><stop offset="0.912" stop-color="#1d1d1c"/><stop offset="0.938" stop-color="#121211"/><stop offset="0.956" stop-color="#0b0a0a"/><stop offset="0.971" stop-color="#050505"/><stop offset="0.982" stop-color="#020202"/><stop offset="0.991" stop-color="#000000"/><stop offset="1.000" stop-color="#000000"/></linearGradient><linearGradient id="r76" gradientUnits="userSpaceOnUse" x1="580.5" y1="0" x2="921.5" y2="0" spreadMethod="reflect"><stop offset="0.000" stop-color="#fefaf5"/><stop offset="0.057" stop-color="#f9f6f1"/><stop offset="0.063" stop-color="#e9e5e1"/><stop offset="0.072" stop-color="#d8d5d1"/><stop offset="0.090" stop-color="#c2bfbb"/><stop offset="0.119" stop-color="#b1aeab"/><stop offset="0.150" stop-color="#a7a4a1"/><stop offset="0.238" stop-color="#9b9995"/><stop offset="0.326" stop-color="#8f8d8a"/><stop offset="0.413" stop-color="#82807e"/><stop offset="0.501" stop-color="#747270"/><stop offset="0.575" stop-color="#686664"/><stop offset="0.648" stop-color="#5b5a58"/><stop offset="0.707" stop-color="#504f4e"/><stop offset="0.760" stop-color="#464544"/><stop offset="0.806" stop-color="#3d3c3b"/><stop offset="0.848" stop-color="#343332"/><stop offset="0.883" stop-color="#292928"/><stop offset="0.912" stop-color="#1e1e1d"/><stop offset="0.938" stop-color="#131312"/><stop offset="0.956" stop-color="#0b0b0b"/><stop offset="0.971" stop-color="#060606"/><stop offset="0.982" stop-color="#020202"/><stop offset="0.991" stop-color="#000000"/><stop offset="1.000" stop-color="#000000"/></linearGradient><linearGradient id="r77" gradientUnits="userSpaceOnUse" x1="580.5" y1="0" x2="921.5" y2="0" spreadMethod="reflect"><stop offset="0.000" stop-color="#fdf9f4"/><stop offset="0.064" stop-color="#f9f5f0"/><stop offset="0.070" stop-color="#e9e5e1"/><stop offset="0.078" stop-color="#d8d5d0"/><stop offset="0.096" stop-color="#c2bfbb"/><stop offset="0.125" stop-color="#b0aeaa"/><stop offset="0.150" stop-color="#a8a6a2"/><stop offset="0.238" stop-color="#9b9996"/><stop offset="0.326" stop-color="#908d8b"/><stop offset="0.413" stop-color="#83817e"/><stop offset="0.501" stop-color="#747370"/><stop offset="0.575" stop-color="#686765"/><stop offset="0.648" stop-color="#5c5b59"/><stop offset="0.707" stop-color="#52504f"/><stop offset="0.760" stop-color="#484745"/><stop offset="0.806" stop-color="#3f3e3c"/><stop offset="0.848" stop-color="#353534"/><stop offset="0.883" stop-color="#2b2b2a"/><stop offset="0.912" stop-color="#201f1f"/><stop offset="0.938" stop-color="#141413"/><stop offset="0.956" stop-color="#0c0c0c"/><stop offset="0.971" stop-color="#060606"/><stop offset="0.982" stop-color="#020202"/><stop offset="0.991" stop-color="#010101"/><stop offset="1.000" stop-color="#000000"/></linearGradient><linearGradient id="r78" gradientUnits="userSpaceOnUse" x1="580.5" y1="0" x2="921.5" y2="0" spreadMethod="reflect"><stop offset="0.000" stop-color="#fdf9f4"/><stop offset="0.070" stop-color="#f8f5f0"/><stop offset="0.076" stop-color="#e8e5e0"/><stop offset="0.085" stop-color="#d8d4d0"/><stop offset="0.103" stop-color="#c1bfbb"/><stop offset="0.132" stop-color="#b0adaa"/><stop offset="0.150" stop-color="#aaa7a4"/><stop offset="0.238" stop-color="#9b9996"/><stop offset="0.326" stop-color="#908e8b"/><stop offset="0.413" stop-color="#83817f"/><stop offset="0.501" stop-color="#757371"/><stop offset="0.575" stop-color="#696765"/><stop offset="0.648" stop-color="#5d5b5a"/><stop offset="0.707" stop-color="#535150"/><stop offset="0.760" stop-color="#494847"/><stop offset="0.806" stop-color="#403f3e"/><stop offset="0.848" stop-color="#373635"/><stop offset="0.883" stop-color="#2d2c2b"/><stop offset="0.912" stop-color="#212120"/><stop offset="0.938" stop-color="#151514"/><stop offset="0.956" stop-color="#0d0c0c"/><stop offset="0.971" stop-color="#060606"/><stop offset="0.982" stop-color="#030302"/><stop offset="0.991" stop-color="#010101"/><stop offset="1.000" stop-color="#000000"/></linearGradient><linearGradient id="r79" gradientUnits="userSpaceOnUse" x1="580.5" y1="0" x2="921.5" y2="0" spreadMethod="reflect"><stop offset="0.000" stop-color="#fcf8f3"/><stop offset="0.077" stop-color="#f8f4ef"/><stop offset="0.083" stop-color="#e8e4e0"/><stop offset="0.092" stop-color="#d7d4d0"/><stop offset="0.110" stop-color="#c1beba"/><stop offset="0.139" stop-color="#b0adaa"/><stop offset="0.150" stop-color="#aca9a6"/><stop offset="0.238" stop-color="#9c9996"/><stop offset="0.326" stop-color="#908e8b"/><stop offset="0.413" stop-color="#84827f"/><stop offset="0.501" stop-color="#767471"/><stop offset="0.575" stop-color="#6a6866"/><stop offset="0.648" stop-color="#5e5c5b"/><stop offset="0.707" stop-color="#545351"/><stop offset="0.760" stop-color="#4b4a48"/><stop offset="0.806" stop-color="#424140"/><stop offset="0.848" stop-color="#393837"/><stop offset="0.883" stop-color="#2f2e2d"/><stop offset="0.912" stop-color="#232222"/><stop offset="0.938" stop-color="#161615"/><stop offset="0.956" stop-color="#0d0d0d"/><stop offset="0.971" stop-color="#070707"/><stop offset="0.982" stop-color="#030303"/><stop offset="0.991" stop-color="#010101"/><stop offset="1.000" stop-color="#000000"/></linearGradient><linearGradient id="r80" gradientUnits="userSpaceOnUse" x1="580.5" y1="0" x2="921.5" y2="0" spreadMethod="reflect"><stop offset="0.000" stop-color="#fbf8f3"/><stop offset="0.085" stop-color="#f7f4ef"/><stop offset="0.091" stop-color="#e8e4df"/><stop offset="0.099" stop-color="#d7d4cf"/><stop offset="0.117" stop-color="#c1beba"/><stop offset="0.146" stop-color="#afada9"/><stop offset="0.238" stop-color="#9c9a97"/><stop offset="0.326" stop-color="#918f8c"/><stop offset="0.413" stop-color="#858380"/><stop offset="0.501" stop-color="#767472"/><stop offset="0.575" stop-color="#6a6967"/><stop offset="0.648" stop-color="#5f5d5c"/><stop offset="0.707" stop-color="#555452"/><stop offset="0.760" stop-color="#4c4b4a"/><stop offset="0.806" stop-color="#444341"/><stop offset="0.848" stop-color="#3b3a39"/><stop offset="0.883" stop-color="#31302f"/><stop offset="0.912" stop-color="#252423"/><stop offset="0.938" stop-color="#171716"/><stop offset="0.956" stop-color="#0e0e0e"/><stop offset="0.971" stop-color="#070707"/><stop offset="0.982" stop-color="#030303"/><stop offset="0.991" stop-color="#010101"/><stop offset="1.000" stop-color="#000000"/></linearGradient><linearGradient id="r81" gradientUnits="userSpaceOnUse" x1="580.5" y1="0" x2="921.5" y2="0" spreadMethod="reflect"><stop offset="0.000" stop-color="#fbf7f2"/><stop offset="0.092" stop-color="#f7f3ee"/><stop offset="0.098" stop-color="#e7e4df"/><stop offset="0.107" stop-color="#d7d3cf"/><stop offset="0.125" stop-color="#c0bdba"/><stop offset="0.154" stop-color="#afaca9"/><stop offset="0.238" stop-color="#9d9a97"/><stop offset="0.326" stop-color="#918f8c"/><stop offset="0.413" stop-color="#858381"/><stop offset="0.501" stop-color="#777573"/><stop offset="0.575" stop-color="#6b6a67"/><stop offset="0.648" stop-color="#605e5d"/><stop offset="0.707" stop-color="#565553"/><stop offset="0.760" stop-color="#4e4d4b"/><stop offset="0.806" stop-color="#464443"/><stop offset="0.848" stop-color="#3d3c3b"/><stop offset="0.883" stop-color="#333231"/><stop offset="0.912" stop-color="#262625"/><stop offset="0.938" stop-color="#191818"/><stop offset="0.956" stop-color="#0f0f0e"/><stop offset="0.971" stop-color="#080807"/><stop offset="0.982" stop-color="#030303"/><stop offset="0.991" stop-color="#010101"/><stop offset="1.000" stop-color="#000000"/></linearGradient><linearGradient id="r82" gradientUnits="userSpaceOnUse" x1="580.5" y1="0" x2="921.5" y2="0" spreadMethod="reflect"><stop offset="0.000" stop-color="#faf7f2"/><stop offset="0.101" stop-color="#f6f3ee"/><stop offset="0.106" stop-color="#e7e3df"/><stop offset="0.115" stop-color="#d6d3cf"/><stop offset="0.133" stop-color="#c0bdb9"/><stop offset="0.162" stop-color="#aeaca8"/><stop offset="0.238" stop-color="#9d9b97"/><stop offset="0.326" stop-color="#928f8c"/><stop offset="0.413" stop-color="#868481"/><stop offset="0.501" stop-color="#787673"/><stop offset="0.575" stop-color="#6c6a68"/><stop offset="0.648" stop-color="#615f5d"/><stop offset="0.707" stop-color="#575654"/><stop offset="0.760" stop-color="#4f4e4c"/><stop offset="0.806" stop-color="#474645"/><stop offset="0.848" stop-color="#3f3e3d"/><stop offset="0.883" stop-color="#353433"/><stop offset="0.912" stop-color="#282827"/><stop offset="0.938" stop-color="#1a1a19"/><stop offset="0.956" stop-color="#10100f"/><stop offset="0.971" stop-color="#080808"/><stop offset="0.982" stop-color="#030303"/><stop offset="0.991" stop-color="#010101"/><stop offset="1.000" stop-color="#000000"/></linearGradient><linearGradient id="r83" gradientUnits="userSpaceOnUse" x1="580.5" y1="0" x2="921.5" y2="0" spreadMethod="reflect"><stop offset="0.000" stop-color="#faf6f1"/><stop offset="0.109" stop-color="#f6f2ed"/><stop offset="0.115" stop-color="#e6e3de"/><stop offset="0.124" stop-color="#d6d3ce"/><stop offset="0.141" stop-color="#c0bdb9"/><stop offset="0.171" stop-color="#adaba7"/><stop offset="0.238" stop-color="#9d9b98"/><stop offset="0.326" stop-color="#92908d"/><stop offset="0.413" stop-color="#868482"/><stop offset="0.501" stop-color="#787774"/><stop offset="0.575" stop-color="#6d6b69"/><stop offset="0.648" stop-color="#62605e"/><stop offset="0.707" stop-color="#595756"/><stop offset="0.760" stop-color="#514f4e"/><stop offset="0.806" stop-color="#494847"/><stop offset="0.848" stop-color="#41403f"/><stop offset="0.883" stop-color="#373635"/><stop offset="0.912" stop-color="#2a2a29"/><stop offset="0.938" stop-color="#1b1b1a"/><stop offset="0.956" stop-color="#111010"/><stop offset="0.971" stop-color="#090908"/><stop offset="0.982" stop-color="#030303"/><stop offset="0.991" stop-color="#010101"/><stop offset="1.000" stop-color="#000000"/></linearGradient><linearGradient id="r84" gradientUnits="userSpaceOnUse" x1="580.5" y1="0" x2="921.5" y2="0" spreadMethod="reflect"><stop offset="0.000" stop-color="#f9f5f0"/><stop offset="0.118" stop-color="#f5f1ed"/><stop offset="0.124" stop-color="#e6e2de"/><stop offset="0.133" stop-color="#d5d2ce"/><stop offset="0.151" stop-color="#bfbcb8"/><stop offset="0.180" stop-color="#adaaa7"/><stop offset="0.238" stop-color="#9e9b98"/><stop offset="0.326" stop-color="#92908d"/><stop offset="0.413" stop-color="#878582"/><stop offset="0.501" stop-color="#797775"/><stop offset="0.575" stop-color="#6e6c6a"/><stop offset="0.648" stop-color="#63615f"/><stop offset="0.707" stop-color="#5a5957"/><stop offset="0.760" stop-color="#52514f"/><stop offset="0.806" stop-color="#4b4a48"/><stop offset="0.848" stop-color="#434241"/><stop offset="0.883" stop-color="#393837"/><stop offset="0.912" stop-color="#2c2c2b"/><stop offset="0.938" stop-color="#1d1c1c"/><stop offset="0.956" stop-color="#121111"/><stop offset="0.971" stop-color="#090909"/><stop offset="0.982" stop-color="#040404"/><stop offset="0.991" stop-color="#010101"/><stop offset="1.000" stop-color="#000000"/></linearGradient><linearGradient id="r85" gradientUnits="userSpaceOnUse" x1="580.5" y1="0" x2="921.5" y2="0" spreadMethod="reflect"><stop offset="0.000" stop-color="#f8f5f0"/><stop offset="0.128" stop-color="#f4f1ec"/><stop offset="0.134" stop-color="#e5e2dd"/><stop offset="0.142" stop-color="#d5d2ce"/><stop offset="0.160" stop-color="#bfbcb8"/><stop offset="0.189" stop-color="#acaaa6"/><stop offset="0.238" stop-color="#9e9c99"/><stop offset="0.326" stop-color="#93918e"/><stop offset="0.413" stop-color="#888683"/><stop offset="0.501" stop-color="#7a7876"/><stop offset="0.575" stop-color="#6f6d6b"/><stop offset="0.648" stop-color="#646260"/><stop offset="0.707" stop-color="#5b5a58"/><stop offset="0.760" stop-color="#545251"/><stop offset="0.806" stop-color="#4d4c4a"/><stop offset="0.848" stop-color="#454443"/><stop offset="0.883" stop-color="#3c3b39"/><stop offset="0.912" stop-color="#2e2e2d"/><stop offset="0.938" stop-color="#1e1e1d"/><stop offset="0.956" stop-color="#131212"/><stop offset="0.971" stop-color="#0a0a09"/><stop offset="0.982" stop-color="#040404"/><stop offset="0.991" stop-color="#010101"/><stop offset="1.000" stop-color="#000000"/></linearGradient><linearGradient id="r86" gradientUnits="userSpaceOnUse" x1="580.5" y1="0" x2="921.5" y2="0" spreadMethod="reflect"><stop offset="0.000" stop-color="#f8f4ef"/><stop offset="0.138" stop-color="#f4f0eb"/><stop offset="0.144" stop-color="#e5e1dd"/><stop offset="0.152" stop-color="#d5d1cd"/><stop offset="0.170" stop-color="#bebbb7"/><stop offset="0.199" stop-color="#aba9a5"/><stop offset="0.238" stop-color="#9f9c99"/><stop offset="0.326" stop-color="#93918e"/><stop offset="0.413" stop-color="#888684"/><stop offset="0.501" stop-color="#7b7976"/><stop offset="0.575" stop-color="#706e6c"/><stop offset="0.648" stop-color="#656361"/><stop offset="0.707" stop-color="#5d5b59"/><stop offset="0.760" stop-color="#555452"/><stop offset="0.806" stop-color="#4f4e4c"/><stop offset="0.848" stop-color="#484745"/><stop offset="0.883" stop-color="#3e3d3c"/><stop offset="0.912" stop-color="#31302f"/><stop offset="0.938" stop-color="#20201f"/><stop offset="0.956" stop-color="#141413"/><stop offset="0.971" stop-color="#0a0a0a"/><stop offset="0.982" stop-color="#040404"/><stop offset="0.991" stop-color="#010101"/><stop offset="1.000" stop-color="#000000"/></linearGradient><linearGradient id="r87" gradientUnits="userSpaceOnUse" x1="580.5" y1="0" x2="921.5" y2="0" spreadMethod="reflect"><stop offset="0.000" stop-color="#f7f3ee"/><stop offset="0.148" stop-color="#f3efeb"/><stop offset="0.154" stop-color="#e4e1dc"/><stop offset="0.163" stop-color="#d4d1cd"/><stop offset="0.180" stop-color="#bdbbb7"/><stop offset="0.210" stop-color="#aba8a5"/><stop offset="0.238" stop-color="#a29f9c"/><stop offset="0.326" stop-color="#94928f"/><stop offset="0.413" stop-color="#898784"/><stop offset="0.501" stop-color="#7c7a77"/><stop offset="0.575" stop-color="#716f6d"/><stop offset="0.648" stop-color="#666562"/><stop offset="0.707" stop-color="#5e5d5b"/><stop offset="0.760" stop-color="#575554"/><stop offset="0.806" stop-color="#504f4e"/><stop offset="0.848" stop-color="#4a4947"/><stop offset="0.883" stop-color="#403f3e"/><stop offset="0.912" stop-color="#333231"/><stop offset="0.938" stop-color="#222121"/><stop offset="0.956" stop-color="#151514"/><stop offset="0.971" stop-color="#0b0b0b"/><stop offset="0.982" stop-color="#040404"/><stop offset="0.991" stop-color="#010101"/><stop offset="1.000" stop-color="#000000"/></linearGradient><linearGradient id="r88" gradientUnits="userSpaceOnUse" x1="580.5" y1="0" x2="921.5" y2="0" spreadMethod="reflect"><stop offset="0.000" stop-color="#f6f2ed"/><stop offset="0.159" stop-color="#f2efea"/><stop offset="0.165" stop-color="#e4e0dc"/><stop offset="0.174" stop-color="#d4d0cc"/><stop offset="0.191" stop-color="#bdbab6"/><stop offset="0.221" stop-color="#aaa7a4"/><stop offset="0.238" stop-color="#a4a29f"/><stop offset="0.326" stop-color="#94928f"/><stop offset="0.413" stop-color="#8a8785"/><stop offset="0.501" stop-color="#7c7b78"/><stop offset="0.575" stop-color="#72706e"/><stop offset="0.648" stop-color="#676664"/><stop offset="0.707" stop-color="#5f5e5c"/><stop offset="0.760" stop-color="#585755"/><stop offset="0.806" stop-color="#52514f"/><stop offset="0.848" stop-color="#4c4b49"/><stop offset="0.883" stop-color="#434240"/><stop offset="0.912" stop-color="#353433"/><stop offset="0.938" stop-color="#242322"/><stop offset="0.956" stop-color="#161615"/><stop offset="0.971" stop-color="#0c0b0b"/><stop offset="0.982" stop-color="#050504"/><stop offset="0.991" stop-color="#010101"/><stop offset="1.000" stop-color="#000000"/></linearGradient><linearGradient id="r89" gradientUnits="userSpaceOnUse" x1="580.5" y1="0" x2="921.5" y2="0" spreadMethod="reflect"><stop offset="0.000" stop-color="#f5f1ed"/><stop offset="0.171" stop-color="#f2eee9"/><stop offset="0.176" stop-color="#e3e0db"/><stop offset="0.185" stop-color="#d3d0cc"/><stop offset="0.203" stop-color="#bcb9b6"/><stop offset="0.232" stop-color="#a9a7a3"/><stop offset="0.326" stop-color="#959390"/><stop offset="0.413" stop-color="#8a8885"/><stop offset="0.501" stop-color="#7d7b79"/><stop offset="0.575" stop-color="#73716f"/><stop offset="0.648" stop-color="#686765"/><stop offset="0.707" stop-color="#615f5d"/><stop offset="0.760" stop-color="#5a5856"/><stop offset="0.806" stop-color="#545351"/><stop offset="0.848" stop-color="#4e4d4b"/><stop offset="0.883" stop-color="#454443"/><stop offset="0.912" stop-color="#383736"/><stop offset="0.938" stop-color="#252524"/><stop offset="0.956" stop-color="#171717"/><stop offset="0.971" stop-color="#0c0c0c"/><stop offset="0.982" stop-color="#050505"/><stop offset="0.991" stop-color="#010101"/><stop offset="1.000" stop-color="#000000"/></linearGradient><linearGradient id="r90" gradientUnits="userSpaceOnUse" x1="580.5" y1="0" x2="921.5" y2="0" spreadMethod="reflect"><stop offset="0.000" stop-color="#f4f1ec"/><stop offset="0.183" stop-color="#f1ede8"/><stop offset="0.188" stop-color="#e2dfda"/><stop offset="0.197" stop-color="#d2cfcb"/><stop offset="0.215" stop-color="#bbb9b5"/><stop offset="0.244" stop-color="#a8a6a2"/><stop offset="0.326" stop-color="#969390"/><stop offset="0.413" stop-color="#8b8986"/><stop offset="0.501" stop-color="#7e7c7a"/><stop offset="0.575" stop-color="#747270"/><stop offset="0.648" stop-color="#696866"/><stop offset="0.707" stop-color="#62605e"/><stop offset="0.760" stop-color="#5b5a58"/><stop offset="0.806" stop-color="#565453"/><stop offset="0.848" stop-color="#504f4d"/><stop offset="0.883" stop-color="#474645"/><stop offset="0.912" stop-color="#3a3938"/><stop offset="0.938" stop-color="#272726"/><stop offset="0.956" stop-color="#191818"/><stop offset="0.971" stop-color="#0d0d0d"/><stop offset="0.982" stop-color="#050505"/><stop offset="0.991" stop-color="#010101"/><stop offset="1.000" stop-color="#000000"/></linearGradient><linearGradient id="r91" gradientUnits="userSpaceOnUse" x1="580.5" y1="0" x2="921.5" y2="0" spreadMethod="reflect"><stop offset="0.000" stop-color="#f3f0eb"/><stop offset="0.195" stop-color="#f0ece7"/><stop offset="0.201" stop-color="#e1deda"/><stop offset="0.210" stop-color="#d2ceca"/><stop offset="0.227" stop-color="#bbb8b4"/><stop offset="0.257" stop-color="#a8a5a2"/><stop offset="0.326" stop-color="#969491"/><stop offset="0.413" stop-color="#8b8987"/><stop offset="0.501" stop-color="#7f7d7b"/><stop offset="0.575" stop-color="#757371"/><stop offset="0.648" stop-color="#6b6967"/><stop offset="0.707" stop-color="#636260"/><stop offset="0.760" stop-color="#5d5b5a"/><stop offset="0.806" stop-color="#575654"/><stop offset="0.848" stop-color="#52514f"/><stop offset="0.883" stop-color="#4a4947"/><stop offset="0.912" stop-color="#3d3c3a"/><stop offset="0.938" stop-color="#2a2928"/><stop offset="0.956" stop-color="#1a1a19"/><stop offset="0.971" stop-color="#0e0e0d"/><stop offset="0.982" stop-color="#060605"/><stop offset="0.991" stop-color="#010101"/><stop offset="1.000" stop-color="#000000"/></linearGradient><linearGradient id="r92" gradientUnits="userSpaceOnUse" x1="580.5" y1="0" x2="921.5" y2="0" spreadMethod="reflect"><stop offset="0.000" stop-color="#f2eeea"/><stop offset="0.208" stop-color="#efebe6"/><stop offset="0.214" stop-color="#e1ddd9"/><stop offset="0.223" stop-color="#d1ceca"/><stop offset="0.241" stop-color="#bab7b3"/><stop offset="0.270" stop-color="#a7a4a1"/><stop offset="0.326" stop-color="#979491"/><stop offset="0.413" stop-color="#8c8a87"/><stop offset="0.501" stop-color="#807e7c"/><stop offset="0.575" stop-color="#767472"/><stop offset="0.648" stop-color="#6c6a68"/><stop offset="0.707" stop-color="#646361"/><stop offset="0.760" stop-color="#5e5d5b"/><stop offset="0.806" stop-color="#595856"/><stop offset="0.848" stop-color="#545351"/><stop offset="0.883" stop-color="#4c4b49"/><stop offset="0.912" stop-color="#3f3e3d"/><stop offset="0.938" stop-color="#2c2b2a"/><stop offset="0.956" stop-color="#1c1b1b"/><stop offset="0.971" stop-color="#0f0f0e"/><stop offset="0.982" stop-color="#060606"/><stop offset="0.991" stop-color="#010101"/><stop offset="1.000" stop-color="#000000"/></linearGradient><linearGradient id="r93" gradientUnits="userSpaceOnUse" x1="580.5" y1="0" x2="921.5" y2="0" spreadMethod="reflect"><stop offset="0.000" stop-color="#f1ede9"/><stop offset="0.222" stop-color="#eeeae5"/><stop offset="0.228" stop-color="#e0dcd8"/><stop offset="0.237" stop-color="#d0cdc9"/><stop offset="0.254" stop-color="#b9b6b3"/><stop offset="0.284" stop-color="#a6a3a0"/><stop offset="0.326" stop-color="#999794"/><stop offset="0.413" stop-color="#8d8b88"/><stop offset="0.501" stop-color="#817f7d"/><stop offset="0.575" stop-color="#777573"/><stop offset="0.648" stop-color="#6d6b69"/><stop offset="0.707" stop-color="#666462"/><stop offset="0.760" stop-color="#605f5d"/><stop offset="0.806" stop-color="#5b5958"/><stop offset="0.848" stop-color="#565553"/><stop offset="0.883" stop-color="#4e4d4c"/><stop offset="0.912" stop-color="#41403f"/><stop offset="0.938" stop-color="#2e2d2c"/><stop offset="0.956" stop-color="#1d1d1c"/><stop offset="0.971" stop-color="#100f0f"/><stop offset="0.982" stop-color="#060606"/><stop offset="0.991" stop-color="#010101"/><stop offset="1.000" stop-color="#000000"/></linearGradient><linearGradient id="r94" gradientUnits="userSpaceOnUse" x1="580.5" y1="0" x2="921.5" y2="0" spreadMethod="reflect"><stop offset="0.000" stop-color="#f0ece7"/><stop offset="0.236" stop-color="#ece9e4"/><stop offset="0.242" stop-color="#dfdcd7"/><stop offset="0.251" stop-color="#cfccc8"/><stop offset="0.269" stop-color="#b8b6b2"/><stop offset="0.298" stop-color="#a5a29f"/><stop offset="0.326" stop-color="#9d9a97"/><stop offset="0.413" stop-color="#8d8b88"/><stop offset="0.501" stop-color="#82807d"/><stop offset="0.575" stop-color="#787674"/><stop offset="0.648" stop-color="#6e6d6a"/><stop offset="0.707" stop-color="#676663"/><stop offset="0.760" stop-color="#61605e"/><stop offset="0.806" stop-color="#5c5b59"/><stop offset="0.848" stop-color="#585655"/><stop offset="0.883" stop-color="#514f4e"/><stop offset="0.912" stop-color="#444342"/><stop offset="0.938" stop-color="#302f2e"/><stop offset="0.956" stop-color="#1f1e1e"/><stop offset="0.971" stop-color="#111010"/><stop offset="0.982" stop-color="#070706"/><stop offset="0.991" stop-color="#010101"/><stop offset="1.000" stop-color="#000000"/></linearGradient><linearGradient id="r95" gradientUnits="userSpaceOnUse" x1="580.5" y1="0" x2="921.5" y2="0" spreadMethod="reflect"><stop offset="0.000" stop-color="#efebe6"/><stop offset="0.252" stop-color="#ebe8e3"/><stop offset="0.257" stop-color="#dedbd6"/><stop offset="0.266" stop-color="#cfccc7"/><stop offset="0.284" stop-color="#b7b5b1"/><stop offset="0.313" stop-color="#a4a19e"/><stop offset="0.326" stop-color="#a09e9b"/><stop offset="0.413" stop-color="#8e8c89"/><stop offset="0.501" stop-color="#83817e"/><stop offset="0.575" stop-color="#797775"/><stop offset="0.648" stop-color="#6f6e6b"/><stop offset="0.707" stop-color="#686765"/><stop offset="0.760" stop-color="#63615f"/><stop offset="0.806" stop-color="#5e5d5b"/><stop offset="0.848" stop-color="#5a5857"/><stop offset="0.883" stop-color="#535250"/><stop offset="0.912" stop-color="#474644"/><stop offset="0.938" stop-color="#323231"/><stop offset="0.956" stop-color="#212020"/><stop offset="0.971" stop-color="#121111"/><stop offset="0.982" stop-color="#070707"/><stop offset="0.991" stop-color="#020202"/><stop offset="1.000" stop-color="#000000"/></linearGradient><linearGradient id="r96" gradientUnits="userSpaceOnUse" x1="580.5" y1="0" x2="921.5" y2="0" spreadMethod="reflect"><stop offset="0.000" stop-color="#edeae5"/><stop offset="0.267" stop-color="#eae6e2"/><stop offset="0.273" stop-color="#dddad5"/><stop offset="0.282" stop-color="#cecbc7"/><stop offset="0.300" stop-color="#b7b4b0"/><stop offset="0.329" stop-color="#a3a19d"/><stop offset="0.413" stop-color="#8f8d8a"/><stop offset="0.501" stop-color="#84827f"/><stop offset="0.575" stop-color="#7a7876"/><stop offset="0.648" stop-color="#716f6d"/><stop offset="0.707" stop-color="#6a6866"/><stop offset="0.760" stop-color="#646361"/><stop offset="0.806" stop-color="#605f5d"/><stop offset="0.848" stop-color="#5c5a59"/><stop offset="0.883" stop-color="#555452"/><stop offset="0.912" stop-color="#494847"/><stop offset="0.938" stop-color="#353433"/><stop offset="0.956" stop-color="#232221"/><stop offset="0.971" stop-color="#131212"/><stop offset="0.982" stop-color="#080707"/><stop offset="0.991" stop-color="#020202"/><stop offset="1.000" stop-color="#000000"/></linearGradient><linearGradient id="r97" gradientUnits="userSpaceOnUse" x1="580.5" y1="0" x2="921.5" y2="0" spreadMethod="reflect"><stop offset="0.000" stop-color="#ece8e4"/><stop offset="0.284" stop-color="#e9e5e1"/><stop offset="0.290" stop-color="#dcd9d4"/><stop offset="0.299" stop-color="#cdcac6"/><stop offset="0.316" stop-color="#b6b3af"/><stop offset="0.346" stop-color="#a3a09d"/><stop offset="0.413" stop-color="#8f8d8a"/><stop offset="0.501" stop-color="#858380"/><stop offset="0.575" stop-color="#7b7977"/><stop offset="0.648" stop-color="#72706e"/><stop offset="0.707" stop-color="#6b6a67"/><stop offset="0.760" stop-color="#666462"/><stop offset="0.806" stop-color="#62605e"/><stop offset="0.848" stop-color="#5e5c5a"/><stop offset="0.883" stop-color="#585755"/><stop offset="0.912" stop-color="#4c4b49"/><stop offset="0.938" stop-color="#373736"/><stop offset="0.956" stop-color="#252423"/><stop offset="0.971" stop-color="#141413"/><stop offset="0.982" stop-color="#080808"/><stop offset="0.991" stop-color="#020202"/><stop offset="1.000" stop-color="#000000"/></linearGradient><linearGradient id="r98" gradientUnits="userSpaceOnUse" x1="580.5" y1="0" x2="921.5" y2="0" spreadMethod="reflect"><stop offset="0.000" stop-color="#ebe7e2"/><stop offset="0.301" stop-color="#e7e4df"/><stop offset="0.307" stop-color="#dbd8d3"/><stop offset="0.316" stop-color="#ccc9c5"/><stop offset="0.334" stop-color="#b5b2ae"/><stop offset="0.363" stop-color="#a2a09c"/><stop offset="0.413" stop-color="#93918e"/><stop offset="0.501" stop-color="#868481"/><stop offset="0.575" stop-color="#7c7a78"/><stop offset="0.648" stop-color="#73716f"/><stop offset="0.707" stop-color="#6d6b69"/><stop offset="0.760" stop-color="#676664"/><stop offset="0.806" stop-color="#636260"/><stop offset="0.848" stop-color="#605e5c"/><stop offset="0.883" stop-color="#5a5957"/><stop offset="0.912" stop-color="#4f4e4c"/><stop offset="0.938" stop-color="#3a3938"/><stop offset="0.956" stop-color="#272625"/><stop offset="0.971" stop-color="#151514"/><stop offset="0.982" stop-color="#090908"/><stop offset="0.991" stop-color="#020202"/><stop offset="1.000" stop-color="#000000"/></linearGradient><linearGradient id="r99" gradientUnits="userSpaceOnUse" x1="580.5" y1="0" x2="921.5" y2="0" spreadMethod="reflect"><stop offset="0.000" stop-color="#e9e6e1"/><stop offset="0.320" stop-color="#e6e3de"/><stop offset="0.326" stop-color="#dad7d2"/><stop offset="0.334" stop-color="#cbc8c4"/><stop offset="0.352" stop-color="#b4b1ae"/><stop offset="0.381" stop-color="#a29f9c"/><stop offset="0.413" stop-color="#979592"/><stop offset="0.501" stop-color="#878582"/><stop offset="0.575" stop-color="#7d7c79"/><stop offset="0.648" stop-color="#747370"/><stop offset="0.707" stop-color="#6e6c6a"/><stop offset="0.760" stop-color="#696765"/><stop offset="0.806" stop-color="#656361"/><stop offset="0.848" stop-color="#61605e"/><stop offset="0.883" stop-color="#5d5b59"/><stop offset="0.912" stop-color="#52514f"/><stop offset="0.938" stop-color="#3d3c3b"/><stop offset="0.956" stop-color="#292828"/><stop offset="0.971" stop-color="#171616"/><stop offset="0.982" stop-color="#090909"/><stop offset="0.991" stop-color="#020202"/><stop offset="1.000" stop-color="#000000"/></linearGradient><linearGradient id="r100" gradientUnits="userSpaceOnUse" x1="580.5" y1="0" x2="921.5" y2="0" spreadMethod="reflect"><stop offset="0.000" stop-color="#e8e4df"/><stop offset="0.339" stop-color="#e5e1dd"/><stop offset="0.345" stop-color="#d9d6d1"/><stop offset="0.354" stop-color="#cac7c3"/><stop offset="0.371" stop-color="#b3b1ad"/><stop offset="0.401" stop-color="#a19f9c"/><stop offset="0.413" stop-color="#9b9996"/><stop offset="0.501" stop-color="#888683"/><stop offset="0.575" stop-color="#7f7d7a"/><stop offset="0.648" stop-color="#767472"/><stop offset="0.707" stop-color="#6f6e6b"/><stop offset="0.760" stop-color="#6a6966"/><stop offset="0.806" stop-color="#666563"/><stop offset="0.848" stop-color="#636260"/><stop offset="0.883" stop-color="#5f5d5b"/><stop offset="0.912" stop-color="#555452"/><stop offset="0.938" stop-color="#403f3e"/><stop offset="0.956" stop-color="#2b2b2a"/><stop offset="0.971" stop-color="#181817"/><stop offset="0.982" stop-color="#0a0a0a"/><stop offset="0.991" stop-color="#020202"/><stop offset="1.000" stop-color="#000000"/></linearGradient><linearGradient id="r101" gradientUnits="userSpaceOnUse" x1="580.5" y1="0" x2="921.5" y2="0" spreadMethod="reflect"><stop offset="0.000" stop-color="#e6e3de"/><stop offset="0.359" stop-color="#e3e0db"/><stop offset="0.365" stop-color="#d8d5d0"/><stop offset="0.374" stop-color="#c9c6c2"/><stop offset="0.392" stop-color="#b3b0ad"/><stop offset="0.421" stop-color="#a19e9b"/><stop offset="0.501" stop-color="#898785"/><stop offset="0.575" stop-color="#807e7b"/><stop offset="0.648" stop-color="#777573"/><stop offset="0.707" stop-color="#716f6d"/><stop offset="0.760" stop-color="#6c6a68"/><stop offset="0.806" stop-color="#686664"/><stop offset="0.848" stop-color="#656361"/><stop offset="0.883" stop-color="#615f5d"/><stop offset="0.912" stop-color="#585655"/><stop offset="0.938" stop-color="#434241"/><stop offset="0.956" stop-color="#2e2d2c"/><stop offset="0.971" stop-color="#1a1919"/><stop offset="0.982" stop-color="#0b0b0a"/><stop offset="0.991" stop-color="#020202"/><stop offset="1.000" stop-color="#000000"/></linearGradient><linearGradient id="r102" gradientUnits="userSpaceOnUse" x1="580.5" y1="0" x2="921.5" y2="0" spreadMethod="reflect"><stop offset="0.000" stop-color="#e4e1dc"/><stop offset="0.381" stop-color="#e2deda"/><stop offset="0.387" stop-color="#d7d4cf"/><stop offset="0.396" stop-color="#c8c5c1"/><stop offset="0.413" stop-color="#b3b0ad"/><stop offset="0.442" stop-color="#a09e9b"/><stop offset="0.501" stop-color="#8e8c89"/><stop offset="0.575" stop-color="#817f7c"/><stop offset="0.648" stop-color="#787774"/><stop offset="0.707" stop-color="#72706e"/><stop offset="0.760" stop-color="#6d6c69"/><stop offset="0.806" stop-color="#696866"/><stop offset="0.848" stop-color="#676563"/><stop offset="0.883" stop-color="#636160"/><stop offset="0.912" stop-color="#5a5957"/><stop offset="0.938" stop-color="#474644"/><stop offset="0.956" stop-color="#31302f"/><stop offset="0.971" stop-color="#1c1b1b"/><stop offset="0.982" stop-color="#0b0b0b"/><stop offset="0.991" stop-color="#030303"/><stop offset="1.000" stop-color="#000000"/></linearGradient><linearGradient id="r103" gradientUnits="userSpaceOnUse" x1="580.5" y1="0" x2="921.5" y2="0" spreadMethod="reflect"><stop offset="0.000" stop-color="#e3dfdb"/><stop offset="0.404" stop-color="#e0ddd8"/><stop offset="0.410" stop-color="#d6d2ce"/><stop offset="0.418" stop-color="#c7c4c0"/><stop offset="0.436" stop-color="#b3b0ac"/><stop offset="0.465" stop-color="#a09d9a"/><stop offset="0.501" stop-color="#92908d"/><stop offset="0.575" stop-color="#82807e"/><stop offset="0.648" stop-color="#7a7875"/><stop offset="0.707" stop-color="#747270"/><stop offset="0.760" stop-color="#6f6d6b"/><stop offset="0.806" stop-color="#6b6967"/><stop offset="0.848" stop-color="#686765"/><stop offset="0.883" stop-color="#656461"/><stop offset="0.912" stop-color="#5d5c5a"/><stop offset="0.938" stop-color="#4a4947"/><stop offset="0.956" stop-color="#343332"/><stop offset="0.971" stop-color="#1e1d1c"/><stop offset="0.982" stop-color="#0c0c0c"/><stop offset="0.991" stop-color="#030303"/><stop offset="1.000" stop-color="#000000"/></linearGradient><linearGradient id="r104" gradientUnits="userSpaceOnUse" x1="580.5" y1="0" x2="921.5" y2="0" spreadMethod="reflect"><stop offset="0.000" stop-color="#e1ded9"/><stop offset="0.428" stop-color="#dedbd7"/><stop offset="0.434" stop-color="#d4d1cd"/><stop offset="0.443" stop-color="#c6c3c0"/><stop offset="0.460" stop-color="#b3b0ac"/><stop offset="0.490" stop-color="#9f9d9a"/><stop offset="0.501" stop-color="#999794"/><stop offset="0.575" stop-color="#868481"/><stop offset="0.648" stop-color="#7b7977"/><stop offset="0.707" stop-color="#757371"/><stop offset="0.760" stop-color="#706f6c"/><stop offset="0.806" stop-color="#6d6b69"/><stop offset="0.848" stop-color="#6a6866"/><stop offset="0.883" stop-color="#676563"/><stop offset="0.912" stop-color="#605f5d"/><stop offset="0.938" stop-color="#4e4c4b"/><stop offset="0.956" stop-color="#373635"/><stop offset="0.971" stop-color="#201f1f"/><stop offset="0.982" stop-color="#0d0d0d"/><stop offset="0.991" stop-color="#030303"/><stop offset="1.000" stop-color="#000000"/></linearGradient><linearGradient id="r105" gradientUnits="userSpaceOnUse" x1="580.5" y1="0" x2="921.5" y2="0" spreadMethod="reflect"><stop offset="0.000" stop-color="#dfdcd7"/><stop offset="0.454" stop-color="#ddd9d5"/><stop offset="0.460" stop-color="#d3d0cc"/><stop offset="0.469" stop-color="#c5c2bf"/><stop offset="0.486" stop-color="#b2b0ac"/><stop offset="0.515" stop-color="#9f9d9a"/><stop offset="0.575" stop-color="#8b8986"/><stop offset="0.648" stop-color="#7c7b78"/><stop offset="0.707" stop-color="#767572"/><stop offset="0.760" stop-color="#72706e"/><stop offset="0.806" stop-color="#6e6d6a"/><stop offset="0.848" stop-color="#6c6a68"/><stop offset="0.883" stop-color="#696765"/><stop offset="0.912" stop-color="#63615f"/><stop offset="0.938" stop-color="#51504e"/><stop offset="0.956" stop-color="#3a3a38"/><stop offset="0.971" stop-color="#222221"/><stop offset="0.982" stop-color="#0e0e0e"/><stop offset="0.991" stop-color="#030303"/><stop offset="1.000" stop-color="#000000"/></linearGradient><linearGradient id="r106" gradientUnits="userSpaceOnUse" x1="580.5" y1="0" x2="921.5" y2="0" spreadMethod="reflect"><stop offset="0.000" stop-color="#dddad6"/><stop offset="0.482" stop-color="#dbd8d3"/><stop offset="0.487" stop-color="#d2cfca"/><stop offset="0.496" stop-color="#c4c1be"/><stop offset="0.514" stop-color="#b2b0ac"/><stop offset="0.543" stop-color="#9f9c99"/><stop offset="0.575" stop-color="#908e8b"/><stop offset="0.648" stop-color="#807f7c"/><stop offset="0.707" stop-color="#787674"/><stop offset="0.760" stop-color="#73726f"/><stop offset="0.806" stop-color="#706e6c"/><stop offset="0.848" stop-color="#6d6c69"/><stop offset="0.883" stop-color="#6b6967"/><stop offset="0.912" stop-color="#666462"/><stop offset="0.938" stop-color="#555452"/><stop offset="0.956" stop-color="#3e3d3c"/><stop offset="0.971" stop-color="#252423"/><stop offset="0.982" stop-color="#100f0f"/><stop offset="0.991" stop-color="#040403"/><stop offset="1.000" stop-color="#000000"/></linearGradient><linearGradient id="r107" gradientUnits="userSpaceOnUse" x1="580.5" y1="0" x2="921.5" y2="0" spreadMethod="reflect"><stop offset="0.000" stop-color="#dbd8d4"/><stop offset="0.512" stop-color="#d9d6d2"/><stop offset="0.517" stop-color="#d1cdc9"/><stop offset="0.526" stop-color="#c4c1bd"/><stop offset="0.544" stop-color="#b2b0ac"/><stop offset="0.573" stop-color="#9e9c99"/><stop offset="0.648" stop-color="#868481"/><stop offset="0.707" stop-color="#7b7977"/><stop offset="0.760" stop-color="#757371"/><stop offset="0.806" stop-color="#71706d"/><stop offset="0.848" stop-color="#6f6d6b"/><stop offset="0.883" stop-color="#6d6b69"/><stop offset="0.912" stop-color="#686765"/><stop offset="0.938" stop-color="#595856"/><stop offset="0.956" stop-color="#424140"/><stop offset="0.971" stop-color="#282726"/><stop offset="0.982" stop-color="#111110"/><stop offset="0.991" stop-color="#040404"/><stop offset="1.000" stop-color="#000000"/></linearGradient><linearGradient id="r108" gradientUnits="userSpaceOnUse" x1="580.5" y1="0" x2="921.5" y2="0" spreadMethod="reflect"><stop offset="0.000" stop-color="#d9d6d2"/><stop offset="0.544" stop-color="#d7d4d0"/><stop offset="0.550" stop-color="#cfccc8"/><stop offset="0.559" stop-color="#c3c0bc"/><stop offset="0.576" stop-color="#b3b0ac"/><stop offset="0.606" stop-color="#9e9b98"/><stop offset="0.648" stop-color="#8c8a88"/><stop offset="0.707" stop-color="#817f7c"/><stop offset="0.760" stop-color="#787774"/><stop offset="0.806" stop-color="#73716f"/><stop offset="0.848" stop-color="#716f6d"/><stop offset="0.883" stop-color="#6f6d6b"/><stop offset="0.912" stop-color="#6b6967"/><stop offset="0.938" stop-color="#5d5c5a"/><stop offset="0.956" stop-color="#474544"/><stop offset="0.971" stop-color="#2b2a29"/><stop offset="0.982" stop-color="#131212"/><stop offset="0.991" stop-color="#040404"/><stop offset="1.000" stop-color="#000000"/></linearGradient><linearGradient id="r109" gradientUnits="userSpaceOnUse" x1="580.5" y1="0" x2="921.5" y2="0" spreadMethod="reflect"><stop offset="0.000" stop-color="#d7d4d0"/><stop offset="0.580" stop-color="#d5d2ce"/><stop offset="0.586" stop-color="#cecbc7"/><stop offset="0.595" stop-color="#c3c0bc"/><stop offset="0.612" stop-color="#b2b0ac"/><stop offset="0.642" stop-color="#9d9b97"/><stop offset="0.648" stop-color="#9a9895"/><stop offset="0.707" stop-color="#868481"/><stop offset="0.760" stop-color="#7e7c7a"/><stop offset="0.806" stop-color="#787674"/><stop offset="0.848" stop-color="#747270"/><stop offset="0.883" stop-color="#716f6d"/><stop offset="0.912" stop-color="#6d6c6a"/><stop offset="0.938" stop-color="#61605e"/><stop offset="0.956" stop-color="#4b4a49"/><stop offset="0.971" stop-color="#2f2e2d"/><stop offset="0.982" stop-color="#151414"/><stop offset="0.991" stop-color="#050505"/><stop offset="1.000" stop-color="#000000"/></linearGradient><linearGradient id="r110" gradientUnits="userSpaceOnUse" x1="580.5" y1="0" x2="921.5" y2="0" spreadMethod="reflect"><stop offset="0.000" stop-color="#d5d1cd"/><stop offset="0.620" stop-color="#d3d0cc"/><stop offset="0.626" stop-color="#ccc9c5"/><stop offset="0.635" stop-color="#c2bfbb"/><stop offset="0.652" stop-color="#b2b0ac"/><stop offset="0.682" stop-color="#9d9b98"/><stop offset="0.707" stop-color="#94928f"/><stop offset="0.760" stop-color="#858380"/><stop offset="0.806" stop-color="#7e7c7a"/><stop offset="0.848" stop-color="#7a7875"/><stop offset="0.883" stop-color="#777573"/><stop offset="0.912" stop-color="#747270"/><stop offset="0.938" stop-color="#696765"/><stop offset="0.956" stop-color="#535250"/><stop offset="0.971" stop-color="#363534"/><stop offset="0.982" stop-color="#191919"/><stop offset="0.991" stop-color="#070707"/><stop offset="1.000" stop-color="#010101"/></linearGradient><linearGradient id="r111" gradientUnits="userSpaceOnUse" x1="580.5" y1="0" x2="921.5" y2="0" spreadMethod="reflect"><stop offset="0.000" stop-color="#d2cfca"/><stop offset="0.665" stop-color="#d0cdc9"/><stop offset="0.671" stop-color="#cac7c3"/><stop offset="0.680" stop-color="#c1beba"/><stop offset="0.698" stop-color="#b2b0ac"/><stop offset="0.727" stop-color="#a09e9a"/><stop offset="0.760" stop-color="#93918e"/><stop offset="0.806" stop-color="#888683"/><stop offset="0.848" stop-color="#807e7b"/><stop offset="0.883" stop-color="#7d7b78"/><stop offset="0.912" stop-color="#7a7876"/><stop offset="0.938" stop-color="#716f6d"/><stop offset="0.956" stop-color="#5d5b5a"/><stop offset="0.971" stop-color="#3f3e3c"/><stop offset="0.982" stop-color="#20201f"/><stop offset="0.991" stop-color="#0b0b0b"/><stop offset="1.000" stop-color="#040403"/></linearGradient><linearGradient id="r112" gradientUnits="userSpaceOnUse" x1="580.5" y1="0" x2="921.5" y2="0" spreadMethod="reflect"><stop offset="0.000" stop-color="#cfcbc7"/><stop offset="0.719" stop-color="#cdcac6"/><stop offset="0.725" stop-color="#c8c5c1"/><stop offset="0.734" stop-color="#c1beba"/><stop offset="0.752" stop-color="#b3b0ad"/><stop offset="0.781" stop-color="#a4a29e"/><stop offset="0.806" stop-color="#999693"/><stop offset="0.848" stop-color="#8f8d8a"/><stop offset="0.883" stop-color="#8a8885"/><stop offset="0.912" stop-color="#868481"/><stop offset="0.938" stop-color="#7d7b79"/><stop offset="0.956" stop-color="#6a6967"/><stop offset="0.971" stop-color="#4b4a49"/><stop offset="0.982" stop-color="#2a2928"/><stop offset="0.991" stop-color="#111111"/><stop offset="1.000" stop-color="#070707"/></linearGradient><linearGradient id="r113" gradientUnits="userSpaceOnUse" x1="580.5" y1="0" x2="921.5" y2="0" spreadMethod="reflect"><stop offset="0.000" stop-color="#cbc8c4"/><stop offset="0.788" stop-color="#cac7c3"/><stop offset="0.793" stop-color="#c6c4c0"/><stop offset="0.802" stop-color="#c1beba"/><stop offset="0.820" stop-color="#b6b4b0"/><stop offset="0.849" stop-color="#aaa7a4"/><stop offset="0.883" stop-color="#a09e9b"/><stop offset="0.912" stop-color="#999794"/><stop offset="0.938" stop-color="#908e8b"/><stop offset="0.956" stop-color="#7f7d7a"/><stop offset="0.971" stop-color="#5f5e5c"/><stop offset="0.982" stop-color="#3a3938"/><stop offset="0.991" stop-color="#1c1b1b"/><stop offset="1.000" stop-color="#0e0e0e"/></linearGradient><linearGradient id="r114" gradientUnits="userSpaceOnUse" x1="580.5" y1="0" x2="921.5" y2="0" spreadMethod="reflect"><stop offset="0.000" stop-color="#c8c5c1"/><stop offset="0.895" stop-color="#c8c5c1"/><stop offset="0.901" stop-color="#c6c3bf"/><stop offset="0.909" stop-color="#c3c0bc"/><stop offset="0.927" stop-color="#bebbb7"/><stop offset="0.956" stop-color="#a8a6a2"/><stop offset="0.971" stop-color="#8a8885"/><stop offset="0.982" stop-color="#605f5d"/><stop offset="0.991" stop-color="#363534"/><stop offset="1.000" stop-color="#201f1f"/></linearGradient><linearGradient id="r115" gradientUnits="userSpaceOnUse" x1="580.5" y1="0" x2="921.5" y2="0" spreadMethod="reflect"><stop offset="0.000" stop-color="#292827"/><stop offset="1.000" stop-color="#282727"/></linearGradient><clipPath id="bclip"><path d="M481 33 H1359 V727 H481 Z M570 33 V223 H632 L637 191 V33 Z M1274 33 V223 H1211 L1206 191 V33 Z" clip-rule="evenodd"/></clipPath><clipPath id="bcirc"><circle cx="921.5" cy="381" r="341"/></clipPath><filter id="bvb" color-interpolation-filters="sRGB" x="-2%" y="-5%" width="104%" height="110%"><feGaussianBlur stdDeviation="0.5 3.5999999999999996"/></filter><filter id="bblur" color-interpolation-filters="sRGB" x="-5%" y="-5%" width="110%" height="110%"><feGaussianBlur stdDeviation="0.8"/></filter></defs><rect x="481" y="33" width="878" height="694" fill="#000"/><rect x="481" y="33" width="1" height="694" fill="#55606e"/><rect x="570" y="33" width="704" height="694" fill="#040406"/><g clip-path="url(#bclip)"><g filter="url(#bblur)"><g clip-path="url(#bcirc)"><g filter="url(#bvb)"><rect x="580.5" y="33" width="682.0" height="6" fill="url(#r0)"/><rect x="580.5" y="39" width="682.0" height="6" fill="url(#r1)"/><rect x="580.5" y="45" width="682.0" height="6" fill="url(#r2)"/><rect x="580.5" y="51" width="682.0" height="6" fill="url(#r3)"/><rect x="580.5" y="57" width="682.0" height="6" fill="url(#r4)"/><rect x="580.5" y="63" width="682.0" height="6" fill="url(#r5)"/><rect x="580.5" y="69" width="682.0" height="6" fill="url(#r6)"/><rect x="580.5" y="75" width="682.0" height="6" fill="url(#r7)"/><rect x="580.5" y="81" width="682.0" height="6" fill="url(#r8)"/><rect x="580.5" y="87" width="682.0" height="6" fill="url(#r9)"/><rect x="580.5" y="93" width="682.0" height="6" fill="url(#r10)"/><rect x="580.5" y="99" width="682.0" height="6" fill="url(#r11)"/><rect x="580.5" y="105" width="682.0" height="6" fill="url(#r12)"/><rect x="580.5" y="111" width="682.0" height="6" fill="url(#r13)"/><rect x="580.5" y="117" width="682.0" height="6" fill="url(#r14)"/><rect x="580.5" y="123" width="682.0" height="6" fill="url(#r15)"/><rect x="580.5" y="129" width="682.0" height="6" fill="url(#r16)"/><rect x="580.5" y="135" width="682.0" height="6" fill="url(#r17)"/><rect x="580.5" y="141" width="682.0" height="6" fill="url(#r18)"/><rect x="580.5" y="147" width="682.0" height="6" fill="url(#r19)"/><rect x="580.5" y="153" width="682.0" height="6" fill="url(#r20)"/><rect x="580.5" y="159" width="682.0" height="6" fill="url(#r21)"/><rect x="580.5" y="165" width="682.0" height="6" fill="url(#r22)"/><rect x="580.5" y="171" width="682.0" height="6" fill="url(#r23)"/><rect x="580.5" y="177" width="682.0" height="6" fill="url(#r24)"/><rect x="580.5" y="183" width="682.0" height="6" fill="url(#r25)"/><rect x="580.5" y="189" width="682.0" height="6" fill="url(#r26)"/><rect x="580.5" y="195" width="682.0" height="6" fill="url(#r27)"/><rect x="580.5" y="201" width="682.0" height="6" fill="url(#r28)"/><rect x="580.5" y="207" width="682.0" height="6" fill="url(#r29)"/><rect x="580.5" y="213" width="682.0" height="6" fill="url(#r30)"/><rect x="580.5" y="219" width="682.0" height="6" fill="url(#r31)"/><rect x="580.5" y="225" width="682.0" height="6" fill="url(#r32)"/><rect x="580.5" y="231" width="682.0" height="6" fill="url(#r33)"/><rect x="580.5" y="237" width="682.0" height="6" fill="url(#r34)"/><rect x="580.5" y="243" width="682.0" height="6" fill="url(#r35)"/><rect x="580.5" y="249" width="682.0" height="6" fill="url(#r36)"/><rect x="580.5" y="255" width="682.0" height="6" fill="url(#r37)"/><rect x="580.5" y="261" width="682.0" height="6" fill="url(#r38)"/><rect x="580.5" y="267" width="682.0" height="6" fill="url(#r39)"/><rect x="580.5" y="273" width="682.0" height="6" fill="url(#r40)"/><rect x="580.5" y="279" width="682.0" height="6" fill="url(#r41)"/><rect x="580.5" y="285" width="682.0" height="6" fill="url(#r42)"/><rect x="580.5" y="291" width="682.0" height="6" fill="url(#r43)"/><rect x="580.5" y="297" width="682.0" height="6" fill="url(#r44)"/><rect x="580.5" y="303" width="682.0" height="6" fill="url(#r45)"/><rect x="580.5" y="309" width="682.0" height="6" fill="url(#r46)"/><rect x="580.5" y="315" width="682.0" height="6" fill="url(#r47)"/><rect x="580.5" y="321" width="682.0" height="6" fill="url(#r48)"/><rect x="580.5" y="327" width="682.0" height="6" fill="url(#r49)"/><rect x="580.5" y="333" width="682.0" height="6" fill="url(#r50)"/><rect x="580.5" y="339" width="682.0" height="6" fill="url(#r51)"/><rect x="580.5" y="345" width="682.0" height="6" fill="url(#r52)"/><rect x="580.5" y="351" width="682.0" height="6" fill="url(#r53)"/><rect x="580.5" y="357" width="682.0" height="6" fill="url(#r54)"/><rect x="580.5" y="363" width="682.0" height="6" fill="url(#r55)"/><rect x="580.5" y="369" width="682.0" height="6" fill="url(#r56)"/><rect x="580.5" y="375" width="682.0" height="6" fill="url(#r57)"/><rect x="580.5" y="381" width="682.0" height="6" fill="url(#r58)"/><rect x="580.5" y="387" width="682.0" height="6" fill="url(#r59)"/><rect x="580.5" y="393" width="682.0" height="6" fill="url(#r60)"/><rect x="580.5" y="399" width="682.0" height="6" fill="url(#r61)"/><rect x="580.5" y="405" width="682.0" height="6" fill="url(#r62)"/><rect x="580.5" y="411" width="682.0" height="6" fill="url(#r63)"/><rect x="580.5" y="417" width="682.0" height="6" fill="url(#r64)"/><rect x="580.5" y="423" width="682.0" height="6" fill="url(#r65)"/><rect x="580.5" y="429" width="682.0" height="6" fill="url(#r66)"/><rect x="580.5" y="435" width="682.0" height="6" fill="url(#r67)"/><rect x="580.5" y="441" width="682.0" height="6" fill="url(#r68)"/><rect x="580.5" y="447" width="682.0" height="6" fill="url(#r69)"/><rect x="580.5" y="453" width="682.0" height="6" fill="url(#r70)"/><rect x="580.5" y="459" width="682.0" height="6" fill="url(#r71)"/><rect x="580.5" y="465" width="682.0" height="6" fill="url(#r72)"/><rect x="580.5" y="471" width="682.0" height="6" fill="url(#r73)"/><rect x="580.5" y="477" width="682.0" height="6" fill="url(#r74)"/><rect x="580.5" y="483" width="682.0" height="6" fill="url(#r75)"/><rect x="580.5" y="489" width="682.0" height="6" fill="url(#r76)"/><rect x="580.5" y="495" width="682.0" height="6" fill="url(#r77)"/><rect x="580.5" y="501" width="682.0" height="6" fill="url(#r78)"/><rect x="580.5" y="507" width="682.0" height="6" fill="url(#r79)"/><rect x="580.5" y="513" width="682.0" height="6" fill="url(#r80)"/><rect x="580.5" y="519" width="682.0" height="6" fill="url(#r81)"/><rect x="580.5" y="525" width="682.0" height="6" fill="url(#r82)"/><rect x="580.5" y="531" width="682.0" height="6" fill="url(#r83)"/><rect x="580.5" y="537" width="682.0" height="6" fill="url(#r84)"/><rect x="580.5" y="543" width="682.0" height="6" fill="url(#r85)"/><rect x="580.5" y="549" width="682.0" height="6" fill="url(#r86)"/><rect x="580.5" y="555" width="682.0" height="6" fill="url(#r87)"/><rect x="580.5" y="561" width="682.0" height="6" fill="url(#r88)"/><rect x="580.5" y="567" width="682.0" height="6" fill="url(#r89)"/><rect x="580.5" y="573" width="682.0" height="6" fill="url(#r90)"/><rect x="580.5" y="579" width="682.0" height="6" fill="url(#r91)"/><rect x="580.5" y="585" width="682.0" height="6" fill="url(#r92)"/><rect x="580.5" y="591" width="682.0" height="6" fill="url(#r93)"/><rect x="580.5" y="597" width="682.0" height="6" fill="url(#r94)"/><rect x="580.5" y="603" width="682.0" height="6" fill="url(#r95)"/><rect x="580.5" y="609" width="682.0" height="6" fill="url(#r96)"/><rect x="580.5" y="615" width="682.0" height="6" fill="url(#r97)"/><rect x="580.5" y="621" width="682.0" height="6" fill="url(#r98)"/><rect x="580.5" y="627" width="682.0" height="6" fill="url(#r99)"/><rect x="580.5" y="633" width="682.0" height="6" fill="url(#r100)"/><rect x="580.5" y="639" width="682.0" height="6" fill="url(#r101)"/><rect x="580.5" y="645" width="682.0" height="6" fill="url(#r102)"/><rect x="580.5" y="651" width="682.0" height="6" fill="url(#r103)"/><rect x="580.5" y="657" width="682.0" height="6" fill="url(#r104)"/><rect x="580.5" y="663" width="682.0" height="6" fill="url(#r105)"/><rect x="580.5" y="669" width="682.0" height="6" fill="url(#r106)"/><rect x="580.5" y="675" width="682.0" height="6" fill="url(#r107)"/><rect x="580.5" y="681" width="682.0" height="6" fill="url(#r108)"/><rect x="580.5" y="687" width="682.0" height="6" fill="url(#r109)"/><rect x="580.5" y="693" width="682.0" height="6" fill="url(#r110)"/><rect x="580.5" y="699" width="682.0" height="6" fill="url(#r111)"/><rect x="580.5" y="705" width="682.0" height="6" fill="url(#r112)"/><rect x="580.5" y="711" width="682.0" height="6" fill="url(#r113)"/><rect x="580.5" y="717" width="682.0" height="6" fill="url(#r114)"/><rect x="580.5" y="723" width="682.0" height="6" fill="url(#r115)"/></g><linearGradient id="rimg" gradientUnits="userSpaceOnUse" x1="580.5" y1="0" x2="1262.5" y2="0"><stop offset="0" stop-color="#fff" stop-opacity="1"/><stop offset="0.44" stop-color="#fff" stop-opacity="0.8"/><stop offset="0.5" stop-color="#fff" stop-opacity="0"/><stop offset="0.56" stop-color="#fff" stop-opacity="0.8"/><stop offset="1" stop-color="#fff" stop-opacity="1"/></linearGradient><circle cx="921.5" cy="381" r="340.0" fill="none" stroke="url(#rimg)" stroke-opacity="0.5" stroke-width="2.0"/></g></g></g><g fill="none" stroke="#3a3a3a" stroke-width="1.6" stroke-opacity="0.8"><path d="M664.3 162.7 V181.3 L651.9 183.7"/><path d="M1178.7 162.7 V181.3 L1191.1 183.7"/><path d="M624 283.8 L638.7 297.5"/><path d="M1219 283.8 L1204.3 297.5"/></g><filter id="rb" color-interpolation-filters="sRGB"><feGaussianBlur stdDeviation="0.7"/></filter><g fill="#14142a" stroke="#5a64b4" stroke-opacity="0.38" stroke-width="2.2" filter="url(#rb)"><circle cx="585" cy="124" r="6.5"/><circle cx="1258" cy="124" r="6.5"/><circle cx="619.5" cy="632" r="6"/><circle cx="1223.5" cy="632" r="6"/></g></svg>
<div class="a" style="left:482px;top:33px;width:75px;height:79px;background:#B9D1EA"></div>
<div class="a" style="left:482px;top:33px;width:75px;height:78px;border:1px solid #7a8088;border-radius:3px;background:#fff"></div>
<div class="a" style="left:484px;top:35px;width:71px;height:74px;background:#008000"></div>
<div class="t c" style="left:481px;top:66px;width:75px;text-align:center;color:#0a200a;letter-spacing:-0.3px">&lt; Inverser &gt;</div>
<div class="a" style="left:1124px;top:33px;width:75px;height:79px;background:#B9D1EA"></div>
<div class="a" style="left:1124px;top:33px;width:75px;height:78px;border:1px solid #7a8088;border-radius:3px;background:#fff"></div>
<div class="a" style="left:1126px;top:35px;width:71px;height:74px;background:#7FFFD4"></div>
<div class="t c" style="left:1124px;top:67px;width:75px;text-align:center;color:#002a1a">Plein Ecran</div>
<div class="a" style="left:1205px;top:33px;width:75px;height:79px;background:#B9D1EA"></div>
<div class="a" style="left:1205px;top:33px;width:75px;height:78px;border:1px solid #7a8088;border-radius:3px;background:#fff"></div>
<div class="a" style="left:1207px;top:35px;width:71px;height:74px;background:#1E90FF"></div>
<div class="t c" style="left:1205px;top:60px;width:75px;text-align:center;color:#001a50;line-height:13px">Appliquer<br>Masque</div>
</body></html>
